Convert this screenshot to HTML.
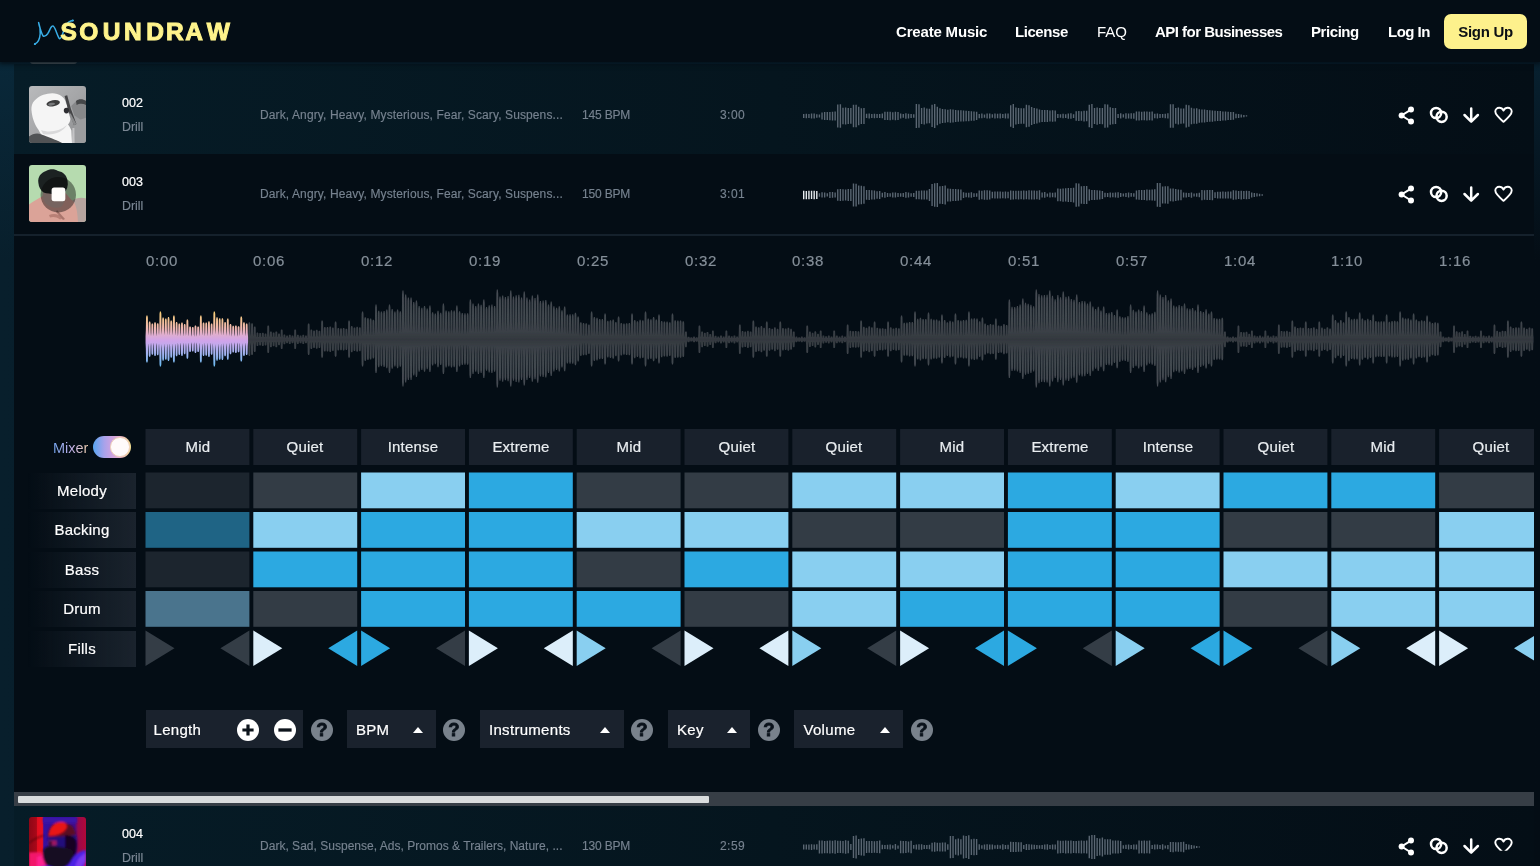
<!DOCTYPE html><html lang="en"><head><meta charset="utf-8"><title>SOUNDRAW</title><style>
*{margin:0;padding:0;box-sizing:border-box}
html,body{width:1540px;height:866px;overflow:hidden}
body{position:relative;font-family:"Liberation Sans",sans-serif;color:#fff;
 background:linear-gradient(180deg,rgba(10,46,66,.6) 60px,rgba(8,30,44,0) 260px),linear-gradient(90deg,#081f2c 0%,#071c28 20%,#06141d 60%,#040d15 100%);}
.abs{position:absolute}
.t{position:absolute;white-space:nowrap;line-height:1}
.t,.nav,#signup,.hcell,.lab,.ctl,.q,#hdr svg{will-change:transform}
#hdr{position:absolute;left:0;top:0;width:1540px;height:62px;background:#040d15;box-shadow:0 1px 5px 1px rgba(4,13,21,.9);z-index:5}
.nav{position:absolute;top:24px;font-size:15px;font-weight:700;color:#fff;white-space:nowrap;line-height:16px}
#signup{position:absolute;left:1444px;top:14px;width:83px;height:35px;border-radius:7px;background:#fdf18c;color:#0b0f14;font-weight:700;font-size:15px;line-height:35px;text-align:center;letter-spacing:-.29px}
#logo{position:absolute;left:62px;top:19px;font-size:24px;font-weight:700;letter-spacing:3.5px;color:#fff48c;line-height:24px}
.row{position:absolute;left:14px;width:1520px}
.thumb{position:absolute;left:29px;width:57px;height:57px;border-radius:3px;overflow:hidden}
.title{font-size:12.5px;color:#fff;left:122px;-webkit-text-stroke:.2px #fff}
.sub{font-size:12.4px;color:#7b8794;left:122px;-webkit-text-stroke:.15px #7b8794}
.meta{font-size:12px;color:#76828f;letter-spacing:.11px;-webkit-text-stroke:.15px #76828f}
#panel{position:absolute;left:14px;top:154px;width:1520px;height:638px;background:#040d15;overflow:hidden}
.tl{font-size:15px;color:#858f99;letter-spacing:.7px;-webkit-text-stroke:.2px #858f99}
.cell{position:absolute;width:104px;height:36px}
.hcell{position:absolute;z-index:2;-webkit-text-stroke:.2px #e9edf0;width:104px;height:36px;letter-spacing:.2px;color:#e9edf0;font-size:15px;text-align:center;line-height:36px}
.lab{position:absolute;left:28px;width:108px;height:35.6px;letter-spacing:.25px;-webkit-text-stroke:.2px #fff;background:linear-gradient(90deg,rgba(26,35,45,0) 0%,rgba(26,35,45,.5) 45%,#1a232d 100%);color:#fff;font-size:15px;text-align:center;line-height:36px}
.ctl{position:absolute;-webkit-text-stroke:.2px #fff;top:710px;height:38px;background:#1a222d;color:#fff;font-size:15px;line-height:39.4px;padding-left:7.5px;letter-spacing:.3px}
.q{position:absolute;top:718.5px;width:22px;height:22px;border-radius:50%;background:#79828c;color:#0a121b;font-weight:700;font-size:18.5px;line-height:22.5px;text-align:center;-webkit-text-stroke:.8px #0a121b}
.caret{position:absolute;top:16.5px;width:0;height:0;border-left:5.5px solid transparent;border-right:5.5px solid transparent;border-bottom:6px solid #fff}
</style></head><body>
<div class="abs" style="left:14px;top:64px;width:1520px;height:90px;background:linear-gradient(90deg,#061c27,#05151e 50%,#040e16)"></div><div class="thumb" style="top:86px"><svg width="57" height="57" viewBox="0 0 57 57"><defs><linearGradient id="g2" x1="0" y1="0" x2="1" y2="1"><stop offset="0" stop-color="#b9babc"/><stop offset=".55" stop-color="#a3a4a6"/><stop offset="1" stop-color="#88898b"/></linearGradient><filter id="b2"><feGaussianBlur stdDeviation=".55"/></filter></defs>
<rect width="57" height="57" fill="url(#g2)"/><g filter="url(#b2)">
<path d="M46 33 L57 31 L57 57 L43 57 Z" fill="#9c9d9f"/>
<path d="M42.2 20 L48.5 13.7 L57 14.5 L57 31.8 L51.6 33.6 L45.4 29.4 Z" fill="#87888a"/>
<path d="M47 15 C50 12.6 54 13 57 15 L57 19 C54 17.4 50 17.6 47.6 19 Z" fill="#454648"/>
<path d="M18.7 7.8 C24 6.6 29 7.6 32 9.8 C34.6 11.4 36.4 14 37 17 C38.2 19 38.6 21 37.6 23 C39 26 40.6 29 41.4 31.4 C41.6 34.6 40.4 37 39 38.4 C40.6 40.6 42 42.6 42.4 44.6 L43 57 L33 57 C28 54 22 53.4 17 52 C13 50 11 47 9.6 44 C6.4 40 3.6 33 2.8 27 C2 22.6 2.4 19.6 4 16.6 C7.6 11.6 13 8.6 18.7 7.8 Z" fill="#f5f5f5"/>
<path d="M12 44 C20 47 30 45.6 38 39 C34 46 24 50 14 48 Z" fill="#d9d9da"/>
<path d="M0 50.5 C3.6 47.6 8.4 46.6 12.4 48.4 C18 50.6 27 53.4 33 57 L0 57 Z" fill="#515254"/>
<ellipse cx="24.2" cy="17.3" rx="6.8" ry="3.1" fill="#3c3c3e" transform="rotate(-10 24.2 17.3)"/>
<ellipse cx="22.6" cy="18.2" rx="3.4" ry="1.4" fill="#77787a" transform="rotate(-10 22.6 18.2)"/>
<path d="M35.6 10 L38.2 9.2 L41.8 22.4 L47.4 38 L45 39.2 L39.2 24 Z" fill="#444547"/>
<path d="M41.4 27 L47.4 38 L45 39.2 L40.6 30 Z" fill="#8a8b8d"/>
<ellipse cx="37.4" cy="24.6" rx="2.6" ry="2.8" fill="#2e2e30"/>
<path d="M43.4 42 L45.4 42 L45.6 57 L43 57 Z" fill="#c4c4c6"/></g></svg></div><div class="t title" style="top:96.5px">002</div><div class="t sub" style="top:121px">Drill</div><div class="t meta" style="left:259.5px;top:109px;letter-spacing:0.11px">Dark, Angry, Heavy, Mysterious, Fear, Scary, Suspens...</div><div class="t meta" style="left:582px;top:109px;letter-spacing:-.18px">145 BPM</div><div class="t meta" style="left:720px;top:109px;letter-spacing:.45px">3:00</div><svg class="abs" style="left:802.3px;top:102.5px" width="448" height="26" viewBox="0 0 448 26"><path d="M1.00 11.1h1.4v3.8h-1.4zM3.62 10.7h1.4v4.6h-1.4zM6.24 10.9h1.4v4.2h-1.4zM8.86 10.6h1.4v4.8h-1.4zM11.48 10.6h1.4v4.8h-1.4zM14.10 11.3h1.4v3.4h-1.4zM16.72 11.4h1.4v3.2h-1.4zM19.34 9.6h1.4v6.8h-1.4zM21.96 9.1h1.4v7.8h-1.4zM24.58 9.0h1.4v8.1h-1.4zM27.20 8.9h1.4v8.3h-1.4zM29.82 8.7h1.4v8.7h-1.4zM32.44 8.5h1.4v8.9h-1.4zM35.06 1.4h1.4v23.2h-1.4zM37.68 1.3h1.4v23.5h-1.4zM40.30 4.8h1.4v16.4h-1.4zM42.92 4.5h1.4v17.0h-1.4zM45.54 4.9h1.4v16.2h-1.4zM48.16 5.1h1.4v15.7h-1.4zM50.78 1.8h1.4v22.5h-1.4zM53.40 1.7h1.4v22.6h-1.4zM56.02 3.8h1.4v18.4h-1.4zM58.64 5.2h1.4v15.7h-1.4zM61.26 5.0h1.4v16.1h-1.4zM63.88 10.8h1.4v4.3h-1.4zM66.50 10.6h1.4v4.8h-1.4zM69.12 11.0h1.4v4.0h-1.4zM71.74 10.7h1.4v4.5h-1.4zM74.36 10.9h1.4v4.2h-1.4zM76.98 10.9h1.4v4.1h-1.4zM79.60 10.6h1.4v4.7h-1.4zM82.22 8.8h1.4v8.3h-1.4zM84.84 8.8h1.4v8.3h-1.4zM87.46 8.8h1.4v8.4h-1.4zM90.08 9.2h1.4v7.6h-1.4zM92.70 8.8h1.4v8.4h-1.4zM95.32 9.0h1.4v8.0h-1.4zM97.94 10.5h1.4v5.1h-1.4zM100.56 11.1h1.4v3.7h-1.4zM103.18 10.3h1.4v5.4h-1.4zM105.80 10.7h1.4v4.7h-1.4zM108.42 11.0h1.4v3.9h-1.4zM111.04 11.3h1.4v3.4h-1.4zM113.66 0.9h1.4v24.1h-1.4zM116.28 1.2h1.4v23.6h-1.4zM118.90 5.0h1.4v16.0h-1.4zM121.52 4.6h1.4v16.8h-1.4zM124.14 5.6h1.4v14.9h-1.4zM126.76 5.8h1.4v14.4h-1.4zM129.38 1.8h1.4v22.3h-1.4zM132.00 1.0h1.4v24.1h-1.4zM134.62 3.8h1.4v18.4h-1.4zM137.24 5.3h1.4v15.4h-1.4zM139.86 5.9h1.4v14.1h-1.4zM142.48 6.3h1.4v13.4h-1.4zM145.10 6.7h1.4v12.6h-1.4zM147.72 6.3h1.4v13.4h-1.4zM150.34 6.5h1.4v13.1h-1.4zM152.96 7.1h1.4v11.8h-1.4zM155.58 7.2h1.4v11.6h-1.4zM158.20 7.3h1.4v11.3h-1.4zM160.82 7.5h1.4v11.0h-1.4zM163.44 7.8h1.4v10.4h-1.4zM166.06 7.9h1.4v10.3h-1.4zM168.68 8.3h1.4v9.4h-1.4zM171.30 8.4h1.4v9.3h-1.4zM173.92 8.8h1.4v8.3h-1.4zM176.54 10.9h1.4v4.3h-1.4zM179.16 10.6h1.4v4.7h-1.4zM181.78 11.4h1.4v3.3h-1.4zM184.40 10.6h1.4v4.8h-1.4zM187.02 10.6h1.4v4.8h-1.4zM189.64 11.3h1.4v3.4h-1.4zM192.26 10.6h1.4v4.8h-1.4zM194.88 10.8h1.4v4.4h-1.4zM197.50 10.5h1.4v5.0h-1.4zM200.12 10.9h1.4v4.1h-1.4zM202.74 10.5h1.4v5.0h-1.4zM205.36 10.4h1.4v5.1h-1.4zM207.98 2.2h1.4v21.6h-1.4zM210.60 1.0h1.4v24.0h-1.4zM213.22 4.6h1.4v16.8h-1.4zM215.84 5.0h1.4v16.0h-1.4zM218.46 5.2h1.4v15.5h-1.4zM221.08 5.2h1.4v15.5h-1.4zM223.70 1.8h1.4v22.4h-1.4zM226.32 2.3h1.4v21.5h-1.4zM228.94 3.9h1.4v18.2h-1.4zM231.56 5.0h1.4v16.0h-1.4zM234.18 5.6h1.4v14.9h-1.4zM236.80 6.6h1.4v12.8h-1.4zM239.42 7.0h1.4v12.0h-1.4zM242.04 7.0h1.4v12.0h-1.4zM244.66 7.1h1.4v11.9h-1.4zM247.28 7.4h1.4v11.2h-1.4zM249.90 7.3h1.4v11.5h-1.4zM252.52 7.6h1.4v10.9h-1.4zM255.14 11.1h1.4v3.8h-1.4zM257.76 11.2h1.4v3.5h-1.4zM260.38 10.7h1.4v4.6h-1.4zM263.00 11.2h1.4v3.7h-1.4zM265.62 10.4h1.4v5.3h-1.4zM268.24 10.3h1.4v5.4h-1.4zM270.86 11.2h1.4v3.7h-1.4zM273.48 8.3h1.4v9.4h-1.4zM276.10 8.1h1.4v9.8h-1.4zM278.72 8.3h1.4v9.5h-1.4zM281.34 7.7h1.4v10.7h-1.4zM283.96 7.7h1.4v10.5h-1.4zM286.58 1.7h1.4v22.5h-1.4zM289.20 1.0h1.4v23.9h-1.4zM291.82 5.0h1.4v16.0h-1.4zM294.44 4.4h1.4v17.3h-1.4zM297.06 5.1h1.4v15.9h-1.4zM299.68 4.9h1.4v16.3h-1.4zM302.30 1.3h1.4v23.4h-1.4zM304.92 1.4h1.4v23.2h-1.4zM307.54 4.2h1.4v17.6h-1.4zM310.16 4.9h1.4v16.3h-1.4zM312.78 5.1h1.4v15.8h-1.4zM315.40 11.0h1.4v3.9h-1.4zM318.02 10.3h1.4v5.3h-1.4zM320.64 11.3h1.4v3.3h-1.4zM323.26 10.2h1.4v5.5h-1.4zM325.88 10.5h1.4v5.0h-1.4zM328.50 10.2h1.4v5.6h-1.4zM331.12 10.2h1.4v5.5h-1.4zM333.74 8.6h1.4v8.8h-1.4zM336.36 8.5h1.4v9.0h-1.4zM338.98 8.7h1.4v8.5h-1.4zM341.60 8.6h1.4v8.7h-1.4zM344.22 8.4h1.4v9.2h-1.4zM346.84 8.7h1.4v8.5h-1.4zM349.46 8.5h1.4v9.1h-1.4zM352.08 10.8h1.4v4.4h-1.4zM354.70 10.4h1.4v5.2h-1.4zM357.32 10.9h1.4v4.1h-1.4zM359.94 11.1h1.4v3.7h-1.4zM362.56 10.7h1.4v4.6h-1.4zM365.18 10.3h1.4v5.3h-1.4zM367.80 1.2h1.4v23.6h-1.4zM370.42 1.2h1.4v23.6h-1.4zM373.04 5.1h1.4v15.7h-1.4zM375.66 4.5h1.4v16.9h-1.4zM378.28 5.4h1.4v15.3h-1.4zM380.90 5.4h1.4v15.2h-1.4zM383.52 1.7h1.4v22.7h-1.4zM386.14 2.3h1.4v21.4h-1.4zM388.76 4.7h1.4v16.5h-1.4zM391.38 5.4h1.4v15.3h-1.4zM394.00 5.2h1.4v15.6h-1.4zM396.62 6.2h1.4v13.5h-1.4zM399.24 6.6h1.4v12.8h-1.4zM401.86 6.6h1.4v12.8h-1.4zM404.48 7.0h1.4v11.9h-1.4zM407.10 7.3h1.4v11.4h-1.4zM409.72 7.4h1.4v11.3h-1.4zM412.34 7.7h1.4v10.6h-1.4zM414.96 8.1h1.4v9.9h-1.4zM417.58 8.0h1.4v10.0h-1.4zM420.20 8.4h1.4v9.2h-1.4zM422.82 8.5h1.4v9.0h-1.4zM425.44 8.8h1.4v8.3h-1.4zM428.06 8.9h1.4v8.2h-1.4zM430.68 9.1h1.4v7.7h-1.4zM433.30 10.8h1.4v4.4h-1.4zM435.92 11.1h1.4v3.8h-1.4zM438.54 11.4h1.4v3.2h-1.4zM441.16 11.9h1.4v2.3h-1.4zM443.78 12.3h1.4v1.3h-1.4z" fill="#5a6672"/></svg><svg class="abs" style="left:1390px;top:100px" width="130" height="30" viewBox="1390 100 130 30"><g fill="#fff" stroke="#fff"><circle cx="1401.6" cy="115.5" r="3" stroke="none"/><circle cx="1411" cy="109.6" r="3" stroke="none"/><circle cx="1411" cy="121.5" r="3" stroke="none"/><path d="M1411 109.6 L1401.6 115.5 L1411 121.5" fill="none" stroke-width="2"/></g><g fill="none" stroke="#fff" stroke-width="2.5"><circle cx="1436.1" cy="113" r="5.1"/><circle cx="1441.6" cy="116.8" r="5.1"/></g><path d="M1471.2 108.4 V121.4 M1464.5 115 L1471.2 121.7 L1477.9 115" fill="none" stroke="#fff" stroke-width="2.5" stroke-linecap="round" stroke-linejoin="round"/><g><path d="M1503.5 121.8 C1499 118 1495.3 115 1495.3 111.6 C1495.3 109.3 1497.1 107.8 1499.2 107.8 C1500.9 107.8 1502.6 108.8 1503.5 110.6 C1504.4 108.8 1506.1 107.8 1507.8 107.8 C1509.9 107.8 1511.7 109.3 1511.7 111.6 C1511.7 115 1508 118 1503.5 121.8 Z" fill="none" stroke="#fff" stroke-width="1.9" stroke-linejoin="round"/></g></svg>
<div class="abs" style="left:14px;top:806px;width:1520px;height:60px;background:linear-gradient(90deg,#061c27,#05151e 50%,#040e16)"></div><div class="thumb" style="top:817px"><svg width="57" height="57" viewBox="0 0 57 57"><defs><linearGradient id="g4" x1="0" y1="0" x2="1" y2="0"><stop offset="0" stop-color="#8e0616"/><stop offset=".13" stop-color="#a80818"/><stop offset=".15" stop-color="#e40e20"/><stop offset=".235" stop-color="#e81020"/><stop offset=".26" stop-color="#3610a0"/><stop offset=".55" stop-color="#2e0e9a"/><stop offset=".8" stop-color="#400c8c"/><stop offset=".86" stop-color="#98084c"/><stop offset="1" stop-color="#b00838"/></linearGradient><filter id="b4"><feGaussianBlur stdDeviation=".9"/></filter></defs>
<rect width="57" height="57" fill="url(#g4)"/><g filter="url(#b4)">
<rect x="14" y="0" width="34" height="6" fill="#3a14a8"/>
<path d="M0 26 C5 22 10 19.6 15 18.6" stroke="#3a0612" stroke-width="1" fill="none"/>
<path d="M19 20 C19 11 24 5 32 5 C40 5 46 10 47 18 L46 24 L20 24 Z" fill="#5a0a20"/>
<path d="M19.6 19 C20 10.6 25 5 32 5 C36 5 38 7 38 10 C36 16 28 19 19.6 19 Z" fill="#e81212"/>
<path d="M19 20 C26 20 40 19 47 18 C49 26 48 36 44 42 L22 42 C19 34 18.6 26 19 20Z" fill="#24107c"/>
<path d="M36 18 C42 18 47 20 47.6 26 C48 34 46 40 42 44 L36 44 Z" fill="#140622"/>
<rect x="19.6" y="23.4" width="8" height="5" fill="#a01860"/><rect x="20" y="24.4" width="3" height="4" fill="#30102a"/>
<path d="M14 36 C14 31 18 28.6 24 29 C32 30 40 30 44 34 C46 40 44 47 38 50 C30 52 20 51 16 46 C14 43 14 40 14 36 Z" fill="#160824"/>
<path d="M0 35.4 L13 35 C13.6 40 15 46 19 50 L20 57 L0 57 Z" fill="#f2146a"/>
<path d="M8 40 L13 38 L16 48 L12 57 L8 57Z" fill="#ff2090"/>
<path d="M57 33 C50 34 45 38 42 44 C40 48 36 51 30 52 L24 57 L57 57 Z" fill="#4c22e4"/>
<path d="M57 36 C52 38 48 42 46 50 L52 50 L57 44Z" fill="#7a3af0"/>
<path d="M57 44 L52 57 L57 57Z" fill="#d01030"/>
<path d="M12 50 C16 48 22 49 26 52 L26 57 L10 57Z" fill="#4a2ae0"/>
</g></svg></div><div class="t title" style="top:827.5px">004</div><div class="t sub" style="top:852px">Drill</div><div class="t meta" style="left:259.5px;top:840px;letter-spacing:0.02px">Dark, Sad, Suspense, Ads, Promos &amp; Trailers, Nature, ...</div><div class="t meta" style="left:582px;top:840px;letter-spacing:-.18px">130 BPM</div><div class="t meta" style="left:720px;top:840px;letter-spacing:.45px">2:59</div><svg class="abs" style="left:802.3px;top:833.5px" width="400" height="26" viewBox="0 0 400 26"><path d="M1.00 10.6h1.4v4.8h-1.4zM3.62 10.4h1.4v5.1h-1.4zM6.24 10.4h1.4v5.3h-1.4zM8.86 10.2h1.4v5.7h-1.4zM11.48 10.4h1.4v5.1h-1.4zM14.10 10.2h1.4v5.6h-1.4zM16.72 6.6h1.4v12.8h-1.4zM19.34 6.4h1.4v13.1h-1.4zM21.96 6.9h1.4v12.3h-1.4zM24.58 6.8h1.4v12.5h-1.4zM27.20 6.5h1.4v13.0h-1.4zM29.82 6.8h1.4v12.4h-1.4zM32.44 6.2h1.4v13.5h-1.4zM35.06 6.8h1.4v12.3h-1.4zM37.68 6.8h1.4v12.3h-1.4zM40.30 6.9h1.4v12.3h-1.4zM42.92 6.3h1.4v13.4h-1.4zM45.54 6.8h1.4v12.4h-1.4zM48.16 10.1h1.4v5.8h-1.4zM50.78 1.9h1.4v22.2h-1.4zM53.40 1.6h1.4v22.9h-1.4zM56.02 4.9h1.4v16.2h-1.4zM58.64 4.4h1.4v17.2h-1.4zM61.26 4.2h1.4v17.6h-1.4zM63.88 7.0h1.4v12.1h-1.4zM66.50 7.1h1.4v11.7h-1.4zM69.12 7.0h1.4v12.0h-1.4zM71.74 7.2h1.4v11.5h-1.4zM74.36 7.0h1.4v12.0h-1.4zM76.98 6.6h1.4v12.7h-1.4zM79.60 10.8h1.4v4.4h-1.4zM82.22 11.0h1.4v4.0h-1.4zM84.84 10.8h1.4v4.5h-1.4zM87.46 10.5h1.4v5.0h-1.4zM90.08 11.3h1.4v3.3h-1.4zM92.70 10.1h1.4v5.7h-1.4zM95.32 11.4h1.4v3.3h-1.4zM97.94 6.8h1.4v12.4h-1.4zM100.56 6.9h1.4v12.3h-1.4zM103.18 7.0h1.4v12.0h-1.4zM105.80 7.4h1.4v11.2h-1.4zM108.42 6.7h1.4v12.5h-1.4zM111.04 11.1h1.4v3.7h-1.4zM113.66 10.4h1.4v5.2h-1.4zM116.28 10.2h1.4v5.6h-1.4zM118.90 10.2h1.4v5.6h-1.4zM121.52 11.0h1.4v4.1h-1.4zM124.14 10.9h1.4v4.1h-1.4zM126.76 10.7h1.4v4.6h-1.4zM129.38 8.7h1.4v8.7h-1.4zM132.00 8.3h1.4v9.4h-1.4zM134.62 8.7h1.4v8.6h-1.4zM137.24 8.7h1.4v8.7h-1.4zM139.86 8.4h1.4v9.2h-1.4zM142.48 8.5h1.4v8.9h-1.4zM145.10 10.2h1.4v5.6h-1.4zM147.72 1.9h1.4v22.3h-1.4zM150.34 2.1h1.4v21.9h-1.4zM152.96 5.2h1.4v15.5h-1.4zM155.58 4.4h1.4v17.2h-1.4zM158.20 5.3h1.4v15.3h-1.4zM160.82 1.6h1.4v22.9h-1.4zM163.44 2.0h1.4v22.0h-1.4zM166.06 1.2h1.4v23.7h-1.4zM168.68 5.2h1.4v15.7h-1.4zM171.30 4.7h1.4v16.6h-1.4zM173.92 5.1h1.4v15.8h-1.4zM176.54 10.3h1.4v5.4h-1.4zM179.16 11.2h1.4v3.5h-1.4zM181.78 10.4h1.4v5.1h-1.4zM184.40 10.2h1.4v5.7h-1.4zM187.02 10.6h1.4v4.8h-1.4zM189.64 10.4h1.4v5.2h-1.4zM192.26 11.3h1.4v3.5h-1.4zM194.88 10.8h1.4v4.3h-1.4zM197.50 11.2h1.4v3.6h-1.4zM200.12 10.3h1.4v5.4h-1.4zM202.74 11.0h1.4v4.0h-1.4zM205.36 10.8h1.4v4.4h-1.4zM207.98 7.8h1.4v10.3h-1.4zM210.60 8.1h1.4v9.8h-1.4zM213.22 7.9h1.4v10.2h-1.4zM215.84 8.2h1.4v9.6h-1.4zM218.46 8.3h1.4v9.5h-1.4zM221.08 10.9h1.4v4.2h-1.4zM223.70 10.1h1.4v5.8h-1.4zM226.32 10.2h1.4v5.7h-1.4zM228.94 10.6h1.4v4.8h-1.4zM231.56 10.8h1.4v4.5h-1.4zM234.18 11.0h1.4v4.1h-1.4zM236.80 11.3h1.4v3.4h-1.4zM239.42 11.0h1.4v3.9h-1.4zM242.04 10.4h1.4v5.2h-1.4zM244.66 10.3h1.4v5.5h-1.4zM247.28 10.9h1.4v4.1h-1.4zM249.90 10.4h1.4v5.2h-1.4zM252.52 10.4h1.4v5.2h-1.4zM255.14 6.5h1.4v12.9h-1.4zM257.76 6.8h1.4v12.5h-1.4zM260.38 6.8h1.4v12.3h-1.4zM263.00 6.5h1.4v13.1h-1.4zM265.62 6.8h1.4v12.4h-1.4zM268.24 6.5h1.4v12.9h-1.4zM270.86 7.0h1.4v11.9h-1.4zM273.48 6.9h1.4v12.3h-1.4zM276.10 6.7h1.4v12.6h-1.4zM278.72 6.6h1.4v12.9h-1.4zM281.34 6.8h1.4v12.4h-1.4zM283.96 6.5h1.4v13.0h-1.4zM286.58 1.8h1.4v22.4h-1.4zM289.20 1.1h1.4v23.8h-1.4zM291.82 1.0h1.4v24.1h-1.4zM294.44 4.1h1.4v17.9h-1.4zM297.06 4.5h1.4v17.1h-1.4zM299.68 3.6h1.4v18.8h-1.4zM302.30 5.3h1.4v15.4h-1.4zM304.92 5.3h1.4v15.5h-1.4zM307.54 5.2h1.4v15.6h-1.4zM310.16 6.5h1.4v12.9h-1.4zM312.78 6.6h1.4v12.9h-1.4zM315.40 6.6h1.4v12.9h-1.4zM318.02 7.0h1.4v11.9h-1.4zM320.64 11.2h1.4v3.6h-1.4zM323.26 10.8h1.4v4.3h-1.4zM325.88 10.6h1.4v4.9h-1.4zM328.50 11.1h1.4v3.8h-1.4zM331.12 10.5h1.4v5.0h-1.4zM333.74 10.6h1.4v4.8h-1.4zM336.36 6.5h1.4v13.0h-1.4zM338.98 6.8h1.4v12.4h-1.4zM341.60 6.6h1.4v12.8h-1.4zM344.22 6.7h1.4v12.6h-1.4zM346.84 6.5h1.4v13.0h-1.4zM349.46 10.9h1.4v4.2h-1.4zM352.08 10.6h1.4v4.8h-1.4zM354.70 10.6h1.4v4.7h-1.4zM357.32 11.1h1.4v3.8h-1.4zM359.94 10.2h1.4v5.5h-1.4zM362.56 11.4h1.4v3.2h-1.4zM365.18 10.9h1.4v4.3h-1.4zM367.80 8.1h1.4v9.8h-1.4zM370.42 7.9h1.4v10.3h-1.4zM373.04 8.3h1.4v9.3h-1.4zM375.66 8.3h1.4v9.4h-1.4zM378.28 8.1h1.4v9.7h-1.4zM380.90 7.8h1.4v10.4h-1.4zM383.52 10.1h1.4v5.7h-1.4zM386.14 10.6h1.4v4.8h-1.4zM388.76 11.1h1.4v3.8h-1.4zM391.38 11.5h1.4v2.9h-1.4zM394.00 12.0h1.4v2.0h-1.4zM396.62 12.5h1.4v1.0h-1.4z" fill="#5a6672"/></svg><svg class="abs" style="left:1390px;top:831px" width="130" height="30" viewBox="1390 100 130 30"><g fill="#fff" stroke="#fff"><circle cx="1401.6" cy="115.5" r="3" stroke="none"/><circle cx="1411" cy="109.6" r="3" stroke="none"/><circle cx="1411" cy="121.5" r="3" stroke="none"/><path d="M1411 109.6 L1401.6 115.5 L1411 121.5" fill="none" stroke-width="2"/></g><g fill="none" stroke="#fff" stroke-width="2.5"><circle cx="1436.1" cy="113" r="5.1"/><circle cx="1441.6" cy="116.8" r="5.1"/></g><path d="M1471.2 108.4 V121.4 M1464.5 115 L1471.2 121.7 L1477.9 115" fill="none" stroke="#fff" stroke-width="2.5" stroke-linecap="round" stroke-linejoin="round"/><clipPath id="hc846"><rect x="1490" y="100" width="30" height="19.7"/></clipPath><g clip-path="url(#hc846)"><path d="M1503.5 121.8 C1499 118 1495.3 115 1495.3 111.6 C1495.3 109.3 1497.1 107.8 1499.2 107.8 C1500.9 107.8 1502.6 108.8 1503.5 110.6 C1504.4 108.8 1506.1 107.8 1507.8 107.8 C1509.9 107.8 1511.7 109.3 1511.7 111.6 C1511.7 115 1508 118 1503.5 121.8 Z" fill="none" stroke="#fff" stroke-width="1.9" stroke-linejoin="round"/></g></svg>
<div class="abs" style="left:30px;top:58px;width:47px;height:6.4px;background:#5a666c;border-radius:0 0 3px 3px"></div>
<div id="panel"></div>
<div class="abs" style="left:14px;top:154px;width:1520px;height:80px;background:transparent"></div><div class="thumb" style="top:165px"><svg width="57" height="57" viewBox="0 0 57 57"><defs><filter id="b3"><feGaussianBlur stdDeviation=".7"/></filter></defs><rect width="57" height="57" fill="#b6dbaf"/><g filter="url(#b3)">
<path d="M43 36 C47 32.6 53 32 57 33.6 L57 57 L43 57 Z" fill="#b7a49f"/>
<path d="M0 39.6 C4 36.4 9 34 13 31.6 C15 29.6 17 27.6 20 27 L36 27.6 C39 31 42 35 45 37 C47.6 42 48.6 48 49 57 L0 57 Z" fill="#dba398"/>
<path d="M20 50 C25 48 30 49 34 53 L31 54.4 C27 51.6 24 51.6 21 52.4 Z" fill="#b98076"/>
<path d="M28 45 L36 54 L34 55 L27 47 Z" fill="#a8756c"/>
<path d="M14 27 C20 29.4 30 29.6 36 27 C37 32 36 38 32 42 C27 44 20 42 16 38 C13.6 34 13.4 30 14 27Z" fill="#c8aaa2"/>
<path d="M9.4 18 C8.4 12 12 7.6 17 6 C21 3.6 26 4 29 6 C34 6.6 38 10.6 38.6 16 C39.4 21 38 25 35 28 C30 29.6 20 29.4 14.6 27.6 C11.6 25.4 9.8 22 9.4 18 Z" fill="#1c2124"/><ellipse cx="24" cy="17" rx="13.6" ry="11" fill="#1c2124"/>
</g><circle cx="29.3" cy="29.7" r="17.7" fill="#050505" fill-opacity=".42"/>
<rect x="22.6" y="22.6" width="13.7" height="13.7" rx="2.5" fill="#fffdfb"/></svg></div><div class="t title" style="top:175.5px">003</div><div class="t sub" style="top:200px">Drill</div><div class="t meta" style="left:259.5px;top:188px;letter-spacing:0.11px">Dark, Angry, Heavy, Mysterious, Fear, Scary, Suspens...</div><div class="t meta" style="left:582px;top:188px;letter-spacing:-.18px">150 BPM</div><div class="t meta" style="left:720px;top:188px;letter-spacing:.45px">3:01</div><svg class="abs" style="left:802.3px;top:182px" width="464" height="26" viewBox="0 0 464 26"><path d="M16.72 11.3h1.4v3.4h-1.4zM19.34 10.3h1.4v5.3h-1.4zM21.96 10.5h1.4v5.0h-1.4zM24.58 11.3h1.4v3.3h-1.4zM27.20 10.1h1.4v5.8h-1.4zM29.82 10.1h1.4v5.7h-1.4zM32.44 10.5h1.4v4.9h-1.4zM35.06 7.3h1.4v11.4h-1.4zM37.68 7.0h1.4v11.9h-1.4zM40.30 7.3h1.4v11.4h-1.4zM42.92 7.4h1.4v11.2h-1.4zM45.54 7.1h1.4v11.8h-1.4zM48.16 7.0h1.4v11.9h-1.4zM50.78 1.6h1.4v22.8h-1.4zM53.40 1.7h1.4v22.7h-1.4zM56.02 3.6h1.4v18.9h-1.4zM58.64 3.7h1.4v18.6h-1.4zM61.26 4.3h1.4v17.4h-1.4zM63.88 8.1h1.4v9.7h-1.4zM66.50 8.1h1.4v9.8h-1.4zM69.12 8.3h1.4v9.3h-1.4zM71.74 8.5h1.4v8.9h-1.4zM74.36 9.3h1.4v7.5h-1.4zM76.98 9.1h1.4v7.8h-1.4zM79.60 10.8h1.4v4.4h-1.4zM82.22 10.1h1.4v5.7h-1.4zM84.84 10.9h1.4v4.2h-1.4zM87.46 11.3h1.4v3.4h-1.4zM90.08 10.6h1.4v4.8h-1.4zM92.70 10.4h1.4v5.2h-1.4zM95.32 11.0h1.4v3.9h-1.4zM97.94 11.3h1.4v3.4h-1.4zM100.56 11.0h1.4v4.1h-1.4zM103.18 10.1h1.4v5.7h-1.4zM105.80 10.4h1.4v5.2h-1.4zM108.42 11.2h1.4v3.5h-1.4zM111.04 11.1h1.4v3.8h-1.4zM113.66 8.8h1.4v8.4h-1.4zM116.28 8.7h1.4v8.6h-1.4zM118.90 8.6h1.4v8.9h-1.4zM121.52 8.4h1.4v9.2h-1.4zM124.14 8.5h1.4v9.1h-1.4zM126.76 7.1h1.4v11.8h-1.4zM129.38 1.9h1.4v22.1h-1.4zM132.00 1.2h1.4v23.6h-1.4zM134.62 1.1h1.4v23.8h-1.4zM137.24 4.2h1.4v17.6h-1.4zM139.86 3.9h1.4v18.1h-1.4zM142.48 3.6h1.4v18.9h-1.4zM145.10 6.5h1.4v13.1h-1.4zM147.72 6.7h1.4v12.7h-1.4zM150.34 7.1h1.4v11.8h-1.4zM152.96 7.0h1.4v12.0h-1.4zM155.58 7.3h1.4v11.5h-1.4zM158.20 7.6h1.4v10.7h-1.4zM160.82 10.2h1.4v5.7h-1.4zM163.44 10.8h1.4v4.5h-1.4zM166.06 10.7h1.4v4.7h-1.4zM168.68 10.3h1.4v5.5h-1.4zM171.30 11.2h1.4v3.7h-1.4zM173.92 11.2h1.4v3.6h-1.4zM176.54 8.4h1.4v9.3h-1.4zM179.16 8.7h1.4v8.6h-1.4zM181.78 8.3h1.4v9.4h-1.4zM184.40 8.3h1.4v9.4h-1.4zM187.02 8.5h1.4v9.0h-1.4zM189.64 9.8h1.4v6.4h-1.4zM192.26 9.4h1.4v7.1h-1.4zM194.88 9.6h1.4v6.9h-1.4zM197.50 9.5h1.4v7.0h-1.4zM200.12 9.7h1.4v6.6h-1.4zM202.74 9.5h1.4v6.9h-1.4zM205.36 9.7h1.4v6.5h-1.4zM207.98 8.4h1.4v9.3h-1.4zM210.60 8.7h1.4v8.7h-1.4zM213.22 8.7h1.4v8.6h-1.4zM215.84 8.7h1.4v8.7h-1.4zM218.46 8.8h1.4v8.4h-1.4zM221.08 8.6h1.4v8.8h-1.4zM223.70 8.7h1.4v8.5h-1.4zM226.32 8.3h1.4v9.3h-1.4zM228.94 8.5h1.4v9.1h-1.4zM231.56 8.5h1.4v9.0h-1.4zM234.18 8.8h1.4v8.4h-1.4zM236.80 8.3h1.4v9.4h-1.4zM239.42 10.5h1.4v5.0h-1.4zM242.04 10.1h1.4v5.7h-1.4zM244.66 11.4h1.4v3.3h-1.4zM247.28 10.6h1.4v4.9h-1.4zM249.90 10.8h1.4v4.5h-1.4zM252.52 10.5h1.4v5.1h-1.4zM255.14 6.6h1.4v12.7h-1.4zM257.76 6.8h1.4v12.4h-1.4zM260.38 6.4h1.4v13.3h-1.4zM263.00 6.3h1.4v13.3h-1.4zM265.62 6.0h1.4v14.0h-1.4zM268.24 6.0h1.4v14.0h-1.4zM270.86 5.7h1.4v14.7h-1.4zM273.48 1.2h1.4v23.6h-1.4zM276.10 1.5h1.4v23.0h-1.4zM278.72 4.2h1.4v17.6h-1.4zM281.34 4.0h1.4v18.1h-1.4zM283.96 3.9h1.4v18.1h-1.4zM286.58 7.2h1.4v11.5h-1.4zM289.20 7.9h1.4v10.2h-1.4zM291.82 8.1h1.4v9.9h-1.4zM294.44 8.2h1.4v9.5h-1.4zM297.06 8.6h1.4v8.8h-1.4zM299.68 9.0h1.4v8.0h-1.4zM302.30 10.8h1.4v4.5h-1.4zM304.92 11.1h1.4v3.8h-1.4zM307.54 10.5h1.4v5.0h-1.4zM310.16 10.8h1.4v4.5h-1.4zM312.78 10.6h1.4v4.8h-1.4zM315.40 10.2h1.4v5.6h-1.4zM318.02 11.1h1.4v3.9h-1.4zM320.64 11.4h1.4v3.2h-1.4zM323.26 11.0h1.4v4.0h-1.4zM325.88 10.5h1.4v5.0h-1.4zM328.50 11.1h1.4v3.7h-1.4zM331.12 11.2h1.4v3.6h-1.4zM333.74 8.5h1.4v9.1h-1.4zM336.36 8.1h1.4v9.7h-1.4zM338.98 8.1h1.4v9.8h-1.4zM341.60 8.0h1.4v9.9h-1.4zM344.22 7.5h1.4v10.9h-1.4zM346.84 7.7h1.4v10.6h-1.4zM349.46 7.6h1.4v10.9h-1.4zM352.08 7.3h1.4v11.5h-1.4zM354.70 1.1h1.4v23.7h-1.4zM357.32 1.0h1.4v24.0h-1.4zM359.94 4.4h1.4v17.1h-1.4zM362.56 4.3h1.4v17.3h-1.4zM365.18 4.2h1.4v17.6h-1.4zM367.80 6.6h1.4v12.7h-1.4zM370.42 6.6h1.4v12.8h-1.4zM373.04 7.1h1.4v11.8h-1.4zM375.66 7.6h1.4v10.8h-1.4zM378.28 7.8h1.4v10.5h-1.4zM380.90 10.5h1.4v5.0h-1.4zM383.52 10.7h1.4v4.7h-1.4zM386.14 11.0h1.4v4.0h-1.4zM388.76 10.4h1.4v5.3h-1.4zM391.38 11.4h1.4v3.2h-1.4zM394.00 11.2h1.4v3.6h-1.4zM396.62 10.8h1.4v4.4h-1.4zM399.24 7.9h1.4v10.3h-1.4zM401.86 8.3h1.4v9.5h-1.4zM404.48 8.0h1.4v10.1h-1.4zM407.10 8.0h1.4v10.1h-1.4zM409.72 7.9h1.4v10.3h-1.4zM412.34 10.2h1.4v5.7h-1.4zM414.96 9.7h1.4v6.7h-1.4zM417.58 9.7h1.4v6.7h-1.4zM420.20 9.5h1.4v6.9h-1.4zM422.82 9.7h1.4v6.7h-1.4zM425.44 9.6h1.4v6.8h-1.4zM428.06 9.5h1.4v6.9h-1.4zM430.68 8.3h1.4v9.4h-1.4zM433.30 8.4h1.4v9.2h-1.4zM435.92 8.9h1.4v8.2h-1.4zM438.54 8.7h1.4v8.7h-1.4zM441.16 8.9h1.4v8.2h-1.4zM443.78 8.8h1.4v8.4h-1.4zM446.40 9.1h1.4v7.9h-1.4zM449.02 10.4h1.4v5.2h-1.4zM451.64 10.9h1.4v4.2h-1.4zM454.26 11.3h1.4v3.3h-1.4zM456.88 11.8h1.4v2.4h-1.4zM459.50 12.3h1.4v1.4h-1.4z" fill="#5a6672"/><path d="M1.00 8.8h1.4v8.4h-1.4zM3.62 8.9h1.4v8.3h-1.4zM6.24 8.8h1.4v8.4h-1.4zM8.86 8.8h1.4v8.3h-1.4zM11.48 8.7h1.4v8.6h-1.4zM14.10 8.9h1.4v8.1h-1.4z" fill="#e6eaee"/></svg><svg class="abs" style="left:1390px;top:179px" width="130" height="30" viewBox="1390 100 130 30"><g fill="#fff" stroke="#fff"><circle cx="1401.6" cy="115.5" r="3" stroke="none"/><circle cx="1411" cy="109.6" r="3" stroke="none"/><circle cx="1411" cy="121.5" r="3" stroke="none"/><path d="M1411 109.6 L1401.6 115.5 L1411 121.5" fill="none" stroke-width="2"/></g><g fill="none" stroke="#fff" stroke-width="2.5"><circle cx="1436.1" cy="113" r="5.1"/><circle cx="1441.6" cy="116.8" r="5.1"/></g><path d="M1471.2 108.4 V121.4 M1464.5 115 L1471.2 121.7 L1477.9 115" fill="none" stroke="#fff" stroke-width="2.5" stroke-linecap="round" stroke-linejoin="round"/><g><path d="M1503.5 121.8 C1499 118 1495.3 115 1495.3 111.6 C1495.3 109.3 1497.1 107.8 1499.2 107.8 C1500.9 107.8 1502.6 108.8 1503.5 110.6 C1504.4 108.8 1506.1 107.8 1507.8 107.8 C1509.9 107.8 1511.7 109.3 1511.7 111.6 C1511.7 115 1508 118 1503.5 121.8 Z" fill="none" stroke="#fff" stroke-width="1.9" stroke-linejoin="round"/></g></svg>
<div class="abs" style="left:14px;top:234px;width:1520px;height:1.5px;background:#15212c"></div>
<div class="abs" style="left:14px;top:236px;width:1520px;height:556px;overflow:hidden">
<div class="t tl" style="left:131.5px;top:16.599999999999994px">0:00</div>
<div class="t tl" style="left:239.3px;top:16.599999999999994px">0:06</div>
<div class="t tl" style="left:347.1px;top:16.599999999999994px">0:12</div>
<div class="t tl" style="left:454.9px;top:16.599999999999994px">0:19</div>
<div class="t tl" style="left:562.7px;top:16.599999999999994px">0:25</div>
<div class="t tl" style="left:670.5px;top:16.599999999999994px">0:32</div>
<div class="t tl" style="left:778.3px;top:16.599999999999994px">0:38</div>
<div class="t tl" style="left:886.1px;top:16.599999999999994px">0:44</div>
<div class="t tl" style="left:993.9px;top:16.599999999999994px">0:51</div>
<div class="t tl" style="left:1101.6999999999998px;top:16.599999999999994px">0:57</div>
<div class="t tl" style="left:1209.5px;top:16.599999999999994px">1:04</div>
<div class="t tl" style="left:1317.3px;top:16.599999999999994px">1:10</div>
<div class="t tl" style="left:1425.1px;top:16.599999999999994px">1:16</div>
<svg class="abs" style="left:0;top:0" width="1520" height="180" viewBox="0 0 1520 180"><defs><linearGradient id="wg" gradientUnits="userSpaceOnUse" x1="0" y1="74.5" x2="0" y2="132.5"><stop offset="0" stop-color="#f8d070"/><stop offset=".3" stop-color="#f0b8b0"/><stop offset=".52" stop-color="#d0a4ea"/><stop offset=".75" stop-color="#a0b4f0"/><stop offset="1" stop-color="#60bcf0"/></linearGradient><linearGradient id="gg" gradientUnits="userSpaceOnUse" x1="0" y1="53.5" x2="0" y2="153.5"><stop offset="0" stop-color="#464c53"/><stop offset=".3" stop-color="#41474e"/><stop offset=".42" stop-color="#3a4046"/><stop offset=".5" stop-color="#33383e"/><stop offset=".58" stop-color="#3a4046"/><stop offset=".7" stop-color="#41474e"/><stop offset="1" stop-color="#464c53"/></linearGradient><filter id="wb" x="0" y="0" width="100%" height="100%"><feGaussianBlur stdDeviation=".3 .2"/></filter></defs><g filter="url(#wb)"><path d="M235.86 86.3L236.28 87.7L236.48 96.6L236.76 100.9L236.76 106.0L236.48 110.1L236.28 118.7L235.86 120.0L234.86 120.0L234.44 118.7L234.24 110.1L233.96 106.0L233.96 100.9L234.24 96.6L234.44 87.7L234.86 86.3zM238.55 87.2L238.97 88.5L239.17 97.0L239.45 101.1L239.45 105.8L239.17 109.7L238.97 117.9L238.55 119.1L237.55 119.1L237.13 117.9L236.93 109.7L236.66 105.8L236.66 101.1L236.93 97.0L237.13 88.5L237.55 87.2zM241.25 90.5L241.67 91.5L241.87 98.3L242.15 101.3L242.15 105.7L241.87 108.5L241.67 115.0L241.25 116.0L240.25 116.0L239.83 115.0L239.63 108.5L239.35 105.7L239.35 101.3L239.63 98.3L239.83 91.5L240.25 90.5zM243.94 96.6L244.36 97.2L244.56 100.7L244.84 101.3L244.84 105.7L244.56 106.1L244.36 109.6L243.94 110.1L242.94 110.1L242.53 109.6L242.32 106.1L242.05 105.7L242.05 101.3L242.32 100.7L242.53 97.2L242.94 96.6zM246.64 97.1L247.06 97.6L247.26 100.9L247.54 101.3L247.54 105.7L247.26 106.0L247.06 109.1L246.64 109.6L245.64 109.6L245.22 109.1L245.02 106.0L244.74 105.7L244.74 101.3L245.02 100.9L245.22 97.6L245.64 97.1zM249.33 96.7L249.75 97.3L249.95 100.8L250.23 101.3L250.23 105.7L249.95 106.1L249.75 109.5L249.33 110.0L248.33 110.0L247.91 109.5L247.71 106.1L247.44 105.7L247.44 101.3L247.71 100.8L247.91 97.3L248.33 96.7zM252.03 97.4L252.45 97.9L252.65 101.1L252.93 101.3L252.93 105.7L252.65 105.8L252.45 108.9L252.03 109.4L251.03 109.4L250.61 108.9L250.41 105.8L250.13 105.7L250.13 101.3L250.41 101.1L250.61 97.9L251.03 97.4zM254.72 89.5L255.14 90.6L255.34 97.9L255.62 101.3L255.62 105.7L255.34 108.9L255.14 115.9L254.72 116.9L253.72 116.9L253.30 115.9L253.10 108.9L252.83 105.7L252.83 101.3L253.10 97.9L253.30 90.6L253.72 89.5zM257.42 95.4L257.84 96.0L258.04 100.3L258.32 101.3L258.32 105.7L258.04 106.6L257.84 110.7L257.42 111.3L256.42 111.3L256.00 110.7L255.80 106.6L255.52 105.7L255.52 101.3L255.80 100.3L256.00 96.0L256.42 95.4zM260.12 96.4L260.54 96.9L260.74 100.6L261.01 101.3L261.01 105.7L260.74 106.2L260.54 109.8L260.12 110.3L259.12 110.3L258.69 109.8L258.50 106.2L258.22 105.7L258.22 101.3L258.50 100.6L258.69 96.9L259.12 96.4zM262.81 95.4L263.23 96.0L263.43 100.2L263.71 101.3L263.71 105.7L263.43 106.6L263.23 110.7L262.81 111.3L261.81 111.3L261.39 110.7L261.19 106.6L260.91 105.7L260.91 101.3L261.19 100.2L261.39 96.0L261.81 95.4zM265.50 97.4L265.93 97.9L266.12 101.1L266.40 101.3L266.40 105.7L266.12 105.8L265.93 108.8L265.50 109.3L264.50 109.3L264.08 108.8L263.88 105.8L263.61 105.7L263.61 101.3L263.88 101.1L264.08 97.9L264.50 97.4zM268.20 93.5L268.62 94.3L268.82 99.5L269.10 101.3L269.10 105.7L268.82 107.3L268.62 112.3L268.20 113.1L267.20 113.1L266.78 112.3L266.58 107.3L266.30 105.7L266.30 101.3L266.58 99.5L266.78 94.3L267.20 93.5zM270.89 98.5L271.31 98.9L271.51 101.5L271.79 101.3L271.79 105.7L271.51 105.4L271.31 107.9L270.89 108.3L269.89 108.3L269.47 107.9L269.27 105.4L269.00 105.7L269.00 101.3L269.27 101.5L269.47 98.9L269.89 98.5zM273.59 99.6L274.01 99.9L274.21 102.0L274.49 101.3L274.49 105.7L274.21 105.0L274.01 106.9L273.59 107.2L272.59 107.2L272.17 106.9L271.97 105.0L271.69 105.7L271.69 101.3L271.97 102.0L272.17 99.9L272.59 99.6zM276.28 98.7L276.70 99.1L276.90 101.6L277.18 101.3L277.18 105.7L276.90 105.3L276.70 107.7L276.28 108.1L275.28 108.1L274.86 107.7L274.66 105.3L274.39 105.7L274.39 101.3L274.66 101.6L274.86 99.1L275.28 98.7zM278.98 99.5L279.40 99.8L279.60 101.9L279.88 101.3L279.88 105.7L279.60 105.0L279.40 107.0L278.98 107.3L277.98 107.3L277.56 107.0L277.36 105.0L277.08 105.7L277.08 101.3L277.36 101.9L277.56 99.8L277.98 99.5zM281.67 93.5L282.09 94.3L282.29 99.5L282.57 101.3L282.57 105.7L282.29 107.3L282.09 112.3L281.67 113.1L280.67 113.1L280.25 112.3L280.05 107.3L279.78 105.7L279.78 101.3L280.05 99.5L280.25 94.3L280.67 93.5zM284.37 98.8L284.79 99.2L284.99 101.6L285.27 101.3L285.27 105.7L284.99 105.3L284.79 107.6L284.37 108.0L283.37 108.0L282.95 107.6L282.75 105.3L282.47 105.7L282.47 101.3L282.75 101.6L282.95 99.2L283.37 98.8zM287.06 99.5L287.48 99.9L287.68 101.9L287.96 101.3L287.96 105.7L287.68 105.0L287.48 107.0L287.06 107.3L286.06 107.3L285.64 107.0L285.44 105.0L285.17 105.7L285.17 101.3L285.44 101.9L285.64 99.9L286.06 99.5zM289.76 98.8L290.18 99.2L290.38 101.6L290.66 101.3L290.66 105.7L290.38 105.3L290.18 107.7L289.76 108.0L288.76 108.0L288.34 107.7L288.14 105.3L287.86 105.7L287.86 101.3L288.14 101.6L288.34 99.2L288.76 98.8zM292.45 99.5L292.88 99.8L293.07 101.9L293.35 101.3L293.35 105.7L293.07 105.0L292.88 107.0L292.45 107.3L291.45 107.3L291.03 107.0L290.83 105.0L290.56 105.7L290.56 101.3L290.83 101.9L291.03 99.8L291.45 99.5zM295.15 87.5L295.57 88.8L295.77 97.1L296.05 101.1L296.05 105.8L295.77 109.6L295.57 117.6L295.15 118.9L294.15 118.9L293.73 117.6L293.53 109.6L293.25 105.8L293.25 101.1L293.53 97.1L293.73 88.8L294.15 87.5zM297.84 93.6L298.26 94.4L298.46 99.5L298.74 101.3L298.74 105.7L298.46 107.3L298.26 112.3L297.84 113.0L296.84 113.0L296.42 112.3L296.22 107.3L295.95 105.7L295.95 101.3L296.22 99.5L296.42 94.4L296.84 93.6zM300.54 94.6L300.96 95.3L301.16 100.0L301.44 101.3L301.44 105.7L301.16 106.9L300.96 111.3L300.54 112.0L299.54 112.0L299.12 111.3L298.92 106.9L298.64 105.7L298.64 101.3L298.92 100.0L299.12 95.3L299.54 94.6zM303.24 93.8L303.66 94.6L303.86 99.6L304.13 101.3L304.13 105.7L303.86 107.2L303.66 112.0L303.24 112.8L302.24 112.8L301.81 112.0L301.62 107.2L301.34 105.7L301.34 101.3L301.62 99.6L301.81 94.6L302.24 93.8zM305.93 94.8L306.35 95.5L306.55 100.0L306.83 101.3L306.83 105.7L306.55 106.8L306.35 111.2L305.93 111.9L304.93 111.9L304.51 111.2L304.31 106.8L304.03 105.7L304.03 101.3L304.31 100.0L304.51 95.5L304.93 94.8zM308.62 84.5L309.05 86.0L309.25 95.9L309.52 100.7L309.52 106.2L309.25 110.8L309.05 120.3L308.62 121.7L307.62 121.7L307.20 120.3L307.00 110.8L306.73 106.2L306.73 100.7L307.00 95.9L307.20 86.0L307.62 84.5zM311.32 91.1L311.74 92.1L311.94 98.5L312.22 101.3L312.22 105.7L311.94 108.3L311.74 114.5L311.32 115.4L310.32 115.4L309.90 114.5L309.70 108.3L309.42 105.7L309.42 101.3L309.70 98.5L309.90 92.1L310.32 91.1zM314.01 91.0L314.44 92.0L314.63 98.5L314.91 101.3L314.91 105.7L314.63 108.3L314.44 114.5L314.01 115.5L313.01 115.5L312.59 114.5L312.39 108.3L312.12 105.7L312.12 101.3L312.39 98.5L312.59 92.0L313.01 91.0zM316.71 90.6L317.13 91.6L317.33 98.3L317.61 101.3L317.61 105.7L317.33 108.5L317.13 114.9L316.71 115.9L315.71 115.9L315.29 114.9L315.09 108.5L314.81 105.7L314.81 101.3L315.09 98.3L315.29 91.6L315.71 90.6zM319.40 91.5L319.82 92.4L320.02 98.7L320.30 101.3L320.30 105.7L320.02 108.1L319.82 114.1L319.40 115.1L318.40 115.1L317.98 114.1L317.78 108.1L317.51 105.7L317.51 101.3L317.78 98.7L317.98 92.4L318.40 91.5zM322.10 85.5L322.52 86.9L322.72 96.3L323.00 100.8L323.00 106.1L322.72 110.4L322.52 119.4L322.10 120.8L321.10 120.8L320.68 119.4L320.48 110.4L320.20 106.1L320.20 100.8L320.48 96.3L320.68 86.9L321.10 85.5zM324.79 92.1L325.21 93.0L325.41 99.0L325.69 101.3L325.69 105.7L325.41 107.9L325.21 113.5L324.79 114.4L323.79 114.4L323.37 113.5L323.17 107.9L322.90 105.7L322.90 101.3L323.17 99.0L323.37 93.0L323.79 92.1zM327.49 92.3L327.91 93.2L328.11 99.0L328.39 101.3L328.39 105.7L328.11 107.8L327.91 113.4L327.49 114.3L326.49 114.3L326.07 113.4L325.87 107.8L325.59 105.7L325.59 101.3L325.87 99.0L326.07 93.2L326.49 92.3zM330.18 92.1L330.60 93.1L330.80 99.0L331.08 101.3L331.08 105.7L330.80 107.9L330.60 113.5L330.18 114.4L329.18 114.4L328.76 113.5L328.56 107.9L328.29 105.7L328.29 101.3L328.56 99.0L328.76 93.1L329.18 92.1zM332.88 92.7L333.30 93.5L333.50 99.2L333.78 101.3L333.78 105.7L333.50 107.7L333.30 113.1L332.88 113.9L331.88 113.9L331.46 113.1L331.26 107.7L330.98 105.7L330.98 101.3L331.26 99.2L331.46 93.5L331.88 92.7zM335.57 84.5L336.00 86.0L336.19 95.9L336.47 100.7L336.47 106.2L336.19 110.8L336.00 120.3L335.57 121.7L334.57 121.7L334.15 120.3L333.95 110.8L333.68 106.2L333.68 100.7L333.95 95.9L334.15 86.0L334.57 84.5zM338.27 90.1L338.69 91.2L338.89 98.1L339.17 101.3L339.17 105.7L338.89 108.6L338.69 115.3L338.27 116.3L337.27 116.3L336.85 115.3L336.65 108.6L336.37 105.7L336.37 101.3L336.65 98.1L336.85 91.2L337.27 90.1zM340.96 91.4L341.38 92.3L341.58 98.7L341.86 101.3L341.86 105.7L341.58 108.2L341.38 114.2L340.96 115.1L339.96 115.1L339.54 114.2L339.34 108.2L339.07 105.7L339.07 101.3L339.34 98.7L339.54 92.3L339.96 91.4zM343.66 90.7L344.08 91.7L344.28 98.4L344.56 101.3L344.56 105.7L344.28 108.4L344.08 114.8L343.66 115.8L342.66 115.8L342.24 114.8L342.04 108.4L341.76 105.7L341.76 101.3L342.04 98.4L342.24 91.7L342.66 90.7zM346.36 91.3L346.78 92.3L346.98 98.6L347.25 101.3L347.25 105.7L346.98 108.2L346.78 114.3L346.36 115.2L345.36 115.2L344.94 114.3L344.74 108.2L344.46 105.7L344.46 101.3L344.74 98.6L344.94 92.3L345.36 91.3zM349.05 75.5L349.47 77.7L349.67 92.3L349.95 99.3L349.95 107.5L349.67 114.3L349.47 128.2L349.05 130.4L348.05 130.4L347.63 128.2L347.43 114.3L347.15 107.5L347.15 99.3L347.43 92.3L347.63 77.7L348.05 75.5zM351.75 81.2L352.17 83.0L352.37 94.6L352.64 100.2L352.64 106.7L352.37 112.1L352.17 123.2L351.75 124.9L350.75 124.9L350.32 123.2L350.12 112.1L349.85 106.7L349.85 100.2L350.12 94.6L350.32 83.0L350.75 81.2zM354.44 82.1L354.86 83.8L355.06 95.0L355.34 100.3L355.34 106.6L355.06 111.7L354.86 122.4L354.44 124.0L353.44 124.0L353.02 122.4L352.82 111.7L352.54 106.6L352.54 100.3L352.82 95.0L353.02 83.8L353.44 82.1zM357.13 82.5L357.56 84.2L357.75 95.1L358.03 100.4L358.03 106.5L357.75 111.6L357.56 122.0L357.13 123.6L356.13 123.6L355.71 122.0L355.51 111.6L355.24 106.5L355.24 100.4L355.51 95.1L355.71 84.2L356.13 82.5zM359.83 83.8L360.25 85.3L360.45 95.6L360.73 100.5L360.73 106.3L360.45 111.1L360.25 120.9L359.83 122.4L358.83 122.4L358.41 120.9L358.21 111.1L357.93 106.3L357.93 100.5L358.21 95.6L358.41 85.3L358.83 83.8zM362.52 68.5L362.94 71.3L363.14 89.5L363.42 98.2L363.42 108.5L363.14 116.9L362.94 134.4L362.52 137.1L361.52 137.1L361.10 134.4L360.90 116.9L360.63 108.5L360.63 98.2L360.90 89.5L361.10 71.3L361.52 68.5zM365.22 74.7L365.64 77.0L365.84 92.0L366.12 99.2L366.12 107.7L365.84 114.6L365.64 129.0L365.22 131.2L364.22 131.2L363.80 129.0L363.60 114.6L363.32 107.7L363.32 99.2L363.60 92.0L363.80 77.0L364.22 74.7zM367.91 75.6L368.33 77.8L368.53 92.3L368.81 99.3L368.81 107.5L368.53 114.2L368.33 128.1L367.91 130.3L366.91 130.3L366.49 128.1L366.29 114.2L366.02 107.5L366.02 99.3L366.29 92.3L366.49 77.8L366.91 75.6zM370.61 75.0L371.03 77.2L371.23 92.1L371.51 99.2L371.51 107.6L371.23 114.5L371.03 128.7L370.61 130.9L369.61 130.9L369.19 128.7L368.99 114.5L368.71 107.6L368.71 99.2L368.99 92.1L369.19 77.2L369.61 75.0zM373.30 73.6L373.72 76.0L373.92 91.5L374.20 99.0L374.20 107.8L373.92 115.0L373.72 129.9L373.30 132.2L372.30 132.2L371.88 129.9L371.68 115.0L371.41 107.8L371.41 99.0L371.68 91.5L371.88 76.0L372.30 73.6zM376.00 68.5L376.42 71.3L376.62 89.5L376.90 98.2L376.90 108.5L376.62 116.9L376.42 134.4L376.00 137.1L375.00 137.1L374.58 134.4L374.38 116.9L374.10 108.5L374.10 98.2L374.38 89.5L374.58 71.3L375.00 68.5zM378.69 73.0L379.11 75.4L379.31 91.3L379.59 98.9L379.59 107.9L379.31 115.2L379.11 130.5L378.69 132.8L377.69 132.8L377.27 130.5L377.07 115.2L376.80 107.9L376.80 98.9L377.07 91.3L377.27 75.4L377.69 73.0zM381.39 75.5L381.81 77.7L382.01 92.3L382.29 99.3L382.29 107.5L382.01 114.3L381.81 128.3L381.39 130.4L380.39 130.4L379.97 128.3L379.77 114.3L379.49 107.5L379.49 99.3L379.77 92.3L379.97 77.7L380.39 75.5zM384.08 73.6L384.50 76.0L384.70 91.6L384.98 99.0L384.98 107.8L384.70 115.0L384.50 129.9L384.08 132.2L383.08 132.2L382.66 129.9L382.46 115.0L382.19 107.8L382.19 99.0L382.46 91.6L382.66 76.0L383.08 73.6zM386.78 75.2L387.20 77.5L387.40 92.2L387.68 99.3L387.68 107.6L387.40 114.4L387.20 128.5L386.78 130.7L385.78 130.7L385.36 128.5L385.16 114.4L384.88 107.6L384.88 99.3L385.16 92.2L385.36 77.5L385.78 75.2zM389.47 54.5L389.89 58.4L390.09 83.9L390.37 96.2L390.37 110.6L390.09 122.3L389.89 146.8L389.47 150.5L388.47 150.5L388.05 146.8L387.85 122.3L387.58 110.6L387.58 96.2L387.85 83.9L388.05 58.4L388.47 54.5zM392.17 58.6L392.59 62.2L392.79 85.5L393.07 96.8L393.07 110.0L392.79 120.8L392.59 143.2L392.17 146.6L391.17 146.6L390.75 143.2L390.55 120.8L390.27 110.0L390.27 96.8L390.55 85.5L390.75 62.2L391.17 58.6zM394.86 61.4L395.28 64.7L395.48 86.6L395.76 97.2L395.76 109.6L395.48 119.7L395.28 140.7L394.86 144.0L393.86 144.0L393.44 140.7L393.24 119.7L392.97 109.6L392.97 97.2L393.24 86.6L393.44 64.7L393.86 61.4zM397.56 61.4L397.98 64.8L398.18 86.7L398.46 97.2L398.46 109.6L398.18 119.7L397.98 140.7L397.56 143.9L396.56 143.9L396.14 140.7L395.94 119.7L395.66 109.6L395.66 97.2L395.94 86.7L396.14 64.8L396.56 61.4zM400.25 65.9L400.68 68.9L400.88 88.5L401.15 97.9L401.15 108.9L400.88 117.9L400.68 136.7L400.25 139.6L399.25 139.6L398.83 136.7L398.63 117.9L398.36 108.9L398.36 97.9L398.63 88.5L398.83 68.9L399.25 65.9zM402.95 64.5L403.37 67.6L403.57 87.9L403.85 97.7L403.85 109.1L403.57 118.5L403.37 137.9L402.95 140.9L401.95 140.9L401.53 137.9L401.33 118.5L401.05 109.1L401.05 97.7L401.33 87.9L401.53 67.6L401.95 64.5zM405.64 70.0L406.06 72.7L406.26 90.1L406.54 98.5L406.54 108.3L406.26 116.4L406.06 133.1L405.64 135.7L404.64 135.7L404.22 133.1L404.02 116.4L403.75 108.3L403.75 98.5L404.02 90.1L404.22 72.7L404.64 70.0zM408.34 71.8L408.76 74.3L408.96 90.8L409.24 98.7L409.24 108.1L408.96 115.7L408.76 131.5L408.34 133.9L407.34 133.9L406.92 131.5L406.72 115.7L406.44 108.1L406.44 98.7L406.72 90.8L406.92 74.3L407.34 71.8zM411.03 69.9L411.45 72.6L411.65 90.1L411.93 98.5L411.93 108.3L411.65 116.4L411.45 133.2L411.03 135.8L410.03 135.8L409.61 133.2L409.41 116.4L409.14 108.3L409.14 98.5L409.41 90.1L409.61 72.6L410.03 69.9zM413.73 72.6L414.15 75.0L414.35 91.1L414.63 98.9L414.63 108.0L414.35 115.4L414.15 130.8L413.73 133.2L412.73 133.2L412.31 130.8L412.11 115.4L411.83 108.0L411.83 98.9L412.11 91.1L412.31 75.0L412.73 72.6zM416.42 69.5L416.84 72.2L417.04 89.9L417.32 98.4L417.32 108.4L417.04 116.6L416.84 133.5L416.42 136.1L415.42 136.1L415.00 133.5L414.80 116.6L414.53 108.4L414.53 98.4L414.80 89.9L415.00 72.2L415.42 69.5zM419.12 76.3L419.54 78.5L419.74 92.6L420.02 99.4L420.02 107.4L419.74 113.9L419.54 127.5L419.12 129.6L418.12 129.6L417.70 127.5L417.50 113.9L417.22 107.4L417.22 99.4L417.50 92.6L417.70 78.5L418.12 76.3zM421.81 77.6L422.24 79.7L422.44 93.2L422.71 99.6L422.71 107.2L422.44 113.4L422.24 126.3L421.81 128.3L420.81 128.3L420.39 126.3L420.19 113.4L419.92 107.2L419.92 99.6L420.19 93.2L420.39 79.7L420.81 77.6zM424.51 74.7L424.93 77.0L425.13 92.0L425.41 99.2L425.41 107.7L425.13 114.6L424.93 129.0L424.51 131.2L423.51 131.2L423.09 129.0L422.89 114.6L422.61 107.7L422.61 99.2L422.89 92.0L423.09 77.0L423.51 74.7zM427.20 76.8L427.62 79.0L427.82 92.8L428.10 99.5L428.10 107.3L427.82 113.7L427.62 127.1L427.20 129.1L426.20 129.1L425.78 127.1L425.58 113.7L425.31 107.3L425.31 99.5L425.58 92.8L425.78 79.0L426.20 76.8zM429.90 67.5L430.32 70.4L430.52 89.1L430.80 98.1L430.80 108.7L430.52 117.3L430.32 135.3L429.90 138.1L428.90 138.1L428.48 135.3L428.28 117.3L428.00 108.7L428.00 98.1L428.28 89.1L428.48 70.4L428.90 67.5zM432.59 74.4L433.01 76.7L433.21 91.9L433.49 99.1L433.49 107.7L433.21 114.7L433.01 129.2L432.59 131.4L431.59 131.4L431.17 129.2L430.97 114.7L430.70 107.7L430.70 99.1L430.97 91.9L431.17 76.7L431.59 74.4zM435.29 75.3L435.71 77.6L435.91 92.2L436.19 99.3L436.19 107.6L435.91 114.3L435.71 128.4L435.29 130.5L434.29 130.5L433.87 128.4L433.67 114.3L433.39 107.6L433.39 99.3L433.67 92.2L433.87 77.6L434.29 75.3zM437.98 74.3L438.40 76.7L438.60 91.8L438.88 99.1L438.88 107.7L438.60 114.7L438.40 129.3L437.98 131.5L436.98 131.5L436.56 129.3L436.36 114.7L436.09 107.7L436.09 99.1L436.36 91.8L436.56 76.7L436.98 74.3zM440.68 74.5L441.10 76.8L441.30 91.9L441.58 99.2L441.58 107.7L441.30 114.6L441.10 129.1L440.68 131.3L439.68 131.3L439.26 129.1L439.06 114.6L438.78 107.7L438.78 99.2L439.06 91.9L439.26 76.8L439.68 74.5zM443.37 69.5L443.79 72.2L443.99 89.9L444.27 98.4L444.27 108.4L443.99 116.6L443.79 133.5L443.37 136.1L442.37 136.1L441.95 133.5L441.75 116.6L441.48 108.4L441.48 98.4L441.75 89.9L441.95 72.2L442.37 69.5zM446.07 75.2L446.49 77.5L446.69 92.2L446.97 99.3L446.97 107.6L446.69 114.4L446.49 128.5L446.07 130.6L445.07 130.6L444.65 128.5L444.45 114.4L444.17 107.6L444.17 99.3L444.45 92.2L444.65 77.5L445.07 75.2zM448.76 77.1L449.19 79.2L449.38 92.9L449.66 99.5L449.66 107.3L449.38 113.6L449.19 126.8L448.76 128.9L447.76 128.9L447.34 126.8L447.14 113.6L446.87 107.3L446.87 99.5L447.14 92.9L447.34 79.2L447.76 77.1zM451.46 77.3L451.88 79.4L452.08 93.0L452.36 99.6L452.36 107.3L452.08 113.6L451.88 126.7L451.46 128.7L450.46 128.7L450.04 126.7L449.84 113.6L449.56 107.3L449.56 99.6L449.84 93.0L450.04 79.4L450.46 77.3zM454.15 77.2L454.57 79.3L454.77 93.0L455.05 99.6L455.05 107.3L454.77 113.6L454.57 126.7L454.15 128.8L453.15 128.8L452.73 126.7L452.53 113.6L452.26 107.3L452.26 99.6L452.53 93.0L452.73 79.3L453.15 77.2zM456.85 63.5L457.27 66.7L457.47 87.5L457.75 97.5L457.75 109.3L457.47 118.9L457.27 138.8L456.85 141.9L455.85 141.9L455.43 138.8L455.23 118.9L454.95 109.3L454.95 97.5L455.23 87.5L455.43 66.7L455.85 63.5zM459.54 67.5L459.96 70.3L460.16 89.1L460.44 98.1L460.44 108.7L460.16 117.3L459.96 135.3L459.54 138.1L458.54 138.1L458.12 135.3L457.92 117.3L457.65 108.7L457.65 98.1L457.92 89.1L458.12 70.3L458.54 67.5zM462.24 69.9L462.66 72.6L462.86 90.1L463.14 98.5L463.14 108.3L462.86 116.4L462.66 133.2L462.24 135.8L461.24 135.8L460.82 133.2L460.62 116.4L460.34 108.3L460.34 98.5L460.62 90.1L460.82 72.6L461.24 69.9zM464.93 67.6L465.35 70.4L465.55 89.1L465.83 98.1L465.83 108.7L465.55 117.3L465.35 135.2L464.93 138.0L463.93 138.0L463.51 135.2L463.31 117.3L463.04 108.7L463.04 98.1L463.31 89.1L463.51 70.4L463.93 67.6zM467.63 68.7L468.05 71.5L468.25 89.6L468.53 98.3L468.53 108.5L468.25 116.8L468.05 134.2L467.63 136.9L466.63 136.9L466.21 134.2L466.01 116.8L465.73 108.5L465.73 98.3L466.01 89.6L466.21 71.5L466.63 68.7zM470.32 63.5L470.75 66.7L470.94 87.5L471.22 97.5L471.22 109.3L470.94 118.9L470.75 138.8L470.32 141.9L469.32 141.9L468.90 138.8L468.70 118.9L468.43 109.3L468.43 97.5L468.70 87.5L468.90 66.7L469.32 63.5zM473.02 70.9L473.44 73.5L473.64 90.5L473.92 98.6L473.92 108.2L473.64 116.0L473.44 132.3L473.02 134.8L472.02 134.8L471.60 132.3L471.40 116.0L471.12 108.2L471.12 98.6L471.40 90.5L471.60 73.5L472.02 70.9zM475.71 69.2L476.13 72.0L476.33 89.8L476.61 98.4L476.61 108.4L476.33 116.7L476.13 133.8L475.71 136.4L474.71 136.4L474.29 133.8L474.09 116.7L473.82 108.4L473.82 98.4L474.09 89.8L474.29 72.0L474.71 69.2zM478.41 68.6L478.83 71.4L479.03 89.5L479.31 98.3L479.31 108.5L479.03 116.9L478.83 134.4L478.41 137.0L477.41 137.0L476.99 134.4L476.79 116.9L476.51 108.5L476.51 98.3L476.79 89.5L476.99 71.4L477.41 68.6zM481.10 69.9L481.52 72.6L481.72 90.0L482.00 98.5L482.00 108.3L481.72 116.4L481.52 133.2L481.10 135.8L480.10 135.8L479.68 133.2L479.48 116.4L479.21 108.3L479.21 98.5L479.48 90.0L479.68 72.6L480.10 69.9zM483.80 53.5L484.22 57.5L484.42 83.5L484.70 96.0L484.70 110.7L484.42 122.7L484.22 147.7L483.80 151.5L482.80 151.5L482.38 147.7L482.18 122.7L481.90 110.7L481.90 96.0L482.18 83.5L482.38 57.5L482.80 53.5zM486.49 60.4L486.91 63.9L487.11 86.3L487.39 97.0L487.39 109.7L487.11 120.0L486.91 141.5L486.49 144.8L485.49 144.8L485.07 141.5L484.87 120.0L484.60 109.7L484.60 97.0L484.87 86.3L485.07 63.9L485.49 60.4zM489.19 59.6L489.61 63.1L489.81 85.9L490.09 96.9L490.09 109.8L489.81 120.4L489.61 142.3L489.19 145.7L488.19 145.7L487.77 142.3L487.57 120.4L487.29 109.8L487.29 96.9L487.57 85.9L487.77 63.1L488.19 59.6zM491.88 61.1L492.31 64.5L492.50 86.6L492.78 97.1L492.78 109.6L492.50 119.8L492.31 140.9L491.88 144.2L490.88 144.2L490.46 140.9L490.26 119.8L489.99 109.6L489.99 97.1L490.26 86.6L490.46 64.5L490.88 61.1zM494.58 60.0L495.00 63.5L495.20 86.1L495.48 97.0L495.48 109.8L495.20 120.2L495.00 141.9L494.58 145.3L493.58 145.3L493.16 141.9L492.96 120.2L492.68 109.8L492.68 97.0L492.96 86.1L493.16 63.5L493.58 60.0zM497.27 54.5L497.69 58.4L497.89 83.9L498.17 96.2L498.17 110.6L497.89 122.3L497.69 146.8L497.27 150.5L496.27 150.5L495.85 146.8L495.65 122.3L495.38 110.6L495.38 96.2L495.65 83.9L495.85 58.4L496.27 54.5zM499.97 60.6L500.39 64.0L500.59 86.3L500.87 97.1L500.87 109.7L500.59 120.0L500.39 141.4L499.97 144.7L498.97 144.7L498.55 141.4L498.35 120.0L498.07 109.7L498.07 97.1L498.35 86.3L498.55 64.0L498.97 60.6zM502.66 59.2L503.08 62.7L503.28 85.8L503.56 96.9L503.56 109.9L503.28 120.5L503.08 142.6L502.66 146.0L501.66 146.0L501.24 142.6L501.04 120.5L500.77 109.9L500.77 96.9L501.04 85.8L501.24 62.7L501.66 59.2zM505.36 58.7L505.78 62.3L505.98 85.6L506.26 96.8L506.26 109.9L505.98 120.7L505.78 143.0L505.36 146.5L504.36 146.5L503.94 143.0L503.74 120.7L503.46 109.9L503.46 96.8L503.74 85.6L503.94 62.3L504.36 58.7zM508.05 61.4L508.47 64.7L508.67 86.6L508.95 97.2L508.95 109.6L508.67 119.7L508.47 140.7L508.05 144.0L507.05 144.0L506.63 140.7L506.43 119.7L506.16 109.6L506.16 97.2L506.43 86.6L506.63 64.7L507.05 61.4zM510.75 55.5L511.17 59.3L511.37 84.3L511.65 96.3L511.65 110.4L511.37 121.9L511.17 145.9L510.75 149.6L509.75 149.6L509.33 145.9L509.13 121.9L508.85 110.4L508.85 96.3L509.13 84.3L509.33 59.3L509.75 55.5zM513.44 61.4L513.86 64.7L514.06 86.6L514.34 97.2L514.34 109.6L514.06 119.7L513.86 140.7L513.44 144.0L512.44 144.0L512.02 140.7L511.82 119.7L511.55 109.6L511.55 97.2L511.82 86.6L512.02 64.7L512.44 61.4zM516.14 63.5L516.56 66.7L516.76 87.5L517.04 97.5L517.04 109.3L516.76 118.8L516.56 138.8L516.14 141.9L515.14 141.9L514.72 138.8L514.52 118.8L514.24 109.3L514.24 97.5L514.52 87.5L514.72 66.7L515.14 63.5zM518.84 59.6L519.25 63.1L519.46 85.9L519.73 96.9L519.73 109.8L519.46 120.4L519.25 142.3L518.84 145.7L517.84 145.7L517.42 142.3L517.22 120.4L516.94 109.8L516.94 96.9L517.22 85.9L517.42 63.1L517.84 59.6zM521.53 62.0L521.95 65.4L522.15 86.9L522.43 97.3L522.43 109.5L522.15 119.4L521.95 140.1L521.53 143.3L520.53 143.3L520.11 140.1L519.91 119.4L519.63 109.5L519.63 97.3L519.91 86.9L520.11 65.4L520.53 62.0zM524.22 58.5L524.64 62.1L524.84 85.5L525.12 96.8L525.12 110.0L524.84 120.8L524.64 143.2L524.22 146.7L523.22 146.7L522.80 143.2L522.60 120.8L522.33 110.0L522.33 96.8L522.60 85.5L522.80 62.1L523.22 58.5zM526.92 65.1L527.34 68.2L527.54 88.1L527.82 97.7L527.82 109.0L527.54 118.2L527.34 137.4L526.92 140.4L525.92 140.4L525.50 137.4L525.30 118.2L525.02 109.0L525.02 97.7L525.30 88.1L525.50 68.2L525.92 65.1zM529.62 64.5L530.03 67.7L530.24 87.9L530.51 97.7L530.51 109.1L530.24 118.5L530.03 137.9L529.62 140.9L528.62 140.9L528.20 137.9L528.00 118.5L527.72 109.1L527.72 97.7L528.00 87.9L528.20 67.7L528.62 64.5zM532.31 63.9L532.73 67.0L532.93 87.6L533.21 97.6L533.21 109.2L532.93 118.7L532.73 138.5L532.31 141.6L531.31 141.6L530.89 138.5L530.69 118.7L530.41 109.2L530.41 97.6L530.69 87.6L530.89 67.0L531.31 63.9zM535.00 68.5L535.42 71.3L535.62 89.5L535.90 98.2L535.90 108.5L535.62 116.9L535.42 134.4L535.00 137.1L534.00 137.1L533.58 134.4L533.38 116.9L533.11 108.5L533.11 98.2L533.38 89.5L533.58 71.3L534.00 68.5zM537.70 65.5L538.12 68.5L538.32 88.3L538.60 97.8L538.60 109.0L538.32 118.1L538.12 137.1L537.70 140.0L536.70 140.0L536.28 137.1L536.08 118.1L535.80 109.0L535.80 97.8L536.08 88.3L536.28 68.5L536.70 65.5zM540.39 70.3L540.81 73.0L541.01 90.2L541.29 98.5L541.29 108.3L541.01 116.3L540.81 132.8L540.39 135.4L539.39 135.4L538.98 132.8L538.77 116.3L538.50 108.3L538.50 98.5L538.77 90.2L538.98 73.0L539.39 70.3zM543.09 71.8L543.51 74.4L543.71 90.8L543.99 98.7L543.99 108.1L543.71 115.7L543.51 131.5L543.09 133.9L542.09 133.9L541.67 131.5L541.47 115.7L541.19 108.1L541.19 98.7L541.47 90.8L541.67 74.4L542.09 71.8zM545.78 70.2L546.20 72.9L546.40 90.2L546.68 98.5L546.68 108.3L546.40 116.3L546.20 132.9L545.78 135.4L544.78 135.4L544.37 132.9L544.16 116.3L543.89 108.3L543.89 98.5L544.16 90.2L544.37 72.9L544.78 70.2zM548.48 74.2L548.90 76.5L549.10 91.8L549.38 99.1L549.38 107.7L549.10 114.8L548.90 129.4L548.48 131.6L547.48 131.6L547.06 129.4L546.86 114.8L546.58 107.7L546.58 99.1L546.86 91.8L547.06 76.5L547.48 74.2zM551.17 70.5L551.59 73.1L551.79 90.3L552.07 98.5L552.07 108.3L551.79 116.2L551.59 132.6L551.17 135.2L550.17 135.2L549.75 132.6L549.55 116.2L549.28 108.3L549.28 98.5L549.55 90.3L549.75 73.1L550.17 70.5zM553.87 78.4L554.29 80.4L554.49 93.5L554.77 99.7L554.77 107.1L554.49 113.1L554.29 125.7L553.87 127.6L552.87 127.6L552.45 125.7L552.25 113.1L551.97 107.1L551.97 99.7L552.25 93.5L552.45 80.4L552.87 78.4zM556.56 78.3L556.98 80.3L557.18 93.4L557.46 99.7L557.46 107.1L557.18 113.2L556.98 125.7L556.56 127.7L555.56 127.7L555.14 125.7L554.94 113.2L554.67 107.1L554.67 99.7L554.94 93.4L555.14 80.3L555.56 78.3zM559.26 78.3L559.68 80.4L559.88 93.4L560.16 99.7L560.16 107.1L559.88 113.2L559.68 125.7L559.26 127.7L558.26 127.7L557.84 125.7L557.64 113.2L557.36 107.1L557.36 99.7L557.64 93.4L557.84 80.4L558.26 78.3zM561.95 76.7L562.37 78.8L562.57 92.8L562.85 99.5L562.85 107.4L562.57 113.8L562.37 127.2L561.95 129.2L560.95 129.2L560.53 127.2L560.33 113.8L560.06 107.4L560.06 99.5L560.33 92.8L560.53 78.8L560.95 76.7zM564.65 80.5L565.07 82.3L565.27 94.3L565.55 100.0L565.55 106.8L565.27 112.3L565.07 123.8L564.65 125.6L563.65 125.6L563.23 123.8L563.03 112.3L562.75 106.8L562.75 100.0L563.03 94.3L563.23 82.3L563.65 80.5zM567.35 86.2L567.76 87.6L567.97 96.6L568.24 100.9L568.24 106.0L567.97 110.1L567.76 118.8L567.35 120.1L566.35 120.1L565.93 118.8L565.73 110.1L565.45 106.0L565.45 100.9L565.73 96.6L565.93 87.6L566.35 86.2zM570.04 87.1L570.46 88.4L570.66 96.9L570.94 101.0L570.94 105.9L570.66 109.8L570.46 118.0L570.04 119.3L569.04 119.3L568.62 118.0L568.42 109.8L568.14 105.9L568.14 101.0L568.42 96.9L568.62 88.4L569.04 87.1zM572.73 87.2L573.15 88.5L573.35 97.0L573.63 101.1L573.63 105.9L573.35 109.8L573.15 117.9L572.73 119.2L571.73 119.2L571.31 117.9L571.11 109.8L570.84 105.9L570.84 101.1L571.11 97.0L571.31 88.5L571.73 87.2zM575.43 88.4L575.85 89.6L576.05 97.5L576.33 101.2L576.33 105.7L576.05 109.3L575.85 116.8L575.43 118.0L574.43 118.0L574.01 116.8L573.81 109.3L573.53 105.7L573.53 101.2L573.81 97.5L574.01 89.6L574.43 88.4zM578.12 75.5L578.54 77.7L578.75 92.3L579.02 99.3L579.02 107.5L578.75 114.3L578.54 128.2L578.12 130.4L577.12 130.4L576.71 128.2L576.50 114.3L576.23 107.5L576.23 99.3L576.50 92.3L576.71 77.7L577.12 75.5zM580.82 81.1L581.24 82.9L581.44 94.5L581.72 100.1L581.72 106.7L581.44 112.1L581.24 123.3L580.82 125.0L579.82 125.0L579.40 123.3L579.20 112.1L578.92 106.7L578.92 100.1L579.20 94.5L579.40 82.9L579.82 81.1zM583.51 81.8L583.93 83.5L584.13 94.8L584.41 100.2L584.41 106.6L584.13 111.8L583.93 122.7L583.51 124.4L582.51 124.4L582.10 122.7L581.89 111.8L581.62 106.6L581.62 100.2L581.89 94.8L582.10 83.5L582.51 81.8zM586.21 82.9L586.63 84.5L586.83 95.2L587.11 100.4L587.11 106.5L586.83 111.4L586.63 121.7L586.21 123.3L585.21 123.3L584.79 121.7L584.59 111.4L584.31 106.5L584.31 100.4L584.59 95.2L584.79 84.5L585.21 82.9zM588.90 83.1L589.32 84.8L589.52 95.4L589.80 100.4L589.80 106.4L589.52 111.3L589.32 121.5L588.90 123.1L587.90 123.1L587.49 121.5L587.28 111.3L587.01 106.4L587.01 100.4L587.28 95.4L587.49 84.8L587.90 83.1zM591.60 77.5L592.02 79.6L592.22 93.1L592.50 99.6L592.50 107.2L592.22 113.5L592.02 126.5L591.60 128.5L590.60 128.5L590.18 126.5L589.98 113.5L589.70 107.2L589.70 99.6L589.98 93.1L590.18 79.6L590.60 77.5zM594.29 84.8L594.71 86.3L594.91 96.0L595.19 100.7L595.19 106.2L594.91 110.7L594.71 120.0L594.29 121.5L593.29 121.5L592.88 120.0L592.67 110.7L592.40 106.2L592.40 100.7L592.67 96.0L592.88 86.3L593.29 84.8zM596.99 84.2L597.41 85.7L597.61 95.8L597.89 100.6L597.89 106.3L597.61 110.9L597.41 120.6L596.99 122.0L595.99 122.0L595.57 120.6L595.37 110.9L595.09 106.3L595.09 100.6L595.37 95.8L595.57 85.7L595.99 84.2zM599.68 83.4L600.10 85.0L600.30 95.4L600.58 100.5L600.58 106.4L600.30 111.2L600.10 121.3L599.68 122.8L598.68 122.8L598.26 121.3L598.06 111.2L597.79 106.4L597.79 100.5L598.06 95.4L598.26 85.0L598.68 83.4zM602.38 86.0L602.80 87.4L603.00 96.5L603.28 100.9L603.28 106.0L603.00 110.2L602.80 119.0L602.38 120.3L601.38 120.3L600.96 119.0L600.76 110.2L600.48 106.0L600.48 100.9L600.76 96.5L600.96 87.4L601.38 86.0zM605.08 80.5L605.50 82.3L605.70 94.3L605.97 100.0L605.97 106.8L605.70 112.3L605.50 123.8L605.08 125.6L604.08 125.6L603.66 123.8L603.46 112.3L603.18 106.8L603.18 100.0L603.46 94.3L603.66 82.3L604.08 80.5zM607.77 86.9L608.19 88.2L608.39 96.9L608.67 101.0L608.67 105.9L608.39 109.9L608.19 118.2L607.77 119.5L606.77 119.5L606.35 118.2L606.15 109.9L605.87 105.9L605.87 101.0L606.15 96.9L606.35 88.2L606.77 86.9zM610.46 87.6L610.88 88.8L611.08 97.1L611.36 101.1L611.36 105.8L611.08 109.6L610.88 117.6L610.46 118.8L609.46 118.8L609.04 117.6L608.84 109.6L608.57 105.8L608.57 101.1L608.84 97.1L609.04 88.8L609.46 87.6zM613.16 87.2L613.58 88.5L613.78 97.0L614.06 101.1L614.06 105.8L613.78 109.7L613.58 117.9L613.16 119.1L612.16 119.1L611.74 117.9L611.54 109.7L611.26 105.8L611.26 101.1L611.54 97.0L611.74 88.5L612.16 87.2zM615.86 87.0L616.27 88.3L616.48 96.9L616.75 101.0L616.75 105.9L616.48 109.8L616.27 118.1L615.86 119.3L614.86 119.3L614.44 118.1L614.24 109.8L613.96 105.9L613.96 101.0L614.24 96.9L614.44 88.3L614.86 87.0zM618.55 77.5L618.97 79.6L619.17 93.1L619.45 99.6L619.45 107.2L619.17 113.5L618.97 126.5L618.55 128.5L617.55 128.5L617.13 126.5L616.93 113.5L616.65 107.2L616.65 99.6L616.93 93.1L617.13 79.6L617.55 77.5zM621.24 84.1L621.66 85.6L621.86 95.7L622.14 100.6L622.14 106.3L621.86 111.0L621.66 120.7L621.24 122.2L620.24 122.2L619.82 120.7L619.62 111.0L619.35 106.3L619.35 100.6L619.62 95.7L619.82 85.6L620.24 84.1zM623.94 85.3L624.36 86.7L624.56 96.2L624.84 100.8L624.84 106.1L624.56 110.5L624.36 119.6L623.94 121.0L622.94 121.0L622.52 119.6L622.32 110.5L622.04 106.1L622.04 100.8L622.32 96.2L622.52 86.7L622.94 85.3zM626.63 83.8L627.05 85.4L627.25 95.6L627.53 100.5L627.53 106.3L627.25 111.1L627.05 120.9L626.63 122.4L625.63 122.4L625.22 120.9L625.01 111.1L624.74 106.3L624.74 100.5L625.01 95.6L625.22 85.4L625.63 83.8zM629.33 84.2L629.75 85.8L629.95 95.8L630.23 100.6L630.23 106.3L629.95 110.9L629.75 120.5L629.33 122.0L628.33 122.0L627.91 120.5L627.71 110.9L627.43 106.3L627.43 100.6L627.71 95.8L627.91 85.8L628.33 84.2zM632.02 75.5L632.44 77.7L632.64 92.3L632.92 99.3L632.92 107.5L632.64 114.3L632.44 128.2L632.02 130.4L631.02 130.4L630.61 128.2L630.40 114.3L630.13 107.5L630.13 99.3L630.40 92.3L630.61 77.7L631.02 75.5zM634.72 82.6L635.14 84.3L635.34 95.1L635.62 100.4L635.62 106.5L635.34 111.5L635.14 122.0L634.72 123.6L633.72 123.6L633.30 122.0L633.10 111.5L632.82 106.5L632.82 100.4L633.10 95.1L633.30 84.3L633.72 82.6zM637.41 83.2L637.83 84.8L638.03 95.4L638.31 100.4L638.31 106.4L638.03 111.3L637.83 121.5L637.41 123.0L636.41 123.0L636.00 121.5L635.79 111.3L635.52 106.4L635.52 100.4L635.79 95.4L636.00 84.8L636.41 83.2zM640.11 80.9L640.53 82.7L640.73 94.4L641.01 100.1L641.01 106.8L640.73 112.2L640.53 123.5L640.11 125.2L639.11 125.2L638.69 123.5L638.49 112.2L638.21 106.8L638.21 100.1L638.49 94.4L638.69 82.7L639.11 80.9zM642.80 83.5L643.22 85.1L643.42 95.5L643.70 100.5L643.70 106.4L643.42 111.2L643.22 121.2L642.80 122.7L641.80 122.7L641.38 121.2L641.18 111.2L640.91 106.4L640.91 100.5L641.18 95.5L641.38 85.1L641.80 83.5zM645.50 78.5L645.92 80.5L646.12 93.5L646.40 99.8L646.40 107.1L646.12 113.1L645.92 125.6L645.50 127.5L644.50 127.5L644.08 125.6L643.88 113.1L643.60 107.1L643.60 99.8L643.88 93.5L644.08 80.5L644.50 78.5zM648.19 85.0L648.61 86.5L648.81 96.1L649.09 100.7L649.09 106.2L648.81 110.6L648.61 119.8L648.19 121.3L647.19 121.3L646.77 119.8L646.57 110.6L646.30 106.2L646.30 100.7L646.57 96.1L646.77 86.5L647.19 85.0zM650.89 85.6L651.31 87.1L651.51 96.4L651.79 100.8L651.79 106.1L651.51 110.4L651.31 119.3L650.89 120.6L649.89 120.6L649.47 119.3L649.27 110.4L648.99 106.1L648.99 100.8L649.27 96.4L649.47 87.1L649.89 85.6zM653.59 85.6L654.00 87.0L654.21 96.3L654.48 100.8L654.48 106.1L654.21 110.4L654.00 119.3L653.59 120.7L652.59 120.7L652.17 119.3L651.97 110.4L651.69 106.1L651.69 100.8L651.97 96.3L652.17 87.0L652.59 85.6zM656.28 86.2L656.70 87.6L656.90 96.6L657.18 100.9L657.18 106.0L656.90 110.1L656.70 118.8L656.28 120.1L655.28 120.1L654.86 118.8L654.66 110.1L654.38 106.0L654.38 100.9L654.66 96.6L654.86 87.6L655.28 86.2zM658.97 77.5L659.39 79.6L659.59 93.1L659.87 99.6L659.87 107.2L659.59 113.5L659.39 126.5L658.97 128.5L657.97 128.5L657.55 126.5L657.35 113.5L657.08 107.2L657.08 99.6L657.35 93.1L657.55 79.6L657.97 77.5zM661.67 84.2L662.09 85.8L662.29 95.8L662.57 100.6L662.57 106.3L662.29 110.9L662.09 120.5L661.67 122.0L660.67 122.0L660.25 120.5L660.05 110.9L659.77 106.3L659.77 100.6L660.05 95.8L660.25 85.8L660.67 84.2zM664.37 84.5L664.78 86.0L664.99 95.9L665.26 100.7L665.26 106.2L664.99 110.8L664.78 120.3L664.37 121.7L663.37 121.7L662.95 120.3L662.75 110.8L662.47 106.2L662.47 100.7L662.75 95.9L662.95 86.0L663.37 84.5zM667.06 84.4L667.48 86.0L667.68 95.9L667.96 100.6L667.96 106.2L667.68 110.8L667.48 120.3L667.06 121.8L666.06 121.8L665.64 120.3L665.44 110.8L665.16 106.2L665.16 100.6L665.44 95.9L665.64 86.0L666.06 84.4zM669.75 85.3L670.17 86.7L670.37 96.2L670.65 100.8L670.65 106.1L670.37 110.5L670.17 119.6L669.75 121.0L668.75 121.0L668.33 119.6L668.13 110.5L667.86 106.1L667.86 100.8L668.13 96.2L668.33 86.7L668.75 85.3zM672.45 95.5L672.87 96.1L673.07 100.3L673.35 101.3L673.35 105.7L673.07 106.6L672.87 110.6L672.45 111.2L671.45 111.2L671.03 110.6L670.83 106.6L670.55 105.7L670.55 101.3L670.83 100.3L671.03 96.1L671.45 95.5zM675.14 100.7L675.56 100.9L675.76 102.4L676.04 101.3L676.04 105.7L675.76 104.6L675.56 106.0L675.14 106.2L674.14 106.2L673.73 106.0L673.52 104.6L673.25 105.7L673.25 101.3L673.52 102.4L673.73 100.9L674.14 100.7zM677.84 101.3L678.26 101.5L678.46 102.6L678.74 101.3L678.74 105.7L678.46 104.3L678.26 105.4L677.84 105.6L676.84 105.6L676.42 105.4L676.22 104.3L675.94 105.7L675.94 101.3L676.22 102.6L676.42 101.5L676.84 101.3zM680.53 100.6L680.95 100.9L681.15 102.4L681.43 101.3L681.43 105.7L681.15 104.6L680.95 106.0L680.53 106.2L679.53 106.2L679.11 106.0L678.91 104.6L678.64 105.7L678.64 101.3L678.91 102.4L679.11 100.9L679.53 100.6zM683.23 101.2L683.65 101.4L683.85 102.6L684.13 101.3L684.13 105.7L683.85 104.4L683.65 105.5L683.23 105.7L682.23 105.7L681.81 105.5L681.61 104.4L681.33 105.7L681.33 101.3L681.61 102.6L681.81 101.4L682.23 101.2zM685.92 89.5L686.34 90.6L686.54 97.9L686.82 101.3L686.82 105.7L686.54 108.9L686.34 115.9L685.92 116.9L684.92 116.9L684.50 115.9L684.30 108.9L684.03 105.7L684.03 101.3L684.30 97.9L684.50 90.6L684.92 89.5zM688.62 95.4L689.04 96.0L689.24 100.2L689.52 101.3L689.52 105.7L689.24 106.6L689.04 110.7L688.62 111.3L687.62 111.3L687.20 110.7L687.00 106.6L686.72 105.7L686.72 101.3L687.00 100.2L687.20 96.0L687.62 95.4zM691.32 96.8L691.74 97.3L691.94 100.8L692.21 101.3L692.21 105.7L691.94 106.1L691.74 109.4L691.32 109.9L690.32 109.9L689.90 109.4L689.70 106.1L689.42 105.7L689.42 101.3L689.70 100.8L689.90 97.3L690.32 96.8zM694.01 95.9L694.43 96.5L694.63 100.4L694.91 101.3L694.91 105.7L694.63 106.4L694.43 110.2L694.01 110.8L693.01 110.8L692.59 110.2L692.39 106.4L692.11 105.7L692.11 101.3L692.39 100.4L692.59 96.5L693.01 95.9zM696.70 97.9L697.12 98.4L697.32 101.3L697.60 101.3L697.60 105.7L697.32 105.6L697.12 108.4L696.70 108.9L695.70 108.9L695.28 108.4L695.08 105.6L694.81 105.7L694.81 101.3L695.08 101.3L695.28 98.4L695.70 97.9zM699.40 94.5L699.82 95.2L700.02 99.9L700.30 101.3L700.30 105.7L700.02 107.0L699.82 111.4L699.40 112.1L698.40 112.1L697.98 111.4L697.78 107.0L697.50 105.7L697.50 101.3L697.78 99.9L697.98 95.2L698.40 94.5zM702.10 99.7L702.51 100.0L702.72 102.0L702.99 101.3L702.99 105.7L702.72 105.0L702.51 106.9L702.10 107.2L701.10 107.2L700.68 106.9L700.48 105.0L700.20 105.7L700.20 101.3L700.48 102.0L700.68 100.0L701.10 99.7zM704.79 100.5L705.21 100.8L705.41 102.3L705.69 101.3L705.69 105.7L705.41 104.6L705.21 106.1L704.79 106.4L703.79 106.4L703.37 106.1L703.17 104.6L702.89 105.7L702.89 101.3L703.17 102.3L703.37 100.8L703.79 100.5zM707.48 99.4L707.90 99.7L708.10 101.9L708.38 101.3L708.38 105.7L708.10 105.1L707.90 107.1L707.48 107.4L706.48 107.4L706.06 107.1L705.86 105.1L705.59 105.7L705.59 101.3L705.86 101.9L706.06 99.7L706.48 99.4zM710.18 100.4L710.60 100.6L710.80 102.2L711.08 101.3L711.08 105.7L710.80 104.7L710.60 106.3L710.18 106.5L709.18 106.5L708.76 106.3L708.56 104.7L708.28 105.7L708.28 101.3L708.56 102.2L708.76 100.6L709.18 100.4zM712.88 94.5L713.29 95.2L713.50 99.9L713.77 101.3L713.77 105.7L713.50 107.0L713.29 111.4L712.88 112.1L711.88 112.1L711.46 111.4L711.25 107.0L710.98 105.7L710.98 101.3L711.25 99.9L711.46 95.2L711.88 94.5zM715.57 99.6L715.99 99.9L716.19 101.9L716.47 101.3L716.47 105.7L716.19 105.0L715.99 107.0L715.57 107.3L714.57 107.3L714.15 107.0L713.95 105.0L713.67 105.7L713.67 101.3L713.95 101.9L714.15 99.9L714.57 99.6zM718.26 100.3L718.68 100.5L718.88 102.2L719.16 101.3L719.16 105.7L718.88 104.7L718.68 106.4L718.26 106.6L717.26 106.6L716.84 106.4L716.64 104.7L716.37 105.7L716.37 101.3L716.64 102.2L716.84 100.5L717.26 100.3zM720.96 99.5L721.38 99.8L721.58 101.9L721.86 101.3L721.86 105.7L721.58 105.1L721.38 107.1L720.96 107.4L719.96 107.4L719.54 107.1L719.34 105.1L719.06 105.7L719.06 101.3L719.34 101.9L719.54 99.8L719.96 99.5zM723.65 100.5L724.07 100.7L724.27 102.3L724.55 101.3L724.55 105.7L724.27 104.7L724.07 106.1L723.65 106.4L722.65 106.4L722.24 106.1L722.03 104.7L721.76 105.7L721.76 101.3L722.03 102.3L722.24 100.7L722.65 100.5zM726.35 88.5L726.77 89.7L726.97 97.5L727.25 101.2L727.25 105.7L726.97 109.3L726.77 116.7L726.35 117.9L725.35 117.9L724.93 116.7L724.73 109.3L724.45 105.7L724.45 101.2L724.73 97.5L724.93 89.7L725.35 88.5zM729.04 95.0L729.46 95.7L729.66 100.1L729.94 101.3L729.94 105.7L729.66 106.7L729.46 111.0L729.04 111.6L728.04 111.6L727.62 111.0L727.42 106.7L727.15 105.7L727.15 101.3L727.42 100.1L727.62 95.7L728.04 95.0zM731.74 95.5L732.16 96.2L732.36 100.3L732.64 101.3L732.64 105.7L732.36 106.6L732.16 110.5L731.74 111.1L730.74 111.1L730.32 110.5L730.12 106.6L729.84 105.7L729.84 101.3L730.12 100.3L730.32 96.2L730.74 95.5zM734.43 94.7L734.85 95.4L735.05 100.0L735.33 101.3L735.33 105.7L735.05 106.9L734.85 111.2L734.43 111.9L733.43 111.9L733.01 111.2L732.81 106.9L732.54 105.7L732.54 101.3L732.81 100.0L733.01 95.4L733.43 94.7zM737.13 95.5L737.55 96.1L737.75 100.3L738.03 101.3L738.03 105.7L737.75 106.6L737.55 110.6L737.13 111.2L736.13 111.2L735.71 110.6L735.51 106.6L735.23 105.7L735.23 101.3L735.51 100.3L735.71 96.1L736.13 95.5zM739.83 84.5L740.25 86.0L740.45 95.9L740.72 100.7L740.72 106.2L740.45 110.8L740.25 120.3L739.83 121.7L738.83 121.7L738.41 120.3L738.21 110.8L737.93 106.2L737.93 100.7L738.21 95.9L738.41 86.0L738.83 84.5zM742.52 90.5L742.94 91.5L743.14 98.3L743.42 101.3L743.42 105.7L743.14 108.5L742.94 115.0L742.52 116.0L741.52 116.0L741.10 115.0L740.90 108.5L740.62 105.7L740.62 101.3L740.90 98.3L741.10 91.5L741.52 90.5zM745.21 91.3L745.63 92.3L745.83 98.6L746.11 101.3L746.11 105.7L745.83 108.2L745.63 114.2L745.21 115.2L744.21 115.2L743.79 114.2L743.59 108.2L743.32 105.7L743.32 101.3L743.59 98.6L743.79 92.3L744.21 91.3zM747.91 90.1L748.33 91.2L748.53 98.2L748.81 101.3L748.81 105.7L748.53 108.6L748.33 115.3L747.91 116.3L746.91 116.3L746.49 115.3L746.29 108.6L746.01 105.7L746.01 101.3L746.29 98.2L746.49 91.2L746.91 90.1zM750.61 91.8L751.02 92.7L751.23 98.8L751.50 101.3L751.50 105.7L751.23 108.0L751.02 113.8L750.61 114.7L749.61 114.7L749.19 113.8L748.99 108.0L748.71 105.7L748.71 101.3L748.99 98.8L749.19 92.7L749.61 91.8zM753.30 85.5L753.72 86.9L753.92 96.3L754.20 100.8L754.20 106.1L753.92 110.4L753.72 119.4L753.30 120.8L752.30 120.8L751.88 119.4L751.68 110.4L751.40 106.1L751.40 100.8L751.68 96.3L751.88 86.9L752.30 85.5zM755.99 91.9L756.41 92.8L756.61 98.8L756.89 101.3L756.89 105.7L756.61 108.0L756.41 113.8L755.99 114.7L754.99 114.7L754.57 113.8L754.37 108.0L754.10 105.7L754.10 101.3L754.37 98.8L754.57 92.8L754.99 91.9zM758.69 92.7L759.11 93.6L759.31 99.2L759.59 101.3L759.59 105.7L759.31 107.6L759.11 113.0L758.69 113.8L757.69 113.8L757.27 113.0L757.07 107.6L756.79 105.7L756.79 101.3L757.07 99.2L757.27 93.6L757.69 92.7zM761.38 91.3L761.80 92.3L762.00 98.6L762.28 101.3L762.28 105.7L762.00 108.2L761.80 114.3L761.38 115.2L760.38 115.2L759.97 114.3L759.76 108.2L759.49 105.7L759.49 101.3L759.76 98.6L759.97 92.3L760.38 91.3zM764.08 92.8L764.50 93.7L764.70 99.2L764.98 101.3L764.98 105.7L764.70 107.6L764.50 112.9L764.08 113.7L763.08 113.7L762.66 112.9L762.46 107.6L762.18 105.7L762.18 101.3L762.46 99.2L762.66 93.7L763.08 92.8zM766.77 85.5L767.19 86.9L767.39 96.3L767.67 100.8L767.67 106.1L767.39 110.4L767.19 119.4L766.77 120.8L765.77 120.8L765.35 119.4L765.15 110.4L764.88 106.1L764.88 100.8L765.15 96.3L765.35 86.9L765.77 85.5zM769.47 92.1L769.89 93.0L770.09 98.9L770.37 101.3L770.37 105.7L770.09 107.9L769.89 113.6L769.47 114.4L768.47 114.4L768.05 113.6L767.85 107.9L767.57 105.7L767.57 101.3L767.85 98.9L768.05 93.0L768.47 92.1zM772.16 92.6L772.58 93.5L772.78 99.1L773.06 101.3L773.06 105.7L772.78 107.7L772.58 113.1L772.16 114.0L771.16 114.0L770.75 113.1L770.54 107.7L770.27 105.7L770.27 101.3L770.54 99.1L770.75 93.5L771.16 92.6zM774.86 91.8L775.28 92.8L775.48 98.8L775.76 101.3L775.76 105.7L775.48 108.0L775.28 113.8L774.86 114.7L773.86 114.7L773.44 113.8L773.24 108.0L772.96 105.7L772.96 101.3L773.24 98.8L773.44 92.8L773.86 91.8zM777.56 92.8L777.98 93.7L778.18 99.2L778.45 101.3L778.45 105.7L778.18 107.6L777.98 112.9L777.56 113.8L776.56 113.8L776.14 112.9L775.94 107.6L775.66 105.7L775.66 101.3L775.94 99.2L776.14 93.7L776.56 92.8zM780.25 95.5L780.67 96.1L780.87 100.3L781.15 101.3L781.15 105.7L780.87 106.6L780.67 110.6L780.25 111.2L779.25 111.2L778.83 110.6L778.63 106.6L778.35 105.7L778.35 101.3L778.63 100.3L778.83 96.1L779.25 95.5zM782.94 100.6L783.36 100.9L783.56 102.4L783.84 101.3L783.84 105.7L783.56 104.6L783.36 106.0L782.94 106.3L781.94 106.3L781.52 106.0L781.32 104.6L781.05 105.7L781.05 101.3L781.32 102.4L781.52 100.9L781.94 100.6zM785.64 101.2L786.06 101.4L786.26 102.6L786.54 101.3L786.54 105.7L786.26 104.4L786.06 105.5L785.64 105.7L784.64 105.7L784.22 105.5L784.02 104.4L783.74 105.7L783.74 101.3L784.02 102.6L784.22 101.4L784.64 101.2zM788.34 100.6L788.75 100.8L788.96 102.3L789.23 101.3L789.23 105.7L788.96 104.6L788.75 106.1L788.34 106.3L787.34 106.3L786.92 106.1L786.72 104.6L786.44 105.7L786.44 101.3L786.72 102.3L786.92 100.8L787.34 100.6zM791.03 101.3L791.45 101.4L791.65 102.6L791.93 101.3L791.93 105.7L791.65 104.4L791.45 105.5L791.03 105.7L790.03 105.7L789.61 105.5L789.41 104.4L789.13 105.7L789.13 101.3L789.41 102.6L789.61 101.4L790.03 101.3zM793.72 89.5L794.14 90.6L794.34 97.9L794.62 101.3L794.62 105.7L794.34 108.9L794.14 115.9L793.72 116.9L792.72 116.9L792.30 115.9L792.10 108.9L791.83 105.7L791.83 101.3L792.10 97.9L792.30 90.6L792.72 89.5zM796.42 95.6L796.84 96.3L797.04 100.3L797.32 101.3L797.32 105.7L797.04 106.5L796.84 110.5L796.42 111.1L795.42 111.1L795.00 110.5L794.80 106.5L794.52 105.7L794.52 101.3L794.80 100.3L795.00 96.3L795.42 95.6zM799.12 96.8L799.53 97.4L799.74 100.8L800.01 101.3L800.01 105.7L799.74 106.1L799.53 109.4L799.12 109.9L798.12 109.9L797.70 109.4L797.50 106.1L797.22 105.7L797.22 101.3L797.50 100.8L797.70 97.4L798.12 96.8zM801.81 95.3L802.23 95.9L802.43 100.2L802.71 101.3L802.71 105.7L802.43 106.7L802.23 110.8L801.81 111.4L800.81 111.4L800.39 110.8L800.19 106.7L799.91 105.7L799.91 101.3L800.19 100.2L800.39 95.9L800.81 95.3zM804.50 97.8L804.92 98.3L805.12 101.2L805.40 101.3L805.40 105.7L805.12 105.7L804.92 108.5L804.50 108.9L803.50 108.9L803.08 108.5L802.88 105.7L802.61 105.7L802.61 101.3L802.88 101.2L803.08 98.3L803.50 97.8zM807.20 94.5L807.62 95.2L807.82 99.9L808.10 101.3L808.10 105.7L807.82 107.0L807.62 111.4L807.20 112.1L806.20 112.1L805.78 111.4L805.58 107.0L805.30 105.7L805.30 101.3L805.58 99.9L805.78 95.2L806.20 94.5zM809.89 99.4L810.31 99.7L810.51 101.9L810.79 101.3L810.79 105.7L810.51 105.1L810.31 107.1L809.89 107.4L808.89 107.4L808.48 107.1L808.27 105.1L808.00 105.7L808.00 101.3L808.27 101.9L808.48 99.7L808.89 99.4zM812.59 100.2L813.01 100.5L813.21 102.2L813.49 101.3L813.49 105.7L813.21 104.8L813.01 106.4L812.59 106.7L811.59 106.7L811.17 106.4L810.97 104.8L810.69 105.7L810.69 101.3L810.97 102.2L811.17 100.5L811.59 100.2zM815.28 99.4L815.70 99.8L815.90 101.9L816.18 101.3L816.18 105.7L815.90 105.1L815.70 107.1L815.28 107.4L814.28 107.4L813.86 107.1L813.66 105.1L813.39 105.7L813.39 101.3L813.66 101.9L813.86 99.8L814.28 99.4zM817.98 100.5L818.40 100.8L818.60 102.3L818.88 101.3L818.88 105.7L818.60 104.6L818.40 106.1L817.98 106.4L816.98 106.4L816.56 106.1L816.36 104.6L816.08 105.7L816.08 101.3L816.36 102.3L816.56 100.8L816.98 100.5zM820.67 94.5L821.09 95.2L821.29 99.9L821.57 101.3L821.57 105.7L821.29 107.0L821.09 111.4L820.67 112.1L819.67 112.1L819.25 111.4L819.05 107.0L818.78 105.7L818.78 101.3L819.05 99.9L819.25 95.2L819.67 94.5zM823.37 99.6L823.79 99.9L823.99 101.9L824.27 101.3L824.27 105.7L823.99 105.0L823.79 107.0L823.37 107.3L822.37 107.3L821.95 107.0L821.75 105.0L821.47 105.7L821.47 101.3L821.75 101.9L821.95 99.9L822.37 99.6zM826.07 100.5L826.49 100.7L826.69 102.3L826.96 101.3L826.96 105.7L826.69 104.7L826.49 106.2L826.07 106.4L825.07 106.4L824.65 106.2L824.45 104.7L824.17 105.7L824.17 101.3L824.45 102.3L824.65 100.7L825.07 100.5zM828.76 99.6L829.18 99.9L829.38 101.9L829.66 101.3L829.66 105.7L829.38 105.0L829.18 106.9L828.76 107.2L827.76 107.2L827.34 106.9L827.14 105.0L826.86 105.7L826.86 101.3L827.14 101.9L827.34 99.9L827.76 99.6zM831.45 100.6L831.87 100.8L832.07 102.3L832.35 101.3L832.35 105.7L832.07 104.6L831.87 106.1L831.45 106.3L830.45 106.3L830.03 106.1L829.83 104.6L829.56 105.7L829.56 101.3L829.83 102.3L830.03 100.8L830.45 100.6zM834.15 88.5L834.57 89.7L834.77 97.5L835.05 101.2L835.05 105.7L834.77 109.3L834.57 116.7L834.15 117.9L833.15 117.9L832.73 116.7L832.53 109.3L832.25 105.7L832.25 101.2L832.53 97.5L832.73 89.7L833.15 88.5zM836.85 94.8L837.26 95.5L837.47 100.0L837.74 101.3L837.74 105.7L837.47 106.8L837.26 111.2L836.85 111.9L835.85 111.9L835.43 111.2L835.23 106.8L834.95 105.7L834.95 101.3L835.23 100.0L835.43 95.5L835.85 94.8zM839.54 95.0L839.96 95.7L840.16 100.1L840.44 101.3L840.44 105.7L840.16 106.7L839.96 111.0L839.54 111.6L838.54 111.6L838.12 111.0L837.92 106.7L837.64 105.7L837.64 101.3L837.92 100.1L838.12 95.7L838.54 95.0zM842.23 94.9L842.65 95.6L842.85 100.1L843.13 101.3L843.13 105.7L842.85 106.8L842.65 111.1L842.23 111.8L841.23 111.8L840.81 111.1L840.61 106.8L840.34 105.7L840.34 101.3L840.61 100.1L840.81 95.6L841.23 94.9zM844.93 95.2L845.35 95.9L845.55 100.2L845.83 101.3L845.83 105.7L845.55 106.7L845.35 110.8L844.93 111.4L843.93 111.4L843.51 110.8L843.31 106.7L843.03 105.7L843.03 101.3L843.31 100.2L843.51 95.9L843.93 95.2zM847.62 84.5L848.04 86.0L848.25 95.9L848.52 100.7L848.52 106.2L848.25 110.8L848.04 120.3L847.62 121.7L846.62 121.7L846.21 120.3L846.00 110.8L845.73 106.2L845.73 100.7L846.00 95.9L846.21 86.0L846.62 84.5zM850.32 90.8L850.74 91.8L850.94 98.4L851.22 101.3L851.22 105.7L850.94 108.4L850.74 114.7L850.32 115.7L849.32 115.7L848.90 114.7L848.70 108.4L848.42 105.7L848.42 101.3L848.70 98.4L848.90 91.8L849.32 90.8zM853.01 91.7L853.43 92.6L853.63 98.8L853.91 101.3L853.91 105.7L853.63 108.0L853.43 114.0L853.01 114.9L852.01 114.9L851.59 114.0L851.39 108.0L851.12 105.7L851.12 101.3L851.39 98.8L851.59 92.6L852.01 91.7zM855.71 90.2L856.13 91.2L856.33 98.2L856.61 101.3L856.61 105.7L856.33 108.6L856.13 115.3L855.71 116.3L854.71 116.3L854.29 115.3L854.09 108.6L853.81 105.7L853.81 101.3L854.09 98.2L854.29 91.2L854.71 90.2zM858.40 91.2L858.82 92.2L859.02 98.6L859.30 101.3L859.30 105.7L859.02 108.2L858.82 114.4L858.40 115.3L857.40 115.3L856.99 114.4L856.78 108.2L856.51 105.7L856.51 101.3L856.78 98.6L856.99 92.2L857.40 91.2zM861.10 85.5L861.52 86.9L861.72 96.3L862.00 100.8L862.00 106.1L861.72 110.4L861.52 119.4L861.10 120.8L860.10 120.8L859.68 119.4L859.48 110.4L859.20 106.1L859.20 100.8L859.48 96.3L859.68 86.9L860.10 85.5zM863.79 91.7L864.21 92.6L864.41 98.8L864.69 101.3L864.69 105.7L864.41 108.0L864.21 113.9L863.79 114.9L862.79 114.9L862.37 113.9L862.17 108.0L861.90 105.7L861.90 101.3L862.17 98.8L862.37 92.6L862.79 91.7zM866.49 92.3L866.91 93.2L867.11 99.0L867.39 101.3L867.39 105.7L867.11 107.8L866.91 113.4L866.49 114.3L865.49 114.3L865.07 113.4L864.87 107.8L864.59 105.7L864.59 101.3L864.87 99.0L865.07 93.2L865.49 92.3zM869.18 92.2L869.60 93.1L869.80 99.0L870.08 101.3L870.08 105.7L869.80 107.9L869.60 113.5L869.18 114.4L868.18 114.4L867.76 113.5L867.56 107.9L867.29 105.7L867.29 101.3L867.56 99.0L867.76 93.1L868.18 92.2zM871.88 92.8L872.30 93.6L872.50 99.2L872.78 101.3L872.78 105.7L872.50 107.6L872.30 113.0L871.88 113.8L870.88 113.8L870.46 113.0L870.26 107.6L869.98 105.7L869.98 101.3L870.26 99.2L870.46 93.6L870.88 92.8zM874.58 85.5L875.00 86.9L875.20 96.3L875.47 100.8L875.47 106.1L875.20 110.4L875.00 119.4L874.58 120.8L873.58 120.8L873.16 119.4L872.96 110.4L872.68 106.1L872.68 100.8L872.96 96.3L873.16 86.9L873.58 85.5zM877.27 91.2L877.69 92.2L877.89 98.6L878.17 101.3L878.17 105.7L877.89 108.2L877.69 114.4L877.27 115.3L876.27 115.3L875.85 114.4L875.65 108.2L875.37 105.7L875.37 101.3L875.65 98.6L875.85 92.2L876.27 91.2zM879.96 92.4L880.38 93.3L880.58 99.1L880.86 101.3L880.86 105.7L880.58 107.7L880.38 113.3L879.96 114.1L878.96 114.1L878.54 113.3L878.34 107.7L878.07 105.7L878.07 101.3L878.34 99.1L878.54 93.3L878.96 92.4zM882.66 91.7L883.08 92.6L883.28 98.8L883.56 101.3L883.56 105.7L883.28 108.0L883.08 113.9L882.66 114.8L881.66 114.8L881.24 113.9L881.04 108.0L880.76 105.7L880.76 101.3L881.04 98.8L881.24 92.6L881.66 91.7zM885.36 92.2L885.77 93.1L885.98 99.0L886.25 101.3L886.25 105.7L885.98 107.8L885.77 113.4L885.36 114.3L884.36 114.3L883.94 113.4L883.74 107.8L883.46 105.7L883.46 101.3L883.74 99.0L883.94 93.1L884.36 92.2zM888.05 79.5L888.47 81.4L888.67 93.9L888.95 99.9L888.95 107.0L888.67 112.7L888.47 124.7L888.05 126.5L887.05 126.5L886.63 124.7L886.43 112.7L886.15 107.0L886.15 99.9L886.43 93.9L886.63 81.4L887.05 79.5zM890.74 86.7L891.16 88.0L891.36 96.8L891.64 101.0L891.64 105.9L891.36 110.0L891.16 118.4L890.74 119.7L889.74 119.7L889.32 118.4L889.12 110.0L888.85 105.9L888.85 101.0L889.12 96.8L889.32 88.0L889.74 86.7zM893.44 86.5L893.86 87.9L894.06 96.7L894.34 101.0L894.34 105.9L894.06 110.0L893.86 118.5L893.44 119.8L892.44 119.8L892.02 118.5L891.82 110.0L891.54 105.9L891.54 101.0L891.82 96.7L892.02 87.9L892.44 86.5zM896.13 85.9L896.55 87.3L896.75 96.4L897.03 100.9L897.03 106.0L896.75 110.3L896.55 119.1L896.13 120.4L895.13 120.4L894.72 119.1L894.51 110.3L894.24 106.0L894.24 100.9L894.51 96.4L894.72 87.3L895.13 85.9zM898.83 86.0L899.25 87.4L899.45 96.5L899.73 100.9L899.73 106.0L899.45 110.2L899.25 118.9L898.83 120.3L897.83 120.3L897.41 118.9L897.21 110.2L896.93 106.0L896.93 100.9L897.21 96.5L897.41 87.4L897.83 86.0zM901.52 75.5L901.94 77.7L902.14 92.3L902.42 99.3L902.42 107.5L902.14 114.3L901.94 128.2L901.52 130.4L900.52 130.4L900.10 128.2L899.90 114.3L899.63 107.5L899.63 99.3L899.90 92.3L900.10 77.7L900.52 75.5zM904.22 82.7L904.64 84.4L904.84 95.2L905.12 100.4L905.12 106.5L904.84 111.5L904.64 121.9L904.22 123.5L903.22 123.5L902.80 121.9L902.60 111.5L902.32 106.5L902.32 100.4L902.60 95.2L902.80 84.4L903.22 82.7zM906.91 81.7L907.33 83.5L907.53 94.8L907.81 100.2L907.81 106.6L907.53 111.9L907.33 122.7L906.91 124.4L905.91 124.4L905.50 122.7L905.29 111.9L905.02 106.6L905.02 100.2L905.29 94.8L905.50 83.5L905.91 81.7zM909.61 82.9L910.03 84.5L910.23 95.2L910.51 100.4L910.51 106.5L910.23 111.4L910.03 121.7L909.61 123.3L908.61 123.3L908.19 121.7L907.99 111.4L907.71 106.5L907.71 100.4L907.99 95.2L908.19 84.5L908.61 82.9zM912.30 83.0L912.72 84.6L912.92 95.3L913.20 100.4L913.20 106.5L912.92 111.4L912.72 121.6L912.30 123.2L911.30 123.2L910.88 121.6L910.68 111.4L910.41 106.5L910.41 100.4L910.68 95.3L910.88 84.6L911.30 83.0zM915.00 76.5L915.42 78.7L915.62 92.7L915.90 99.5L915.90 107.4L915.62 113.9L915.42 127.3L915.00 129.4L914.00 129.4L913.58 127.3L913.38 113.9L913.10 107.4L913.10 99.5L913.38 92.7L913.58 78.7L914.00 76.5zM917.69 82.7L918.11 84.4L918.31 95.2L918.59 100.4L918.59 106.5L918.31 111.5L918.11 121.9L917.69 123.4L916.69 123.4L916.27 121.9L916.07 111.5L915.80 106.5L915.80 100.4L916.07 95.2L916.27 84.4L916.69 82.7zM920.39 83.4L920.81 85.0L921.01 95.4L921.29 100.5L921.29 106.4L921.01 111.2L920.81 121.3L920.39 122.8L919.39 122.8L918.97 121.3L918.77 111.2L918.49 106.4L918.49 100.5L918.77 95.4L918.97 85.0L919.39 83.4zM923.09 83.5L923.50 85.1L923.71 95.5L923.98 100.5L923.98 106.4L923.71 111.2L923.50 121.2L923.09 122.7L922.09 122.7L921.67 121.2L921.47 111.2L921.19 106.4L921.19 100.5L921.47 95.5L921.67 85.1L922.09 83.5zM925.78 84.5L926.20 86.0L926.40 95.9L926.68 100.7L926.68 106.2L926.40 110.8L926.20 120.3L925.78 121.7L924.78 121.7L924.36 120.3L924.16 110.8L923.88 106.2L923.88 100.7L924.16 95.9L924.36 86.0L924.78 84.5zM928.47 78.5L928.89 80.5L929.09 93.5L929.37 99.8L929.37 107.1L929.09 113.1L928.89 125.6L928.47 127.5L927.47 127.5L927.05 125.6L926.85 113.1L926.58 107.1L926.58 99.8L926.85 93.5L927.05 80.5L927.47 78.5zM931.17 84.1L931.59 85.7L931.79 95.8L932.07 100.6L932.07 106.3L931.79 110.9L931.59 120.6L931.17 122.1L930.17 122.1L929.75 120.6L929.55 110.9L929.27 106.3L929.27 100.6L929.55 95.8L929.75 85.7L930.17 84.1zM933.87 86.2L934.28 87.5L934.49 96.6L934.76 100.9L934.76 106.0L934.49 110.2L934.28 118.8L933.87 120.1L932.87 120.1L932.45 118.8L932.25 110.2L931.97 106.0L931.97 100.9L932.25 96.6L932.45 87.5L932.87 86.2zM936.56 84.7L936.98 86.2L937.18 96.0L937.46 100.7L937.46 106.2L937.18 110.7L936.98 120.1L936.56 121.5L935.56 121.5L935.14 120.1L934.94 110.7L934.66 106.2L934.66 100.7L934.94 96.0L935.14 86.2L935.56 84.7zM939.25 85.5L939.67 86.9L939.87 96.3L940.15 100.8L940.15 106.1L939.87 110.4L939.67 119.4L939.25 120.8L938.25 120.8L937.83 119.4L937.63 110.4L937.36 106.1L937.36 100.8L937.63 96.3L937.83 86.9L938.25 85.5zM941.95 77.5L942.37 79.6L942.57 93.1L942.85 99.6L942.85 107.2L942.57 113.5L942.37 126.5L941.95 128.5L940.95 128.5L940.53 126.5L940.33 113.5L940.05 107.2L940.05 99.6L940.33 93.1L940.53 79.6L940.95 77.5zM944.64 84.1L945.06 85.6L945.26 95.7L945.54 100.6L945.54 106.3L945.26 111.0L945.06 120.7L944.64 122.2L943.64 122.2L943.23 120.7L943.02 111.0L942.75 106.3L942.75 100.6L943.02 95.7L943.23 85.6L943.64 84.1zM947.34 84.5L947.76 86.1L947.96 95.9L948.24 100.7L948.24 106.2L947.96 110.8L947.76 120.3L947.34 121.7L946.34 121.7L945.92 120.3L945.72 110.8L945.44 106.2L945.44 100.7L945.72 95.9L945.92 86.1L946.34 84.5zM950.03 83.9L950.45 85.4L950.65 95.6L950.93 100.6L950.93 106.3L950.65 111.0L950.45 120.9L950.03 122.4L949.03 122.4L948.61 120.9L948.41 111.0L948.14 106.3L948.14 100.6L948.41 95.6L948.61 85.4L949.03 83.9zM952.73 83.8L953.15 85.4L953.35 95.6L953.63 100.5L953.63 106.3L953.35 111.1L953.15 120.9L952.73 122.4L951.73 122.4L951.31 120.9L951.11 111.1L950.83 106.3L950.83 100.5L951.11 95.6L951.31 85.4L951.73 83.8zM955.42 75.5L955.84 77.7L956.04 92.3L956.32 99.3L956.32 107.5L956.04 114.3L955.84 128.2L955.42 130.4L954.42 130.4L954.00 128.2L953.80 114.3L953.53 107.5L953.53 99.3L953.80 92.3L954.00 77.7L954.42 75.5zM958.12 82.6L958.54 84.3L958.74 95.1L959.02 100.4L959.02 106.5L958.74 111.5L958.54 122.0L958.12 123.6L957.12 123.6L956.70 122.0L956.50 111.5L956.22 106.5L956.22 100.4L956.50 95.1L956.70 84.3L957.12 82.6zM960.81 82.3L961.23 84.0L961.43 95.0L961.71 100.3L961.71 106.6L961.43 111.7L961.23 122.3L960.81 123.9L959.81 123.9L959.39 122.3L959.19 111.7L958.92 106.6L958.92 100.3L959.19 95.0L959.39 84.0L959.81 82.3zM963.51 82.5L963.93 84.2L964.13 95.1L964.41 100.4L964.41 106.5L964.13 111.6L963.93 122.0L963.51 123.6L962.51 123.6L962.09 122.0L961.89 111.6L961.61 106.5L961.61 100.4L961.89 95.1L962.09 84.2L962.51 82.5zM966.20 85.2L966.62 86.7L966.82 96.2L967.10 100.8L967.10 106.1L966.82 110.5L966.62 119.6L966.20 121.0L965.20 121.0L964.78 119.6L964.58 110.5L964.31 106.1L964.31 100.8L964.58 96.2L964.78 86.7L965.20 85.2zM968.90 81.5L969.32 83.3L969.52 94.7L969.80 100.2L969.80 106.7L969.52 111.9L969.32 122.9L968.90 124.6L967.90 124.6L967.48 122.9L967.28 111.9L967.00 106.7L967.00 100.2L967.28 94.7L967.48 83.3L967.90 81.5zM971.60 87.5L972.01 88.8L972.22 97.1L972.49 101.1L972.49 105.8L972.22 109.6L972.01 117.6L971.60 118.8L970.60 118.8L970.18 117.6L969.98 109.6L969.70 105.8L969.70 101.1L969.98 97.1L970.18 88.8L970.60 87.5zM974.29 88.9L974.71 90.1L974.91 97.7L975.19 101.3L975.19 105.7L974.91 109.1L974.71 116.4L974.29 117.5L973.29 117.5L972.87 116.4L972.67 109.1L972.39 105.7L972.39 101.3L972.67 97.7L972.87 90.1L973.29 88.9zM976.98 88.1L977.40 89.3L977.60 97.3L977.88 101.2L977.88 105.7L977.60 109.4L977.40 117.1L976.98 118.3L975.98 118.3L975.56 117.1L975.36 109.4L975.09 105.7L975.09 101.2L975.36 97.3L975.56 89.3L975.98 88.1zM979.68 88.4L980.10 89.6L980.30 97.4L980.58 101.2L980.58 105.7L980.30 109.3L980.10 116.9L979.68 118.0L978.68 118.0L978.26 116.9L978.06 109.3L977.78 105.7L977.78 101.2L978.06 97.4L978.26 89.6L978.68 88.4zM982.38 82.5L982.79 84.2L983.00 95.1L983.27 100.3L983.27 106.5L983.00 111.6L982.79 122.0L982.38 123.7L981.38 123.7L980.96 122.0L980.75 111.6L980.48 106.5L980.48 100.3L980.75 95.1L980.96 84.2L981.38 82.5zM985.07 89.4L985.49 90.6L985.69 97.9L985.97 101.3L985.97 105.7L985.69 108.9L985.49 115.9L985.07 117.0L984.07 117.0L983.65 115.9L983.45 108.9L983.17 105.7L983.17 101.3L983.45 97.9L983.65 90.6L984.07 89.4zM987.76 89.7L988.18 90.8L988.38 98.0L988.66 101.3L988.66 105.7L988.38 108.8L988.18 115.7L987.76 116.8L986.76 116.8L986.34 115.7L986.14 108.8L985.87 105.7L985.87 101.3L986.14 98.0L986.34 90.8L986.76 89.7zM990.46 88.1L990.88 89.3L991.08 97.3L991.36 101.2L991.36 105.7L991.08 109.4L990.88 117.1L990.46 118.3L989.46 118.3L989.04 117.1L988.84 109.4L988.56 105.7L988.56 101.2L988.84 97.3L989.04 89.3L989.46 88.1zM993.15 88.9L993.57 90.0L993.77 97.6L994.05 101.3L994.05 105.7L993.77 109.1L993.57 116.4L993.15 117.6L992.15 117.6L991.74 116.4L991.53 109.1L991.26 105.7L991.26 101.3L991.53 97.6L991.74 90.0L992.15 88.9zM995.85 63.5L996.27 66.7L996.47 87.5L996.75 97.5L996.75 109.3L996.47 118.9L996.27 138.8L995.85 141.9L994.85 141.9L994.43 138.8L994.23 118.9L993.95 109.3L993.95 97.5L994.23 87.5L994.43 66.7L994.85 63.5zM998.54 70.7L998.96 73.3L999.16 90.4L999.44 98.6L999.44 108.2L999.16 116.1L998.96 132.5L998.54 135.0L997.54 135.0L997.12 132.5L996.92 116.1L996.65 108.2L996.65 98.6L996.92 90.4L997.12 73.3L997.54 70.7zM1001.24 71.0L1001.66 73.6L1001.86 90.5L1002.14 98.6L1002.14 108.2L1001.86 116.0L1001.66 132.2L1001.24 134.7L1000.24 134.7L999.82 132.2L999.62 116.0L999.34 108.2L999.34 98.6L999.62 90.5L999.82 73.6L1000.24 71.0zM1003.93 70.0L1004.35 72.7L1004.55 90.1L1004.83 98.5L1004.83 108.3L1004.55 116.4L1004.35 133.1L1003.93 135.6L1002.93 135.6L1002.51 133.1L1002.31 116.4L1002.04 108.3L1002.04 98.5L1002.31 90.1L1002.51 72.7L1002.93 70.0zM1006.63 68.5L1007.05 71.3L1007.25 89.5L1007.53 98.2L1007.53 108.5L1007.25 116.9L1007.05 134.4L1006.63 137.1L1005.63 137.1L1005.21 134.4L1005.01 116.9L1004.73 108.5L1004.73 98.2L1005.01 89.5L1005.21 71.3L1005.63 68.5zM1009.33 62.5L1009.75 65.8L1009.95 87.1L1010.22 97.3L1010.22 109.4L1009.95 119.2L1009.75 139.7L1009.33 142.9L1008.33 142.9L1007.91 139.7L1007.71 119.2L1007.43 109.4L1007.43 97.3L1007.71 87.1L1007.91 65.8L1008.33 62.5zM1012.02 66.8L1012.44 69.8L1012.64 88.8L1012.92 98.0L1012.92 108.8L1012.64 117.6L1012.44 135.9L1012.02 138.7L1011.02 138.7L1010.60 135.9L1010.40 117.6L1010.12 108.8L1010.12 98.0L1010.40 88.8L1010.60 69.8L1011.02 66.8zM1014.71 67.7L1015.13 70.5L1015.33 89.2L1015.61 98.1L1015.61 108.7L1015.33 117.3L1015.13 135.2L1014.71 137.9L1013.71 137.9L1013.29 135.2L1013.09 117.3L1012.82 108.7L1012.82 98.1L1013.09 89.2L1013.29 70.5L1013.71 67.7zM1017.41 68.7L1017.83 71.5L1018.03 89.6L1018.31 98.3L1018.31 108.5L1018.03 116.9L1017.83 134.2L1017.41 136.9L1016.41 136.9L1015.99 134.2L1015.79 116.9L1015.51 108.5L1015.51 98.3L1015.79 89.6L1015.99 71.5L1016.41 68.7zM1020.11 70.3L1020.52 72.9L1020.73 90.2L1021.00 98.5L1021.00 108.3L1020.73 116.3L1020.52 132.9L1020.11 135.4L1019.11 135.4L1018.69 132.9L1018.49 116.3L1018.21 108.3L1018.21 98.5L1018.49 90.2L1018.69 72.9L1019.11 70.3zM1022.80 53.5L1023.22 57.5L1023.42 83.5L1023.70 96.0L1023.70 110.7L1023.42 122.7L1023.22 147.7L1022.80 151.5L1021.80 151.5L1021.38 147.7L1021.18 122.7L1020.90 110.7L1020.90 96.0L1021.18 83.5L1021.38 57.5L1021.80 53.5zM1025.49 57.9L1025.91 61.5L1026.11 85.3L1026.39 96.7L1026.39 110.1L1026.11 121.0L1025.91 143.8L1025.49 147.3L1024.49 147.3L1024.07 143.8L1023.87 121.0L1023.60 110.1L1023.60 96.7L1023.87 85.3L1024.07 61.5L1024.49 57.9zM1028.19 59.3L1028.61 62.8L1028.81 85.8L1029.09 96.9L1029.09 109.9L1028.81 120.5L1028.61 142.6L1028.19 145.9L1027.19 145.9L1026.77 142.6L1026.57 120.5L1026.29 109.9L1026.29 96.9L1026.57 85.8L1026.77 62.8L1027.19 59.3zM1030.88 58.9L1031.31 62.5L1031.50 85.7L1031.78 96.8L1031.78 109.9L1031.50 120.6L1031.31 142.9L1030.88 146.3L1029.88 146.3L1029.46 142.9L1029.27 120.6L1028.99 109.9L1028.99 96.8L1029.27 85.7L1029.46 62.5L1029.88 58.9zM1033.58 58.8L1034.00 62.3L1034.20 85.6L1034.48 96.8L1034.48 109.9L1034.20 120.7L1034.00 143.0L1033.58 146.5L1032.58 146.5L1032.16 143.0L1031.96 120.7L1031.68 109.9L1031.68 96.8L1031.96 85.6L1032.16 62.3L1032.58 58.8zM1036.27 54.5L1036.69 58.4L1036.89 83.9L1037.17 96.2L1037.17 110.6L1036.89 122.3L1036.69 146.8L1036.27 150.5L1035.27 150.5L1034.85 146.8L1034.65 122.3L1034.38 110.6L1034.38 96.2L1034.65 83.9L1034.85 58.4L1035.27 54.5zM1038.97 59.7L1039.39 63.2L1039.59 86.0L1039.87 96.9L1039.87 109.8L1039.59 120.3L1039.39 142.2L1038.97 145.5L1037.97 145.5L1037.55 142.2L1037.35 120.3L1037.07 109.8L1037.07 96.9L1037.35 86.0L1037.55 63.2L1037.97 59.7zM1041.66 63.3L1042.09 66.6L1042.28 87.4L1042.56 97.5L1042.56 109.3L1042.28 118.9L1042.09 139.0L1041.66 142.0L1040.66 142.0L1040.24 139.0L1040.05 118.9L1039.77 109.3L1039.77 97.5L1040.05 87.4L1040.24 66.6L1040.66 63.3zM1044.36 59.0L1044.78 62.5L1044.98 85.7L1045.26 96.8L1045.26 109.9L1044.98 120.6L1044.78 142.8L1044.36 146.2L1043.36 146.2L1042.94 142.8L1042.74 120.6L1042.46 109.9L1042.46 96.8L1042.74 85.7L1042.94 62.5L1043.36 59.0zM1047.05 61.3L1047.47 64.7L1047.67 86.6L1047.95 97.2L1047.95 109.6L1047.67 119.7L1047.47 140.8L1047.05 144.0L1046.05 144.0L1045.63 140.8L1045.43 119.7L1045.16 109.6L1045.16 97.2L1045.43 86.6L1045.63 64.7L1046.05 61.3zM1049.75 55.5L1050.17 59.3L1050.37 84.3L1050.65 96.3L1050.65 110.4L1050.37 121.9L1050.17 145.9L1049.75 149.6L1048.75 149.6L1048.33 145.9L1048.13 121.9L1047.85 110.4L1047.85 96.3L1048.13 84.3L1048.33 59.3L1048.75 55.5zM1052.44 60.7L1052.87 64.1L1053.06 86.4L1053.34 97.1L1053.34 109.7L1053.06 120.0L1052.87 141.3L1052.44 144.6L1051.44 144.6L1051.02 141.3L1050.83 120.0L1050.55 109.7L1050.55 97.1L1050.83 86.4L1051.02 64.1L1051.44 60.7zM1055.14 60.3L1055.56 63.7L1055.76 86.2L1056.04 97.0L1056.04 109.7L1055.76 120.1L1055.56 141.7L1055.14 145.0L1054.14 145.0L1053.72 141.7L1053.52 120.1L1053.24 109.7L1053.24 97.0L1053.52 86.2L1053.72 63.7L1054.14 60.3zM1057.84 62.9L1058.26 66.2L1058.45 87.3L1058.73 97.4L1058.73 109.3L1058.45 119.1L1058.26 139.3L1057.84 142.4L1056.84 142.4L1056.41 139.3L1056.22 119.1L1055.94 109.3L1055.94 97.4L1056.22 87.3L1056.41 66.2L1056.84 62.9zM1060.53 63.7L1060.95 66.8L1061.15 87.6L1061.43 97.5L1061.43 109.2L1061.15 118.8L1060.95 138.7L1060.53 141.7L1059.53 141.7L1059.11 138.7L1058.91 118.8L1058.63 109.2L1058.63 97.5L1058.91 87.6L1059.11 66.8L1059.53 63.7zM1063.22 58.5L1063.64 62.1L1063.84 85.5L1064.12 96.8L1064.12 110.0L1063.84 120.8L1063.64 143.2L1063.22 146.7L1062.22 146.7L1061.80 143.2L1061.61 120.8L1061.33 110.0L1061.33 96.8L1061.61 85.5L1061.80 62.1L1062.22 58.5zM1065.92 65.9L1066.34 68.9L1066.54 88.4L1066.82 97.9L1066.82 108.9L1066.54 117.9L1066.34 136.7L1065.92 139.6L1064.92 139.6L1064.50 136.7L1064.30 117.9L1064.02 108.9L1064.02 97.9L1064.30 88.4L1064.50 68.9L1064.92 65.9zM1068.62 64.9L1069.04 68.0L1069.23 88.1L1069.51 97.7L1069.51 109.1L1069.23 118.3L1069.04 137.6L1068.62 140.6L1067.62 140.6L1067.19 137.6L1067.00 118.3L1066.72 109.1L1066.72 97.7L1067.00 88.1L1067.19 68.0L1067.62 64.9zM1071.31 65.2L1071.73 68.3L1071.93 88.2L1072.21 97.8L1072.21 109.0L1071.93 118.2L1071.73 137.3L1071.31 140.3L1070.31 140.3L1069.89 137.3L1069.69 118.2L1069.41 109.0L1069.41 97.8L1069.69 88.2L1069.89 68.3L1070.31 65.2zM1074.00 67.6L1074.42 70.5L1074.62 89.1L1074.90 98.1L1074.90 108.7L1074.62 117.3L1074.42 135.2L1074.00 138.0L1073.00 138.0L1072.58 135.2L1072.38 117.3L1072.11 108.7L1072.11 98.1L1072.38 89.1L1072.58 70.5L1073.00 67.6zM1076.70 65.5L1077.12 68.5L1077.32 88.3L1077.60 97.8L1077.60 109.0L1077.32 118.1L1077.12 137.1L1076.70 140.0L1075.70 140.0L1075.28 137.1L1075.08 118.1L1074.80 109.0L1074.80 97.8L1075.08 88.3L1075.28 68.5L1075.70 65.5zM1079.39 70.4L1079.82 73.1L1080.01 90.3L1080.29 98.5L1080.29 108.3L1080.01 116.2L1079.82 132.7L1079.39 135.2L1078.39 135.2L1077.97 132.7L1077.78 116.2L1077.50 108.3L1077.50 98.5L1077.78 90.3L1077.97 73.1L1078.39 70.4zM1082.09 72.9L1082.51 75.4L1082.71 91.3L1082.99 98.9L1082.99 107.9L1082.71 115.2L1082.51 130.5L1082.09 132.8L1081.09 132.8L1080.67 130.5L1080.47 115.2L1080.19 107.9L1080.19 98.9L1080.47 91.3L1080.67 75.4L1081.09 72.9zM1084.78 70.7L1085.20 73.3L1085.40 90.4L1085.68 98.6L1085.68 108.2L1085.40 116.1L1085.20 132.5L1084.78 135.0L1083.78 135.0L1083.36 132.5L1083.16 116.1L1082.89 108.2L1082.89 98.6L1083.16 90.4L1083.36 73.3L1083.78 70.7zM1087.48 74.6L1087.90 76.9L1088.10 91.9L1088.38 99.2L1088.38 107.7L1088.10 114.6L1087.90 129.0L1087.48 131.2L1086.48 131.2L1086.06 129.0L1085.86 114.6L1085.58 107.7L1085.58 99.2L1085.86 91.9L1086.06 76.9L1086.48 74.6zM1090.17 70.5L1090.60 73.1L1090.79 90.3L1091.07 98.5L1091.07 108.3L1090.79 116.2L1090.60 132.6L1090.17 135.2L1089.17 135.2L1088.75 132.6L1088.56 116.2L1088.28 108.3L1088.28 98.5L1088.56 90.3L1088.75 73.1L1089.17 70.5zM1092.87 77.1L1093.29 79.2L1093.49 92.9L1093.77 99.5L1093.77 107.3L1093.49 113.6L1093.29 126.8L1092.87 128.9L1091.87 128.9L1091.45 126.8L1091.25 113.6L1090.97 107.3L1090.97 99.5L1091.25 92.9L1091.45 79.2L1091.87 77.1zM1095.56 76.7L1095.98 78.9L1096.18 92.8L1096.46 99.5L1096.46 107.4L1096.18 113.8L1095.98 127.1L1095.56 129.2L1094.56 129.2L1094.14 127.1L1093.94 113.8L1093.67 107.4L1093.67 99.5L1093.94 92.8L1094.14 78.9L1094.56 76.7zM1098.26 76.1L1098.68 78.3L1098.88 92.5L1099.16 99.4L1099.16 107.4L1098.88 114.0L1098.68 127.7L1098.26 129.8L1097.26 129.8L1096.84 127.7L1096.64 114.0L1096.36 107.4L1096.36 99.4L1096.64 92.5L1096.84 78.3L1097.26 76.1zM1100.95 78.9L1101.38 80.9L1101.57 93.7L1101.85 99.8L1101.85 107.0L1101.57 112.9L1101.38 125.2L1100.95 127.1L1099.95 127.1L1099.53 125.2L1099.34 112.9L1099.06 107.0L1099.06 99.8L1099.34 93.7L1099.53 80.9L1099.95 78.9zM1103.65 73.5L1104.07 75.9L1104.27 91.5L1104.55 99.0L1104.55 107.8L1104.27 115.0L1104.07 130.0L1103.65 132.3L1102.65 132.3L1102.23 130.0L1102.03 115.0L1101.75 107.8L1101.75 99.0L1102.03 91.5L1102.23 75.9L1102.65 73.5zM1106.35 80.2L1106.77 82.0L1106.96 94.2L1107.24 100.0L1107.24 106.9L1106.96 112.5L1106.77 124.1L1106.35 125.9L1105.35 125.9L1104.92 124.1L1104.73 112.5L1104.45 106.9L1104.45 100.0L1104.73 94.2L1104.92 82.0L1105.35 80.2zM1109.04 81.3L1109.46 83.1L1109.66 94.6L1109.94 100.2L1109.94 106.7L1109.66 112.0L1109.46 123.1L1109.04 124.8L1108.04 124.8L1107.62 123.1L1107.42 112.0L1107.14 106.7L1107.14 100.2L1107.42 94.6L1107.62 83.1L1108.04 81.3zM1111.73 81.2L1112.15 83.0L1112.35 94.6L1112.63 100.2L1112.63 106.7L1112.35 112.1L1112.15 123.2L1111.73 124.9L1110.73 124.9L1110.31 123.2L1110.12 112.1L1109.84 106.7L1109.84 100.2L1110.12 94.6L1110.31 83.0L1110.73 81.2zM1114.43 80.1L1114.85 82.0L1115.05 94.2L1115.33 100.0L1115.33 106.9L1115.05 112.5L1114.85 124.1L1114.43 125.9L1113.43 125.9L1113.01 124.1L1112.81 112.5L1112.53 106.9L1112.53 100.0L1112.81 94.2L1113.01 82.0L1113.43 80.1zM1117.12 68.5L1117.55 71.3L1117.74 89.5L1118.02 98.2L1118.02 108.5L1117.74 116.9L1117.55 134.4L1117.12 137.1L1116.12 137.1L1115.70 134.4L1115.51 116.9L1115.23 108.5L1115.23 98.2L1115.51 89.5L1115.70 71.3L1116.12 68.5zM1119.82 73.7L1120.24 76.1L1120.44 91.6L1120.72 99.0L1120.72 107.8L1120.44 114.9L1120.24 129.8L1119.82 132.1L1118.82 132.1L1118.40 129.8L1118.20 114.9L1117.92 107.8L1117.92 99.0L1118.20 91.6L1118.40 76.1L1118.82 73.7zM1122.51 75.6L1122.93 77.8L1123.13 92.3L1123.41 99.3L1123.41 107.5L1123.13 114.2L1122.93 128.1L1122.51 130.3L1121.51 130.3L1121.09 128.1L1120.89 114.2L1120.62 107.5L1120.62 99.3L1120.89 92.3L1121.09 77.8L1121.51 75.6zM1125.21 73.4L1125.63 75.8L1125.83 91.5L1126.11 99.0L1126.11 107.8L1125.83 115.1L1125.63 130.1L1125.21 132.4L1124.21 132.4L1123.79 130.1L1123.59 115.1L1123.31 107.8L1123.31 99.0L1123.59 91.5L1123.79 75.8L1124.21 73.4zM1127.90 75.1L1128.33 77.4L1128.52 92.1L1128.80 99.2L1128.80 107.6L1128.52 114.4L1128.33 128.6L1127.90 130.7L1126.90 130.7L1126.48 128.6L1126.29 114.4L1126.01 107.6L1126.01 99.2L1126.29 92.1L1126.48 77.4L1126.90 75.1zM1130.60 69.5L1131.02 72.2L1131.22 89.9L1131.50 98.4L1131.50 108.4L1131.22 116.6L1131.02 133.5L1130.60 136.1L1129.60 136.1L1129.18 133.5L1128.98 116.6L1128.70 108.4L1128.70 98.4L1128.98 89.9L1129.18 72.2L1129.60 69.5zM1133.29 76.3L1133.71 78.4L1133.91 92.6L1134.19 99.4L1134.19 107.4L1133.91 114.0L1133.71 127.6L1133.29 129.6L1132.29 129.6L1131.87 127.6L1131.67 114.0L1131.40 107.4L1131.40 99.4L1131.67 92.6L1131.87 78.4L1132.29 76.3zM1135.99 78.2L1136.41 80.3L1136.61 93.4L1136.89 99.7L1136.89 107.1L1136.61 113.2L1136.41 125.8L1135.99 127.8L1134.99 127.8L1134.57 125.8L1134.37 113.2L1134.09 107.1L1134.09 99.7L1134.37 93.4L1134.57 80.3L1134.99 78.2zM1138.68 77.2L1139.11 79.3L1139.30 93.0L1139.58 99.6L1139.58 107.3L1139.30 113.6L1139.11 126.7L1138.68 128.7L1137.68 128.7L1137.26 126.7L1137.07 113.6L1136.79 107.3L1136.79 99.6L1137.07 93.0L1137.26 79.3L1137.68 77.2zM1141.38 75.8L1141.80 78.0L1142.00 92.4L1142.28 99.3L1142.28 107.5L1142.00 114.1L1141.80 128.0L1141.38 130.1L1140.38 130.1L1139.96 128.0L1139.76 114.1L1139.48 107.5L1139.48 99.3L1139.76 92.4L1139.96 78.0L1140.38 75.8zM1144.07 54.5L1144.49 58.4L1144.69 83.9L1144.97 96.2L1144.97 110.6L1144.69 122.3L1144.49 146.8L1144.07 150.5L1143.07 150.5L1142.65 146.8L1142.45 122.3L1142.18 110.6L1142.18 96.2L1142.45 83.9L1142.65 58.4L1143.07 54.5zM1146.77 58.6L1147.19 62.2L1147.39 85.5L1147.67 96.8L1147.67 110.0L1147.39 120.7L1147.19 143.2L1146.77 146.6L1145.77 146.6L1145.35 143.2L1145.15 120.7L1144.87 110.0L1144.87 96.8L1145.15 85.5L1145.35 62.2L1145.77 58.6zM1149.46 61.0L1149.88 64.4L1150.08 86.5L1150.36 97.1L1150.36 109.6L1150.08 119.8L1149.88 141.1L1149.46 144.3L1148.46 144.3L1148.04 141.1L1147.85 119.8L1147.57 109.6L1147.57 97.1L1147.85 86.5L1148.04 64.4L1148.46 61.0zM1152.16 58.9L1152.58 62.5L1152.78 85.7L1153.06 96.8L1153.06 109.9L1152.78 120.6L1152.58 142.9L1152.16 146.3L1151.16 146.3L1150.74 142.9L1150.54 120.6L1150.26 109.9L1150.26 96.8L1150.54 85.7L1150.74 62.5L1151.16 58.9zM1154.86 64.2L1155.28 67.3L1155.47 87.8L1155.75 97.6L1155.75 109.2L1155.47 118.6L1155.28 138.2L1154.86 141.3L1153.86 141.3L1153.43 138.2L1153.24 118.6L1152.96 109.2L1152.96 97.6L1153.24 87.8L1153.43 67.3L1153.86 64.2zM1157.55 62.5L1157.97 65.8L1158.17 87.1L1158.45 97.3L1158.45 109.4L1158.17 119.2L1157.97 139.7L1157.55 142.9L1156.55 142.9L1156.13 139.7L1155.93 119.2L1155.65 109.4L1155.65 97.3L1155.93 87.1L1156.13 65.8L1156.55 62.5zM1160.24 69.5L1160.66 72.2L1160.86 89.9L1161.14 98.4L1161.14 108.4L1160.86 116.6L1160.66 133.5L1160.24 136.2L1159.24 136.2L1158.82 133.5L1158.62 116.6L1158.35 108.4L1158.35 98.4L1158.62 89.9L1158.82 72.2L1159.24 69.5zM1162.94 70.4L1163.36 73.0L1163.56 90.2L1163.84 98.5L1163.84 108.3L1163.56 116.2L1163.36 132.8L1162.94 135.3L1161.94 135.3L1161.52 132.8L1161.32 116.2L1161.04 108.3L1161.04 98.5L1161.32 90.2L1161.52 73.0L1161.94 70.4zM1165.63 68.9L1166.06 71.7L1166.25 89.7L1166.53 98.3L1166.53 108.5L1166.25 116.8L1166.06 134.0L1165.63 136.7L1164.63 136.7L1164.21 134.0L1164.02 116.8L1163.74 108.5L1163.74 98.3L1164.02 89.7L1164.21 71.7L1164.63 68.9zM1168.33 70.0L1168.75 72.7L1168.95 90.1L1169.23 98.5L1169.23 108.3L1168.95 116.3L1168.75 133.1L1168.33 135.6L1167.33 135.6L1166.91 133.1L1166.71 116.3L1166.43 108.3L1166.43 98.5L1166.71 90.1L1166.91 72.7L1167.33 70.0zM1171.03 67.5L1171.45 70.4L1171.64 89.1L1171.92 98.1L1171.92 108.7L1171.64 117.3L1171.45 135.3L1171.03 138.1L1170.03 138.1L1169.61 135.3L1169.41 117.3L1169.13 108.7L1169.13 98.1L1169.41 89.1L1169.61 70.4L1170.03 67.5zM1173.72 72.2L1174.14 74.7L1174.34 91.0L1174.62 98.8L1174.62 108.0L1174.34 115.5L1174.14 131.1L1173.72 133.5L1172.72 133.5L1172.30 131.1L1172.10 115.5L1171.82 108.0L1171.82 98.8L1172.10 91.0L1172.30 74.7L1172.72 72.2zM1176.41 72.8L1176.84 75.3L1177.03 91.2L1177.31 98.9L1177.31 107.9L1177.03 115.3L1176.84 130.6L1176.41 133.0L1175.41 133.0L1174.99 130.6L1174.80 115.3L1174.52 107.9L1174.52 98.9L1174.80 91.2L1174.99 75.3L1175.41 72.8zM1179.11 71.9L1179.53 74.4L1179.73 90.9L1180.01 98.8L1180.01 108.1L1179.73 115.6L1179.53 131.4L1179.11 133.9L1178.11 133.9L1177.69 131.4L1177.49 115.6L1177.21 108.1L1177.21 98.8L1177.49 90.9L1177.69 74.4L1178.11 71.9zM1181.81 74.2L1182.23 76.5L1182.42 91.8L1182.70 99.1L1182.70 107.7L1182.42 114.8L1182.23 129.4L1181.81 131.7L1180.81 131.7L1180.38 129.4L1180.19 114.8L1179.91 107.7L1179.91 99.1L1180.19 91.8L1180.38 76.5L1180.81 74.2zM1184.50 68.5L1184.92 71.3L1185.12 89.5L1185.40 98.2L1185.40 108.5L1185.12 116.9L1184.92 134.4L1184.50 137.1L1183.50 137.1L1183.08 134.4L1182.88 116.9L1182.60 108.5L1182.60 98.2L1182.88 89.5L1183.08 71.3L1183.50 68.5zM1187.19 74.9L1187.62 77.1L1187.81 92.0L1188.09 99.2L1188.09 107.6L1187.81 114.5L1187.62 128.8L1187.19 131.0L1186.19 131.0L1185.77 128.8L1185.58 114.5L1185.30 107.6L1185.30 99.2L1185.58 92.0L1185.77 77.1L1186.19 74.9zM1189.89 76.1L1190.31 78.3L1190.51 92.5L1190.79 99.4L1190.79 107.4L1190.51 114.0L1190.31 127.7L1189.89 129.8L1188.89 129.8L1188.47 127.7L1188.27 114.0L1187.99 107.4L1187.99 99.4L1188.27 92.5L1188.47 78.3L1188.89 76.1zM1192.59 73.3L1193.01 75.7L1193.20 91.4L1193.48 99.0L1193.48 107.9L1193.20 115.1L1193.01 130.2L1192.59 132.5L1191.59 132.5L1191.16 130.2L1190.97 115.1L1190.69 107.9L1190.69 99.0L1190.97 91.4L1191.16 75.7L1191.59 73.3zM1195.28 77.6L1195.70 79.7L1195.90 93.1L1196.18 99.6L1196.18 107.2L1195.90 113.4L1195.70 126.4L1195.28 128.3L1194.28 128.3L1193.86 126.4L1193.66 113.4L1193.38 107.2L1193.38 99.6L1193.66 93.1L1193.86 79.7L1194.28 77.6zM1197.97 75.5L1198.39 77.7L1198.59 92.3L1198.87 99.3L1198.87 107.5L1198.59 114.3L1198.39 128.2L1197.97 130.4L1196.97 130.4L1196.55 128.2L1196.36 114.3L1196.08 107.5L1196.08 99.3L1196.36 92.3L1196.55 77.7L1196.97 75.5zM1200.67 82.1L1201.09 83.9L1201.29 95.0L1201.57 100.3L1201.57 106.6L1201.29 111.7L1201.09 122.4L1200.67 124.0L1199.67 124.0L1199.25 122.4L1199.05 111.7L1198.77 106.6L1198.77 100.3L1199.05 95.0L1199.25 83.9L1199.67 82.1zM1203.37 82.5L1203.79 84.2L1203.98 95.1L1204.26 100.3L1204.26 106.5L1203.98 111.6L1203.79 122.1L1203.37 123.7L1202.37 123.7L1201.94 122.1L1201.75 111.6L1201.47 106.5L1201.47 100.3L1201.75 95.1L1201.94 84.2L1202.37 82.5zM1206.06 82.7L1206.48 84.4L1206.68 95.2L1206.96 100.4L1206.96 106.5L1206.68 111.5L1206.48 121.9L1206.06 123.5L1205.06 123.5L1204.64 121.9L1204.44 111.5L1204.16 106.5L1204.16 100.4L1204.44 95.2L1204.64 84.4L1205.06 82.7zM1208.75 81.8L1209.17 83.5L1209.37 94.8L1209.65 100.2L1209.65 106.6L1209.37 111.8L1209.17 122.7L1208.75 124.3L1207.75 124.3L1207.33 122.7L1207.13 111.8L1206.86 106.6L1206.86 100.2L1207.13 94.8L1207.33 83.5L1207.75 81.8zM1211.45 95.5L1211.87 96.1L1212.07 100.3L1212.35 101.3L1212.35 105.7L1212.07 106.6L1211.87 110.6L1211.45 111.2L1210.45 111.2L1210.03 110.6L1209.83 106.6L1209.55 105.7L1209.55 101.3L1209.83 100.3L1210.03 96.1L1210.45 95.5zM1214.14 100.5L1214.57 100.7L1214.76 102.3L1215.04 101.3L1215.04 105.7L1214.76 104.7L1214.57 106.2L1214.14 106.4L1213.14 106.4L1212.72 106.2L1212.53 104.7L1212.25 105.7L1212.25 101.3L1212.53 102.3L1212.72 100.7L1213.14 100.5zM1216.84 101.2L1217.26 101.4L1217.46 102.6L1217.74 101.3L1217.74 105.7L1217.46 104.4L1217.26 105.5L1216.84 105.7L1215.84 105.7L1215.42 105.5L1215.22 104.4L1214.94 105.7L1214.94 101.3L1215.22 102.6L1215.42 101.4L1215.84 101.2zM1219.54 100.5L1219.96 100.7L1220.15 102.3L1220.43 101.3L1220.43 105.7L1220.15 104.7L1219.96 106.2L1219.54 106.4L1218.54 106.4L1218.12 106.2L1217.92 104.7L1217.64 105.7L1217.64 101.3L1217.92 102.3L1218.12 100.7L1218.54 100.5zM1222.23 101.2L1222.65 101.4L1222.85 102.6L1223.13 101.3L1223.13 105.7L1222.85 104.4L1222.65 105.5L1222.23 105.7L1221.23 105.7L1220.81 105.5L1220.61 104.4L1220.33 105.7L1220.33 101.3L1220.61 102.6L1220.81 101.4L1221.23 101.2zM1224.92 89.5L1225.35 90.6L1225.54 97.9L1225.82 101.3L1225.82 105.7L1225.54 108.9L1225.35 115.9L1224.92 116.9L1223.92 116.9L1223.50 115.9L1223.31 108.9L1223.03 105.7L1223.03 101.3L1223.31 97.9L1223.50 90.6L1223.92 89.5zM1227.62 96.0L1228.04 96.6L1228.24 100.5L1228.52 101.3L1228.52 105.7L1228.24 106.4L1228.04 110.1L1227.62 110.7L1226.62 110.7L1226.20 110.1L1226.00 106.4L1225.72 105.7L1225.72 101.3L1226.00 100.5L1226.20 96.6L1226.62 96.0zM1230.32 96.3L1230.74 96.8L1230.93 100.6L1231.21 101.3L1231.21 105.7L1230.93 106.3L1230.74 109.9L1230.32 110.4L1229.32 110.4L1228.89 109.9L1228.70 106.3L1228.42 105.7L1228.42 101.3L1228.70 100.6L1228.89 96.8L1229.32 96.3zM1233.01 95.8L1233.43 96.4L1233.63 100.4L1233.91 101.3L1233.91 105.7L1233.63 106.5L1233.43 110.3L1233.01 110.9L1232.01 110.9L1231.59 110.3L1231.39 106.5L1231.11 105.7L1231.11 101.3L1231.39 100.4L1231.59 96.4L1232.01 95.8zM1235.70 97.8L1236.12 98.3L1236.32 101.2L1236.60 101.3L1236.60 105.7L1236.32 105.7L1236.12 108.5L1235.70 109.0L1234.70 109.0L1234.28 108.5L1234.09 105.7L1233.81 105.7L1233.81 101.3L1234.09 101.2L1234.28 98.3L1234.70 97.8zM1238.40 94.5L1238.82 95.2L1239.02 99.9L1239.30 101.3L1239.30 105.7L1239.02 107.0L1238.82 111.4L1238.40 112.1L1237.40 112.1L1236.98 111.4L1236.78 107.0L1236.50 105.7L1236.50 101.3L1236.78 99.9L1236.98 95.2L1237.40 94.5zM1241.10 99.5L1241.52 99.8L1241.71 101.9L1241.99 101.3L1241.99 105.7L1241.71 105.1L1241.52 107.1L1241.10 107.4L1240.10 107.4L1239.67 107.1L1239.48 105.1L1239.20 105.7L1239.20 101.3L1239.48 101.9L1239.67 99.8L1240.10 99.5zM1243.79 100.2L1244.21 100.5L1244.41 102.2L1244.69 101.3L1244.69 105.7L1244.41 104.8L1244.21 106.4L1243.79 106.6L1242.79 106.6L1242.37 106.4L1242.17 104.8L1241.89 105.7L1241.89 101.3L1242.17 102.2L1242.37 100.5L1242.79 100.2zM1246.48 99.5L1246.90 99.8L1247.10 101.9L1247.38 101.3L1247.38 105.7L1247.10 105.1L1246.90 107.1L1246.48 107.4L1245.48 107.4L1245.06 107.1L1244.87 105.1L1244.59 105.7L1244.59 101.3L1244.87 101.9L1245.06 99.8L1245.48 99.5zM1249.18 100.5L1249.60 100.7L1249.80 102.3L1250.08 101.3L1250.08 105.7L1249.80 104.7L1249.60 106.2L1249.18 106.4L1248.18 106.4L1247.76 106.2L1247.56 104.7L1247.28 105.7L1247.28 101.3L1247.56 102.3L1247.76 100.7L1248.18 100.5zM1251.88 94.5L1252.30 95.2L1252.49 99.9L1252.77 101.3L1252.77 105.7L1252.49 107.0L1252.30 111.4L1251.88 112.1L1250.88 112.1L1250.45 111.4L1250.26 107.0L1249.98 105.7L1249.98 101.3L1250.26 99.9L1250.45 95.2L1250.88 94.5zM1254.57 99.5L1254.99 99.8L1255.19 101.9L1255.47 101.3L1255.47 105.7L1255.19 105.0L1254.99 107.1L1254.57 107.4L1253.57 107.4L1253.15 107.1L1252.95 105.0L1252.67 105.7L1252.67 101.3L1252.95 101.9L1253.15 99.8L1253.57 99.5zM1257.26 100.5L1257.68 100.8L1257.88 102.3L1258.16 101.3L1258.16 105.7L1257.88 104.6L1257.68 106.1L1257.26 106.3L1256.26 106.3L1255.84 106.1L1255.64 104.6L1255.37 105.7L1255.37 101.3L1255.64 102.3L1255.84 100.8L1256.26 100.5zM1259.96 99.4L1260.38 99.8L1260.58 101.9L1260.86 101.3L1260.86 105.7L1260.58 105.1L1260.38 107.1L1259.96 107.4L1258.96 107.4L1258.54 107.1L1258.34 105.1L1258.06 105.7L1258.06 101.3L1258.34 101.9L1258.54 99.8L1258.96 99.4zM1262.65 100.2L1263.08 100.5L1263.27 102.2L1263.55 101.3L1263.55 105.7L1263.27 104.8L1263.08 106.4L1262.65 106.6L1261.65 106.6L1261.23 106.4L1261.04 104.8L1260.76 105.7L1260.76 101.3L1261.04 102.2L1261.23 100.5L1261.65 100.2zM1265.35 88.5L1265.77 89.7L1265.97 97.5L1266.25 101.2L1266.25 105.7L1265.97 109.3L1265.77 116.7L1265.35 117.9L1264.35 117.9L1263.93 116.7L1263.73 109.3L1263.45 105.7L1263.45 101.2L1263.73 97.5L1263.93 89.7L1264.35 88.5zM1268.05 94.9L1268.47 95.6L1268.66 100.1L1268.94 101.3L1268.94 105.7L1268.66 106.8L1268.47 111.1L1268.05 111.7L1267.05 111.7L1266.62 111.1L1266.43 106.8L1266.15 105.7L1266.15 101.3L1266.43 100.1L1266.62 95.6L1267.05 94.9zM1270.74 95.2L1271.16 95.9L1271.36 100.2L1271.64 101.3L1271.64 105.7L1271.36 106.7L1271.16 110.8L1270.74 111.5L1269.74 111.5L1269.32 110.8L1269.12 106.7L1268.84 105.7L1268.84 101.3L1269.12 100.2L1269.32 95.9L1269.74 95.2zM1273.43 94.7L1273.86 95.4L1274.05 100.0L1274.33 101.3L1274.33 105.7L1274.05 106.9L1273.86 111.3L1273.43 111.9L1272.43 111.9L1272.01 111.3L1271.82 106.9L1271.54 105.7L1271.54 101.3L1271.82 100.0L1272.01 95.4L1272.43 94.7zM1276.13 95.7L1276.55 96.3L1276.75 100.4L1277.03 101.3L1277.03 105.7L1276.75 106.5L1276.55 110.4L1276.13 111.0L1275.13 111.0L1274.71 110.4L1274.51 106.5L1274.23 105.7L1274.23 101.3L1274.51 100.4L1274.71 96.3L1275.13 95.7zM1278.83 84.5L1279.25 86.0L1279.44 95.9L1279.72 100.7L1279.72 106.2L1279.44 110.8L1279.25 120.3L1278.83 121.7L1277.83 121.7L1277.40 120.3L1277.21 110.8L1276.93 106.2L1276.93 100.7L1277.21 95.9L1277.40 86.0L1277.83 84.5zM1281.52 90.4L1281.94 91.4L1282.14 98.3L1282.42 101.3L1282.42 105.7L1282.14 108.5L1281.94 115.1L1281.52 116.1L1280.52 116.1L1280.10 115.1L1279.90 108.5L1279.62 105.7L1279.62 101.3L1279.90 98.3L1280.10 91.4L1280.52 90.4zM1284.21 91.9L1284.63 92.8L1284.83 98.9L1285.11 101.3L1285.11 105.7L1284.83 107.9L1284.63 113.7L1284.21 114.6L1283.21 114.6L1282.79 113.7L1282.60 107.9L1282.32 105.7L1282.32 101.3L1282.60 98.9L1282.79 92.8L1283.21 91.9zM1286.91 91.4L1287.33 92.3L1287.53 98.7L1287.81 101.3L1287.81 105.7L1287.53 108.2L1287.33 114.2L1286.91 115.1L1285.91 115.1L1285.49 114.2L1285.29 108.2L1285.01 105.7L1285.01 101.3L1285.29 98.7L1285.49 92.3L1285.91 91.4zM1289.61 91.7L1290.03 92.7L1290.22 98.8L1290.50 101.3L1290.50 105.7L1290.22 108.0L1290.03 113.9L1289.61 114.8L1288.61 114.8L1288.18 113.9L1287.99 108.0L1287.71 105.7L1287.71 101.3L1287.99 98.8L1288.18 92.7L1288.61 91.7zM1292.30 85.5L1292.72 86.9L1292.92 96.3L1293.20 100.8L1293.20 106.1L1292.92 110.4L1292.72 119.4L1292.30 120.8L1291.30 120.8L1290.88 119.4L1290.68 110.4L1290.40 106.1L1290.40 100.8L1290.68 96.3L1290.88 86.9L1291.30 85.5zM1294.99 91.9L1295.41 92.9L1295.61 98.9L1295.89 101.3L1295.89 105.7L1295.61 107.9L1295.41 113.7L1294.99 114.6L1293.99 114.6L1293.57 113.7L1293.38 107.9L1293.10 105.7L1293.10 101.3L1293.38 98.9L1293.57 92.9L1293.99 91.9zM1297.69 92.1L1298.11 93.0L1298.31 98.9L1298.59 101.3L1298.59 105.7L1298.31 107.9L1298.11 113.6L1297.69 114.4L1296.69 114.4L1296.27 113.6L1296.07 107.9L1295.79 105.7L1295.79 101.3L1296.07 98.9L1296.27 93.0L1296.69 92.1zM1300.38 91.2L1300.81 92.2L1301.00 98.6L1301.28 101.3L1301.28 105.7L1301.00 108.2L1300.81 114.4L1300.38 115.3L1299.38 115.3L1298.96 114.4L1298.77 108.2L1298.49 105.7L1298.49 101.3L1298.77 98.6L1298.96 92.2L1299.38 91.2zM1303.08 92.8L1303.50 93.7L1303.70 99.2L1303.98 101.3L1303.98 105.7L1303.70 107.6L1303.50 112.9L1303.08 113.8L1302.08 113.8L1301.66 112.9L1301.46 107.6L1301.18 105.7L1301.18 101.3L1301.46 99.2L1301.66 93.7L1302.08 92.8zM1305.77 85.5L1306.19 86.9L1306.39 96.3L1306.67 100.8L1306.67 106.1L1306.39 110.4L1306.19 119.4L1305.77 120.8L1304.77 120.8L1304.35 119.4L1304.15 110.4L1303.88 106.1L1303.88 100.8L1304.15 96.3L1304.35 86.9L1304.77 85.5zM1308.47 91.6L1308.89 92.5L1309.09 98.7L1309.37 101.3L1309.37 105.7L1309.09 108.1L1308.89 114.0L1308.47 115.0L1307.47 115.0L1307.05 114.0L1306.85 108.1L1306.57 105.7L1306.57 101.3L1306.85 98.7L1307.05 92.5L1307.47 91.6zM1311.16 92.7L1311.59 93.5L1311.78 99.2L1312.06 101.3L1312.06 105.7L1311.78 107.7L1311.59 113.1L1311.16 113.9L1310.16 113.9L1309.74 113.1L1309.55 107.7L1309.27 105.7L1309.27 101.3L1309.55 99.2L1309.74 93.5L1310.16 92.7zM1313.86 91.2L1314.28 92.1L1314.48 98.6L1314.76 101.3L1314.76 105.7L1314.48 108.2L1314.28 114.4L1313.86 115.3L1312.86 115.3L1312.44 114.4L1312.24 108.2L1311.96 105.7L1311.96 101.3L1312.24 98.6L1312.44 92.1L1312.86 91.2zM1316.56 92.5L1316.98 93.4L1317.17 99.1L1317.45 101.3L1317.45 105.7L1317.17 107.7L1316.98 113.2L1316.56 114.1L1315.56 114.1L1315.13 113.2L1314.94 107.7L1314.66 105.7L1314.66 101.3L1314.94 99.1L1315.13 93.4L1315.56 92.5zM1319.25 78.5L1319.67 80.5L1319.87 93.5L1320.15 99.8L1320.15 107.1L1319.87 113.1L1319.67 125.6L1319.25 127.5L1318.25 127.5L1317.83 125.6L1317.63 113.1L1317.35 107.1L1317.35 99.8L1317.63 93.5L1317.83 80.5L1318.25 78.5zM1321.94 84.0L1322.37 85.6L1322.56 95.7L1322.84 100.6L1322.84 106.3L1322.56 111.0L1322.37 120.7L1321.94 122.2L1320.94 122.2L1320.52 120.7L1320.33 111.0L1320.05 106.3L1320.05 100.6L1320.33 95.7L1320.52 85.6L1320.94 84.0zM1324.64 86.4L1325.06 87.8L1325.26 96.7L1325.54 100.9L1325.54 106.0L1325.26 110.1L1325.06 118.6L1324.64 119.9L1323.64 119.9L1323.22 118.6L1323.02 110.1L1322.74 106.0L1322.74 100.9L1323.02 96.7L1323.22 87.8L1323.64 86.4zM1327.34 84.0L1327.76 85.5L1327.95 95.7L1328.23 100.6L1328.23 106.3L1327.95 111.0L1327.76 120.7L1327.34 122.2L1326.34 122.2L1325.91 120.7L1325.72 111.0L1325.44 106.3L1325.44 100.6L1325.72 95.7L1325.91 85.5L1326.34 84.0zM1330.03 86.3L1330.45 87.7L1330.65 96.6L1330.93 100.9L1330.93 106.0L1330.65 110.1L1330.45 118.7L1330.03 120.0L1329.03 120.0L1328.61 118.7L1328.41 110.1L1328.13 106.0L1328.13 100.9L1328.41 96.6L1328.61 87.7L1329.03 86.3zM1332.72 75.5L1333.14 77.7L1333.34 92.3L1333.62 99.3L1333.62 107.5L1333.34 114.3L1333.14 128.2L1332.72 130.4L1331.72 130.4L1331.30 128.2L1331.11 114.3L1330.83 107.5L1330.83 99.3L1331.11 92.3L1331.30 77.7L1331.72 75.5zM1335.42 80.9L1335.84 82.7L1336.04 94.5L1336.32 100.1L1336.32 106.8L1336.04 112.2L1335.84 123.4L1335.42 125.2L1334.42 125.2L1334.00 123.4L1333.80 112.2L1333.52 106.8L1333.52 100.1L1333.80 94.5L1334.00 82.7L1334.42 80.9zM1338.12 83.3L1338.54 84.9L1338.73 95.4L1339.01 100.5L1339.01 106.4L1338.73 111.3L1338.54 121.4L1338.12 122.9L1337.12 122.9L1336.69 121.4L1336.50 111.3L1336.22 106.4L1336.22 100.5L1336.50 95.4L1336.69 84.9L1337.12 83.3zM1340.81 82.8L1341.23 84.5L1341.43 95.2L1341.71 100.4L1341.71 106.5L1341.43 111.4L1341.23 121.8L1340.81 123.4L1339.81 123.4L1339.39 121.8L1339.19 111.4L1338.91 106.5L1338.91 100.4L1339.19 95.2L1339.39 84.5L1339.81 82.8zM1343.50 82.7L1343.92 84.4L1344.12 95.2L1344.40 100.4L1344.40 106.5L1344.12 111.5L1343.92 121.9L1343.50 123.5L1342.50 123.5L1342.08 121.9L1341.88 111.5L1341.61 106.5L1341.61 100.4L1341.88 95.2L1342.08 84.4L1342.50 82.7zM1346.20 76.5L1346.62 78.7L1346.82 92.7L1347.10 99.5L1347.10 107.4L1346.82 113.9L1346.62 127.3L1346.20 129.4L1345.20 129.4L1344.78 127.3L1344.58 113.9L1344.30 107.4L1344.30 99.5L1344.58 92.7L1344.78 78.7L1345.20 76.5zM1348.89 82.4L1349.32 84.1L1349.51 95.1L1349.79 100.3L1349.79 106.5L1349.51 111.6L1349.32 122.1L1348.89 123.7L1347.89 123.7L1347.47 122.1L1347.28 111.6L1347.00 106.5L1347.00 100.3L1347.28 95.1L1347.47 84.1L1347.89 82.4zM1351.59 84.1L1352.01 85.7L1352.21 95.7L1352.49 100.6L1352.49 106.3L1352.21 110.9L1352.01 120.6L1351.59 122.1L1350.59 122.1L1350.17 120.6L1349.97 110.9L1349.69 106.3L1349.69 100.6L1349.97 95.7L1350.17 85.7L1350.59 84.1zM1354.29 82.7L1354.71 84.4L1354.90 95.2L1355.18 100.4L1355.18 106.5L1354.90 111.5L1354.71 121.9L1354.29 123.5L1353.29 123.5L1352.87 121.9L1352.67 111.5L1352.39 106.5L1352.39 100.4L1352.67 95.2L1352.87 84.4L1353.29 82.7zM1356.98 84.1L1357.40 85.7L1357.60 95.7L1357.88 100.6L1357.88 106.3L1357.60 111.0L1357.40 120.6L1356.98 122.1L1355.98 122.1L1355.56 120.6L1355.36 111.0L1355.08 106.3L1355.08 100.6L1355.36 95.7L1355.56 85.7L1355.98 84.1zM1359.67 78.5L1360.10 80.5L1360.29 93.5L1360.57 99.8L1360.57 107.1L1360.29 113.1L1360.10 125.6L1359.67 127.5L1358.67 127.5L1358.25 125.6L1358.06 113.1L1357.78 107.1L1357.78 99.8L1358.06 93.5L1358.25 80.5L1358.67 78.5zM1362.37 85.1L1362.79 86.6L1362.99 96.1L1363.27 100.7L1363.27 106.1L1362.99 110.6L1362.79 119.8L1362.37 121.2L1361.37 121.2L1360.95 119.8L1360.75 110.6L1360.47 106.1L1360.47 100.7L1360.75 96.1L1360.95 86.6L1361.37 85.1zM1365.07 85.5L1365.49 87.0L1365.68 96.3L1365.96 100.8L1365.96 106.1L1365.68 110.4L1365.49 119.4L1365.07 120.7L1364.07 120.7L1363.64 119.4L1363.45 110.4L1363.17 106.1L1363.17 100.8L1363.45 96.3L1363.64 87.0L1364.07 85.5zM1367.76 85.3L1368.18 86.8L1368.38 96.2L1368.66 100.8L1368.66 106.1L1368.38 110.5L1368.18 119.5L1367.76 120.9L1366.76 120.9L1366.34 119.5L1366.14 110.5L1365.86 106.1L1365.86 100.8L1366.14 96.2L1366.34 86.8L1366.76 85.3zM1370.45 85.3L1370.88 86.7L1371.07 96.2L1371.35 100.8L1371.35 106.1L1371.07 110.5L1370.88 119.6L1370.45 121.0L1369.45 121.0L1369.03 119.6L1368.84 110.5L1368.56 106.1L1368.56 100.8L1368.84 96.2L1369.03 86.7L1369.45 85.3zM1373.15 78.5L1373.57 80.5L1373.77 93.5L1374.05 99.8L1374.05 107.1L1373.77 113.1L1373.57 125.6L1373.15 127.5L1372.15 127.5L1371.73 125.6L1371.53 113.1L1371.25 107.1L1371.25 99.8L1371.53 93.5L1371.73 80.5L1372.15 78.5zM1375.85 85.8L1376.27 87.2L1376.46 96.4L1376.74 100.8L1376.74 106.0L1376.46 110.3L1376.27 119.1L1375.85 120.5L1374.85 120.5L1374.42 119.1L1374.23 110.3L1373.95 106.0L1373.95 100.8L1374.23 96.4L1374.42 87.2L1374.85 85.8zM1378.54 84.9L1378.96 86.4L1379.16 96.0L1379.44 100.7L1379.44 106.2L1379.16 110.7L1378.96 120.0L1378.54 121.4L1377.54 121.4L1377.12 120.0L1376.92 110.7L1376.64 106.2L1376.64 100.7L1376.92 96.0L1377.12 86.4L1377.54 84.9zM1381.23 84.8L1381.65 86.3L1381.85 96.0L1382.13 100.7L1382.13 106.2L1381.85 110.7L1381.65 120.0L1381.23 121.4L1380.23 121.4L1379.81 120.0L1379.62 110.7L1379.34 106.2L1379.34 100.7L1379.62 96.0L1379.81 86.3L1380.23 84.8zM1383.93 85.3L1384.35 86.7L1384.55 96.2L1384.83 100.8L1384.83 106.1L1384.55 110.5L1384.35 119.6L1383.93 121.0L1382.93 121.0L1382.51 119.6L1382.31 110.5L1382.03 106.1L1382.03 100.8L1382.31 96.2L1382.51 86.7L1382.93 85.3zM1386.62 75.5L1387.05 77.7L1387.24 92.3L1387.52 99.3L1387.52 107.5L1387.24 114.3L1387.05 128.2L1386.62 130.4L1385.62 130.4L1385.20 128.2L1385.01 114.3L1384.73 107.5L1384.73 99.3L1385.01 92.3L1385.20 77.7L1385.62 75.5zM1389.32 81.4L1389.74 83.2L1389.94 94.7L1390.22 100.2L1390.22 106.7L1389.94 112.0L1389.74 123.0L1389.32 124.7L1388.32 124.7L1387.90 123.0L1387.70 112.0L1387.42 106.7L1387.42 100.2L1387.70 94.7L1387.90 83.2L1388.32 81.4zM1392.01 82.4L1392.43 84.1L1392.63 95.0L1392.91 100.3L1392.91 106.5L1392.63 111.6L1392.43 122.2L1392.01 123.8L1391.01 123.8L1390.59 122.2L1390.39 111.6L1390.12 106.5L1390.12 100.3L1390.39 95.0L1390.59 84.1L1391.01 82.4zM1394.71 82.2L1395.13 83.9L1395.33 95.0L1395.61 100.3L1395.61 106.6L1395.33 111.7L1395.13 122.3L1394.71 123.9L1393.71 123.9L1393.29 122.3L1393.09 111.7L1392.81 106.6L1392.81 100.3L1393.09 95.0L1393.29 83.9L1393.71 82.2zM1397.40 83.6L1397.83 85.2L1398.02 95.5L1398.30 100.5L1398.30 106.4L1398.02 111.1L1397.83 121.1L1397.40 122.6L1396.40 122.6L1395.98 121.1L1395.79 111.1L1395.51 106.4L1395.51 100.5L1395.79 95.5L1395.98 85.2L1396.40 83.6zM1400.10 77.5L1400.52 79.6L1400.72 93.1L1401.00 99.6L1401.00 107.2L1400.72 113.5L1400.52 126.5L1400.10 128.5L1399.10 128.5L1398.68 126.5L1398.48 113.5L1398.20 107.2L1398.20 99.6L1398.48 93.1L1398.68 79.6L1399.10 77.5zM1402.80 83.6L1403.22 85.2L1403.41 95.5L1403.69 100.5L1403.69 106.4L1403.41 111.2L1403.22 121.1L1402.80 122.6L1401.80 122.6L1401.38 121.1L1401.18 111.2L1400.90 106.4L1400.90 100.5L1401.18 95.5L1401.38 85.2L1401.80 83.6zM1405.49 85.0L1405.91 86.5L1406.11 96.1L1406.39 100.7L1406.39 106.2L1406.11 110.6L1405.91 119.8L1405.49 121.2L1404.49 121.2L1404.07 119.8L1403.87 110.6L1403.59 106.2L1403.59 100.7L1403.87 96.1L1404.07 86.5L1404.49 85.0zM1408.18 84.3L1408.61 85.8L1408.80 95.8L1409.08 100.6L1409.08 106.3L1408.80 110.9L1408.61 120.5L1408.18 122.0L1407.18 122.0L1406.76 120.5L1406.57 110.9L1406.29 106.3L1406.29 100.6L1406.57 95.8L1406.76 85.8L1407.18 84.3zM1410.88 84.8L1411.30 86.3L1411.50 96.0L1411.78 100.7L1411.78 106.2L1411.50 110.7L1411.30 120.1L1410.88 121.5L1409.88 121.5L1409.46 120.1L1409.26 110.7L1408.98 106.2L1408.98 100.7L1409.26 96.0L1409.46 86.3L1409.88 84.8zM1413.58 79.5L1414.00 81.4L1414.19 93.9L1414.47 99.9L1414.47 107.0L1414.19 112.7L1414.00 124.7L1413.58 126.5L1412.58 126.5L1412.15 124.7L1411.96 112.7L1411.68 107.0L1411.68 99.9L1411.96 93.9L1412.15 81.4L1412.58 79.5zM1416.27 85.5L1416.69 86.9L1416.89 96.3L1417.17 100.8L1417.17 106.1L1416.89 110.4L1416.69 119.4L1416.27 120.8L1415.27 120.8L1414.85 119.4L1414.65 110.4L1414.37 106.1L1414.37 100.8L1414.65 96.3L1414.85 86.9L1415.27 85.5zM1418.96 87.0L1419.38 88.3L1419.58 96.9L1419.86 101.0L1419.86 105.9L1419.58 109.8L1419.38 118.1L1418.96 119.3L1417.96 119.3L1417.54 118.1L1417.35 109.8L1417.07 105.9L1417.07 101.0L1417.35 96.9L1417.54 88.3L1417.96 87.0zM1421.66 86.2L1422.08 87.6L1422.28 96.6L1422.56 100.9L1422.56 106.0L1422.28 110.1L1422.08 118.8L1421.66 120.1L1420.66 120.1L1420.24 118.8L1420.04 110.1L1419.76 106.0L1419.76 100.9L1420.04 96.6L1420.24 87.6L1420.66 86.2zM1424.36 86.8L1424.78 88.2L1424.97 96.8L1425.25 101.0L1425.25 105.9L1424.97 109.9L1424.78 118.2L1424.36 119.5L1423.36 119.5L1422.93 118.2L1422.74 109.9L1422.46 105.9L1422.46 101.0L1422.74 96.8L1422.93 88.2L1423.36 86.8zM1427.05 95.5L1427.47 96.1L1427.67 100.3L1427.95 101.3L1427.95 105.7L1427.67 106.6L1427.47 110.6L1427.05 111.2L1426.05 111.2L1425.63 110.6L1425.43 106.6L1425.15 105.7L1425.15 101.3L1425.43 100.3L1425.63 96.1L1426.05 95.5zM1429.74 100.6L1430.16 100.8L1430.36 102.3L1430.64 101.3L1430.64 105.7L1430.36 104.6L1430.16 106.1L1429.74 106.3L1428.74 106.3L1428.32 106.1L1428.12 104.6L1427.85 105.7L1427.85 101.3L1428.12 102.3L1428.32 100.8L1428.74 100.6zM1432.44 101.4L1432.86 101.6L1433.06 102.7L1433.34 101.3L1433.34 105.7L1433.06 104.3L1432.86 105.3L1432.44 105.5L1431.44 105.5L1431.02 105.3L1430.82 104.3L1430.54 105.7L1430.54 101.3L1430.82 102.7L1431.02 101.6L1431.44 101.4zM1435.13 100.7L1435.56 100.9L1435.75 102.4L1436.03 101.3L1436.03 105.7L1435.75 104.6L1435.56 106.0L1435.13 106.2L1434.13 106.2L1433.71 106.0L1433.52 104.6L1433.24 105.7L1433.24 101.3L1433.52 102.4L1433.71 100.9L1434.13 100.7zM1437.83 101.4L1438.25 101.6L1438.45 102.7L1438.73 101.3L1438.73 105.7L1438.45 104.3L1438.25 105.4L1437.83 105.5L1436.83 105.5L1436.41 105.4L1436.21 104.3L1435.93 105.7L1435.93 101.3L1436.21 102.7L1436.41 101.6L1436.83 101.4zM1440.52 89.5L1440.94 90.6L1441.14 97.9L1441.42 101.3L1441.42 105.7L1441.14 108.9L1440.94 115.9L1440.52 116.9L1439.52 116.9L1439.10 115.9L1438.90 108.9L1438.63 105.7L1438.63 101.3L1438.90 97.9L1439.10 90.6L1439.52 89.5zM1443.22 95.3L1443.64 96.0L1443.84 100.2L1444.12 101.3L1444.12 105.7L1443.84 106.6L1443.64 110.7L1443.22 111.4L1442.22 111.4L1441.80 110.7L1441.60 106.6L1441.32 105.7L1441.32 101.3L1441.60 100.2L1441.80 96.0L1442.22 95.3zM1445.91 96.3L1446.34 96.9L1446.53 100.6L1446.81 101.3L1446.81 105.7L1446.53 106.3L1446.34 109.8L1445.91 110.4L1444.91 110.4L1444.49 109.8L1444.30 106.3L1444.02 105.7L1444.02 101.3L1444.30 100.6L1444.49 96.9L1444.91 96.3zM1448.61 95.3L1449.03 96.0L1449.23 100.2L1449.51 101.3L1449.51 105.7L1449.23 106.6L1449.03 110.7L1448.61 111.3L1447.61 111.3L1447.19 110.7L1446.99 106.6L1446.71 105.7L1446.71 101.3L1446.99 100.2L1447.19 96.0L1447.61 95.3zM1451.31 97.9L1451.73 98.4L1451.92 101.3L1452.20 101.3L1452.20 105.7L1451.92 105.6L1451.73 108.4L1451.31 108.8L1450.31 108.8L1449.88 108.4L1449.69 105.6L1449.41 105.7L1449.41 101.3L1449.69 101.3L1449.88 98.4L1450.31 97.9zM1454.00 94.5L1454.42 95.2L1454.62 99.9L1454.90 101.3L1454.90 105.7L1454.62 107.0L1454.42 111.4L1454.00 112.1L1453.00 112.1L1452.58 111.4L1452.38 107.0L1452.10 105.7L1452.10 101.3L1452.38 99.9L1452.58 95.2L1453.00 94.5zM1456.69 99.7L1457.12 100.0L1457.31 102.0L1457.59 101.3L1457.59 105.7L1457.31 105.0L1457.12 106.9L1456.69 107.2L1455.69 107.2L1455.27 106.9L1455.08 105.0L1454.80 105.7L1454.80 101.3L1455.08 102.0L1455.27 100.0L1455.69 99.7zM1459.39 100.4L1459.81 100.6L1460.01 102.2L1460.29 101.3L1460.29 105.7L1460.01 104.7L1459.81 106.3L1459.39 106.5L1458.39 106.5L1457.97 106.3L1457.77 104.7L1457.49 105.7L1457.49 101.3L1457.77 102.2L1457.97 100.6L1458.39 100.4zM1462.09 99.8L1462.51 100.1L1462.70 102.0L1462.98 101.3L1462.98 105.7L1462.70 104.9L1462.51 106.8L1462.09 107.1L1461.09 107.1L1460.66 106.8L1460.47 104.9L1460.19 105.7L1460.19 101.3L1460.47 102.0L1460.66 100.1L1461.09 99.8zM1464.78 100.5L1465.20 100.7L1465.40 102.3L1465.68 101.3L1465.68 105.7L1465.40 104.7L1465.20 106.2L1464.78 106.4L1463.78 106.4L1463.36 106.2L1463.16 104.7L1462.88 105.7L1462.88 101.3L1463.16 102.3L1463.36 100.7L1463.78 100.5zM1467.47 94.5L1467.89 95.2L1468.09 99.9L1468.37 101.3L1468.37 105.7L1468.09 107.0L1467.89 111.4L1467.47 112.1L1466.47 112.1L1466.05 111.4L1465.86 107.0L1465.58 105.7L1465.58 101.3L1465.86 99.9L1466.05 95.2L1466.47 94.5zM1470.17 99.6L1470.59 99.9L1470.79 101.9L1471.07 101.3L1471.07 105.7L1470.79 105.0L1470.59 106.9L1470.17 107.2L1469.17 107.2L1468.75 106.9L1468.55 105.0L1468.27 105.7L1468.27 101.3L1468.55 101.9L1468.75 99.9L1469.17 99.6zM1472.87 100.3L1473.29 100.6L1473.48 102.2L1473.76 101.3L1473.76 105.7L1473.48 104.7L1473.29 106.3L1472.87 106.5L1471.87 106.5L1471.44 106.3L1471.25 104.7L1470.97 105.7L1470.97 101.3L1471.25 102.2L1471.44 100.6L1471.87 100.3zM1475.56 99.5L1475.98 99.8L1476.18 101.9L1476.46 101.3L1476.46 105.7L1476.18 105.0L1475.98 107.0L1475.56 107.3L1474.56 107.3L1474.14 107.0L1473.94 105.0L1473.66 105.7L1473.66 101.3L1473.94 101.9L1474.14 99.8L1474.56 99.5zM1478.25 100.4L1478.67 100.6L1478.87 102.3L1479.15 101.3L1479.15 105.7L1478.87 104.7L1478.67 106.2L1478.25 106.5L1477.25 106.5L1476.83 106.2L1476.63 104.7L1476.36 105.7L1476.36 101.3L1476.63 102.3L1476.83 100.6L1477.25 100.4zM1480.95 88.5L1481.37 89.7L1481.57 97.5L1481.85 101.2L1481.85 105.7L1481.57 109.3L1481.37 116.7L1480.95 117.9L1479.95 117.9L1479.53 116.7L1479.33 109.3L1479.05 105.7L1479.05 101.2L1479.33 97.5L1479.53 89.7L1479.95 88.5zM1483.64 94.7L1484.07 95.4L1484.26 100.0L1484.54 101.3L1484.54 105.7L1484.26 106.9L1484.07 111.2L1483.64 111.9L1482.64 111.9L1482.22 111.2L1482.03 106.9L1481.75 105.7L1481.75 101.3L1482.03 100.0L1482.22 95.4L1482.64 94.7zM1486.34 95.7L1486.76 96.4L1486.96 100.4L1487.24 101.3L1487.24 105.7L1486.96 106.5L1486.76 110.4L1486.34 111.0L1485.34 111.0L1484.92 110.4L1484.72 106.5L1484.44 105.7L1484.44 101.3L1484.72 100.4L1484.92 96.4L1485.34 95.7zM1489.03 94.7L1489.45 95.4L1489.65 100.0L1489.93 101.3L1489.93 105.7L1489.65 106.9L1489.45 111.3L1489.03 111.9L1488.03 111.9L1487.61 111.3L1487.41 106.9L1487.14 105.7L1487.14 101.3L1487.41 100.0L1487.61 95.4L1488.03 94.7zM1491.73 95.1L1492.15 95.8L1492.35 100.1L1492.63 101.3L1492.63 105.7L1492.35 106.7L1492.15 110.9L1491.73 111.5L1490.73 111.5L1490.31 110.9L1490.11 106.7L1489.83 105.7L1489.83 101.3L1490.11 100.1L1490.31 95.8L1490.73 95.1zM1494.42 84.5L1494.85 86.0L1495.04 95.9L1495.32 100.7L1495.32 106.2L1495.04 110.8L1494.85 120.3L1494.42 121.7L1493.42 121.7L1493.00 120.3L1492.81 110.8L1492.53 106.2L1492.53 100.7L1492.81 95.9L1493.00 86.0L1493.42 84.5zM1497.12 90.4L1497.54 91.4L1497.74 98.3L1498.02 101.3L1498.02 105.7L1497.74 108.5L1497.54 115.1L1497.12 116.1L1496.12 116.1L1495.70 115.1L1495.50 108.5L1495.22 105.7L1495.22 101.3L1495.50 98.3L1495.70 91.4L1496.12 90.4zM1499.82 92.0L1500.24 92.9L1500.43 98.9L1500.71 101.3L1500.71 105.7L1500.43 107.9L1500.24 113.7L1499.82 114.6L1498.82 114.6L1498.39 113.7L1498.20 107.9L1497.92 105.7L1497.92 101.3L1498.20 98.9L1498.39 92.9L1498.82 92.0zM1502.51 91.3L1502.93 92.3L1503.13 98.6L1503.41 101.3L1503.41 105.7L1503.13 108.2L1502.93 114.3L1502.51 115.2L1501.51 115.2L1501.09 114.3L1500.89 108.2L1500.61 105.7L1500.61 101.3L1500.89 98.6L1501.09 92.3L1501.51 91.3zM1505.20 91.5L1505.62 92.5L1505.82 98.7L1506.10 101.3L1506.10 105.7L1505.82 108.1L1505.62 114.1L1505.20 115.0L1504.20 115.0L1503.78 114.1L1503.59 108.1L1503.31 105.7L1503.31 101.3L1503.59 98.7L1503.78 92.5L1504.20 91.5zM1507.90 85.5L1508.32 86.9L1508.52 96.3L1508.80 100.8L1508.80 106.1L1508.52 110.4L1508.32 119.4L1507.90 120.8L1506.90 120.8L1506.48 119.4L1506.28 110.4L1506.00 106.1L1506.00 100.8L1506.28 96.3L1506.48 86.9L1506.90 85.5zM1510.60 91.6L1511.02 92.5L1511.21 98.7L1511.49 101.3L1511.49 105.7L1511.21 108.1L1511.02 114.0L1510.60 114.9L1509.60 114.9L1509.17 114.0L1508.98 108.1L1508.70 105.7L1508.70 101.3L1508.98 98.7L1509.17 92.5L1509.60 91.6zM1513.29 92.7L1513.71 93.6L1513.91 99.2L1514.19 101.3L1514.19 105.7L1513.91 107.6L1513.71 113.0L1513.29 113.8L1512.29 113.8L1511.87 113.0L1511.67 107.6L1511.39 105.7L1511.39 101.3L1511.67 99.2L1511.87 93.6L1512.29 92.7zM1515.98 91.4L1516.40 92.3L1516.60 98.6L1516.88 101.3L1516.88 105.7L1516.60 108.2L1516.40 114.2L1515.98 115.2L1514.98 115.2L1514.56 114.2L1514.37 108.2L1514.09 105.7L1514.09 101.3L1514.37 98.6L1514.56 92.3L1514.98 91.4zM1518.68 92.2L1519.10 93.1L1519.30 99.0L1519.58 101.3L1519.58 105.7L1519.30 107.8L1519.10 113.4L1518.68 114.3L1517.68 114.3L1517.26 113.4L1517.06 107.8L1516.78 105.7L1516.78 101.3L1517.06 99.0L1517.26 93.1L1517.68 92.2z" fill="url(#gg)"/><path d="M133.45 79.5L133.87 81.4L134.07 93.9L134.35 99.9L134.35 107.0L134.07 112.7L133.87 124.7L133.45 126.5L132.45 126.5L132.03 124.7L131.83 112.7L131.55 107.0L131.55 99.9L131.83 93.9L132.03 81.4L132.45 79.5zM136.14 85.6L136.56 87.0L136.76 96.3L137.04 100.8L137.04 106.1L136.76 110.4L136.56 119.3L136.14 120.7L135.14 120.7L134.72 119.3L134.52 110.4L134.25 106.1L134.25 100.8L134.52 96.3L134.72 87.0L135.14 85.6zM138.84 87.5L139.26 88.8L139.46 97.1L139.74 101.1L139.74 105.8L139.46 109.6L139.26 117.6L138.84 118.8L137.84 118.8L137.42 117.6L137.22 109.6L136.94 105.8L136.94 101.1L137.22 97.1L137.42 88.8L137.84 87.5zM141.53 86.3L141.95 87.6L142.16 96.6L142.43 100.9L142.43 106.0L142.16 110.1L141.95 118.7L141.53 120.0L140.53 120.0L140.12 118.7L139.91 110.1L139.64 106.0L139.64 100.9L139.91 96.6L140.12 87.6L140.53 86.3zM144.23 87.2L144.65 88.5L144.85 97.0L145.13 101.0L145.13 105.9L144.85 109.8L144.65 117.9L144.23 119.2L143.23 119.2L142.81 117.9L142.61 109.8L142.33 105.9L142.33 101.0L142.61 97.0L142.81 88.5L143.23 87.2zM146.92 75.5L147.34 77.7L147.54 92.3L147.82 99.3L147.82 107.5L147.54 114.3L147.34 128.2L146.92 130.4L145.92 130.4L145.50 128.2L145.30 114.3L145.03 107.5L145.03 99.3L145.30 92.3L145.50 77.7L145.92 75.5zM149.62 81.4L150.04 83.2L150.24 94.7L150.52 100.2L150.52 106.7L150.24 112.0L150.04 123.0L149.62 124.7L148.62 124.7L148.20 123.0L148.00 112.0L147.72 106.7L147.72 100.2L148.00 94.7L148.20 83.2L148.62 81.4zM152.31 82.4L152.73 84.0L152.94 95.0L153.21 100.3L153.21 106.5L152.94 111.6L152.73 122.2L152.31 123.8L151.31 123.8L150.90 122.2L150.69 111.6L150.42 106.5L150.42 100.3L150.69 95.0L150.90 84.0L151.31 82.4zM155.01 81.1L155.43 82.9L155.63 94.5L155.91 100.1L155.91 106.7L155.63 112.1L155.43 123.3L155.01 125.0L154.01 125.0L153.59 123.3L153.39 112.1L153.11 106.7L153.11 100.1L153.39 94.5L153.59 82.9L154.01 81.1zM157.70 84.6L158.12 86.1L158.32 95.9L158.60 100.7L158.60 106.2L158.32 110.8L158.12 120.2L157.70 121.7L156.70 121.7L156.28 120.2L156.08 110.8L155.81 106.2L155.81 100.7L156.08 95.9L156.28 86.1L156.70 84.6zM160.40 79.5L160.82 81.4L161.02 93.9L161.30 99.9L161.30 107.0L161.02 112.7L160.82 124.7L160.40 126.5L159.40 126.5L158.98 124.7L158.78 112.7L158.50 107.0L158.50 99.9L158.78 93.9L158.98 81.4L159.40 79.5zM163.09 86.0L163.51 87.4L163.72 96.5L163.99 100.9L163.99 106.0L163.72 110.2L163.51 119.0L163.09 120.3L162.09 120.3L161.68 119.0L161.47 110.2L161.20 106.0L161.20 100.9L161.47 96.5L161.68 87.4L162.09 86.0zM165.79 87.5L166.21 88.8L166.41 97.1L166.69 101.1L166.69 105.8L166.41 109.6L166.21 117.6L165.79 118.9L164.79 118.9L164.37 117.6L164.17 109.6L163.89 105.8L163.89 101.1L164.17 97.1L164.37 88.8L164.79 87.5zM168.48 86.4L168.90 87.7L169.10 96.6L169.38 100.9L169.38 106.0L169.10 110.1L168.90 118.6L168.48 119.9L167.48 119.9L167.06 118.6L166.86 110.1L166.59 106.0L166.59 100.9L166.86 96.6L167.06 87.7L167.48 86.4zM171.18 88.1L171.60 89.3L171.80 97.3L172.08 101.2L172.08 105.7L171.80 109.4L171.60 117.1L171.18 118.3L170.18 118.3L169.76 117.1L169.56 109.4L169.28 105.7L169.28 101.2L169.56 97.3L169.76 89.3L170.18 88.1zM173.88 83.5L174.29 85.1L174.50 95.5L174.77 100.5L174.77 106.4L174.50 111.2L174.29 121.2L173.88 122.7L172.88 122.7L172.46 121.2L172.25 111.2L171.98 106.4L171.98 100.5L172.25 95.5L172.46 85.1L172.88 83.5zM176.57 90.4L176.99 91.5L177.19 98.3L177.47 101.3L177.47 105.7L177.19 108.5L176.99 115.0L176.57 116.0L175.57 116.0L175.15 115.0L174.95 108.5L174.67 105.7L174.67 101.3L174.95 98.3L175.15 91.5L175.57 90.4zM179.26 91.0L179.68 92.0L179.88 98.5L180.16 101.3L180.16 105.7L179.88 108.3L179.68 114.5L179.26 115.5L178.26 115.5L177.84 114.5L177.64 108.3L177.37 105.7L177.37 101.3L177.64 98.5L177.84 92.0L178.26 91.0zM181.96 89.6L182.38 90.7L182.58 97.9L182.86 101.3L182.86 105.7L182.58 108.8L182.38 115.8L181.96 116.9L180.96 116.9L180.54 115.8L180.34 108.8L180.06 105.7L180.06 101.3L180.34 97.9L180.54 90.7L180.96 89.6zM184.65 90.5L185.07 91.6L185.27 98.3L185.55 101.3L185.55 105.7L185.27 108.5L185.07 115.0L184.65 116.0L183.65 116.0L183.23 115.0L183.03 108.5L182.76 105.7L182.76 101.3L183.03 98.3L183.23 91.6L183.65 90.5zM187.35 79.5L187.77 81.4L187.97 93.9L188.25 99.9L188.25 107.0L187.97 112.7L187.77 124.7L187.35 126.5L186.35 126.5L185.93 124.7L185.73 112.7L185.45 107.0L185.45 99.9L185.73 93.9L185.93 81.4L186.35 79.5zM190.04 86.4L190.46 87.7L190.66 96.6L190.94 100.9L190.94 106.0L190.66 110.1L190.46 118.6L190.04 120.0L189.04 120.0L188.62 118.6L188.42 110.1L188.15 106.0L188.15 100.9L188.42 96.6L188.62 87.7L189.04 86.4zM192.74 86.5L193.16 87.9L193.36 96.7L193.64 100.9L193.64 105.9L193.36 110.0L193.16 118.5L192.74 119.8L191.74 119.8L191.32 118.5L191.12 110.0L190.84 105.9L190.84 100.9L191.12 96.7L191.32 87.9L191.74 86.5zM195.44 85.3L195.85 86.8L196.06 96.2L196.33 100.8L196.33 106.1L196.06 110.5L195.85 119.6L195.44 121.0L194.44 121.0L194.02 119.6L193.81 110.5L193.54 106.1L193.54 100.8L193.81 96.2L194.02 86.8L194.44 85.3zM198.13 87.5L198.55 88.8L198.75 97.1L199.03 101.1L199.03 105.8L198.75 109.6L198.55 117.6L198.13 118.8L197.13 118.8L196.71 117.6L196.51 109.6L196.23 105.8L196.23 101.1L196.51 97.1L196.71 88.8L197.13 87.5zM200.82 75.5L201.24 77.7L201.44 92.3L201.72 99.3L201.72 107.5L201.44 114.3L201.24 128.2L200.82 130.4L199.82 130.4L199.41 128.2L199.20 114.3L198.93 107.5L198.93 99.3L199.20 92.3L199.41 77.7L199.82 75.5zM203.52 81.3L203.94 83.0L204.14 94.6L204.42 100.2L204.42 106.7L204.14 112.0L203.94 123.1L203.52 124.8L202.52 124.8L202.10 123.1L201.90 112.0L201.62 106.7L201.62 100.2L201.90 94.6L202.10 83.0L202.52 81.3zM206.21 82.3L206.63 84.0L206.83 95.0L207.11 100.3L207.11 106.6L206.83 111.6L206.63 122.2L206.21 123.8L205.21 123.8L204.79 122.2L204.59 111.6L204.32 106.6L204.32 100.3L204.59 95.0L204.79 84.0L205.21 82.3zM208.91 82.3L209.33 84.0L209.53 95.0L209.81 100.3L209.81 106.6L209.53 111.6L209.33 122.2L208.91 123.9L207.91 123.9L207.49 122.2L207.29 111.6L207.01 106.6L207.01 100.3L207.29 95.0L207.49 84.0L207.91 82.3zM211.60 86.0L212.02 87.4L212.22 96.5L212.50 100.9L212.50 106.0L212.22 110.2L212.02 119.0L211.60 120.3L210.60 120.3L210.19 119.0L209.98 110.2L209.71 106.0L209.71 100.9L209.98 96.5L210.19 87.4L210.60 86.0zM214.30 82.5L214.72 84.2L214.92 95.1L215.20 100.3L215.20 106.5L214.92 111.6L214.72 122.0L214.30 123.7L213.30 123.7L212.88 122.0L212.68 111.6L212.40 106.5L212.40 100.3L212.68 95.1L212.88 84.2L213.30 82.5zM217.00 88.1L217.41 89.3L217.62 97.3L217.89 101.2L217.89 105.7L217.62 109.4L217.41 117.1L217.00 118.3L216.00 118.3L215.58 117.1L215.38 109.4L215.10 105.7L215.10 101.2L215.38 97.3L215.58 89.3L216.00 88.1zM219.69 89.8L220.11 90.9L220.31 98.0L220.59 101.3L220.59 105.7L220.31 108.7L220.11 115.6L219.69 116.6L218.69 116.6L218.27 115.6L218.07 108.7L217.79 105.7L217.79 101.3L218.07 98.0L218.27 90.9L218.69 89.8zM222.38 89.4L222.80 90.5L223.00 97.9L223.28 101.3L223.28 105.7L223.00 108.9L222.80 115.9L222.38 117.0L221.38 117.0L220.97 115.9L220.76 108.9L220.49 105.7L220.49 101.3L220.76 97.9L220.97 90.5L221.38 89.4zM225.08 90.2L225.50 91.3L225.70 98.2L225.98 101.3L225.98 105.7L225.70 108.6L225.50 115.2L225.08 116.3L224.08 116.3L223.66 115.2L223.46 108.6L223.18 105.7L223.18 101.3L223.46 98.2L223.66 91.3L224.08 90.2zM227.77 80.5L228.19 82.3L228.39 94.3L228.67 100.0L228.67 106.8L228.39 112.3L228.19 123.8L227.77 125.6L226.77 125.6L226.35 123.8L226.15 112.3L225.88 106.8L225.88 100.0L226.15 94.3L226.35 82.3L226.77 80.5zM230.47 86.2L230.89 87.6L231.09 96.6L231.37 100.9L231.37 106.0L231.09 110.1L230.89 118.7L230.47 120.1L229.47 120.1L229.05 118.7L228.85 110.1L228.57 106.0L228.57 100.9L228.85 96.6L229.05 87.6L229.47 86.2zM233.16 87.5L233.58 88.7L233.78 97.1L234.06 101.1L234.06 105.8L233.78 109.7L233.58 117.7L233.16 118.9L232.16 118.9L231.74 117.7L231.54 109.7L231.27 105.8L231.27 101.1L231.54 97.1L231.74 88.7L232.16 87.5z" fill="url(#wg)"/></g></svg>
<div class="t" style="left:38.5px;top:204px;font-size:14.5px;background:linear-gradient(90deg,#74a6f0,#c4b0e8 55%,#f2d2b0);-webkit-background-clip:text;background-clip:text;color:transparent;line-height:16px">Mixer</div>
<div class="abs" style="left:79px;top:199.8px;width:38px;height:22.6px;border-radius:11.3px;background:linear-gradient(90deg,#58a6f2 0%,#a9a2ea 30%,#caa2e2 48%,#ecb4c4 75%,#f2e090 100%)"><div class="abs" style="right:1.4px;top:1.6px;width:19.4px;height:19.4px;border-radius:50%;background:#fffafa;border:1px solid #f0d0b8"></div></div>
<div class="hcell" style="left:131.5px;top:193px">Mid</div>
<div class="hcell" style="left:239.3px;top:193px">Quiet</div>
<div class="hcell" style="left:347.1px;top:193px">Intense</div>
<div class="hcell" style="left:454.9px;top:193px">Extreme</div>
<div class="hcell" style="left:562.7px;top:193px">Mid</div>
<div class="hcell" style="left:670.5px;top:193px">Quiet</div>
<div class="hcell" style="left:778.3px;top:193px">Quiet</div>
<div class="hcell" style="left:886.1px;top:193px">Mid</div>
<div class="hcell" style="left:993.9px;top:193px">Extreme</div>
<div class="hcell" style="left:1101.6999999999998px;top:193px">Intense</div>
<div class="hcell" style="left:1209.5px;top:193px">Quiet</div>
<div class="hcell" style="left:1317.3px;top:193px">Mid</div>
<div class="hcell" style="left:1425.1px;top:193px">Quiet</div>
<div class="lab" style="left:14px;top:236.5px">Melody</div>
<div class="lab" style="left:14px;top:276px">Backing</div>
<div class="lab" style="left:14px;top:315.5px">Bass</div>
<div class="lab" style="left:14px;top:355px">Drum</div>
<div class="lab" style="left:14px;top:394.5px">Fills</div>
<svg class="abs" style="left:0;top:0" width="1540" height="556" viewBox="0 0 1540 556"><rect x="131.50" y="193" width="103.9" height="36" fill="#19212c"/><rect x="239.30" y="193" width="103.9" height="36" fill="#19212c"/><rect x="347.10" y="193" width="103.9" height="36" fill="#19212c"/><rect x="454.90" y="193" width="103.9" height="36" fill="#19212c"/><rect x="562.70" y="193" width="103.9" height="36" fill="#19212c"/><rect x="670.50" y="193" width="103.9" height="36" fill="#19212c"/><rect x="778.30" y="193" width="103.9" height="36" fill="#19212c"/><rect x="886.10" y="193" width="103.9" height="36" fill="#19212c"/><rect x="993.90" y="193" width="103.9" height="36" fill="#19212c"/><rect x="1101.70" y="193" width="103.9" height="36" fill="#19212c"/><rect x="1209.50" y="193" width="103.9" height="36" fill="#19212c"/><rect x="1317.30" y="193" width="103.9" height="36" fill="#19212c"/><rect x="1425.10" y="193" width="103.9" height="36" fill="#19212c"/><rect x="131.5" y="236.5" width="103.9" height="35.8" fill="#1c252e"/><rect x="239.3" y="236.5" width="103.9" height="35.8" fill="#333c45"/><rect x="347.1" y="236.5" width="103.9" height="35.8" fill="#89cff0"/><rect x="454.9" y="236.5" width="103.9" height="35.8" fill="#2ca9e1"/><rect x="562.7" y="236.5" width="103.9" height="35.8" fill="#333c45"/><rect x="670.5" y="236.5" width="103.9" height="35.8" fill="#333c45"/><rect x="778.3" y="236.5" width="103.9" height="35.8" fill="#89cff0"/><rect x="886.1" y="236.5" width="103.9" height="35.8" fill="#89cff0"/><rect x="993.9" y="236.5" width="103.9" height="35.8" fill="#2ca9e1"/><rect x="1101.6999999999998" y="236.5" width="103.9" height="35.8" fill="#89cff0"/><rect x="1209.5" y="236.5" width="103.9" height="35.8" fill="#2ca9e1"/><rect x="1317.3" y="236.5" width="103.9" height="35.8" fill="#2ca9e1"/><rect x="1425.1" y="236.5" width="103.9" height="35.8" fill="#333c45"/><rect x="131.5" y="276" width="103.9" height="35.8" fill="#1f6485"/><rect x="239.3" y="276" width="103.9" height="35.8" fill="#89cff0"/><rect x="347.1" y="276" width="103.9" height="35.8" fill="#2ca9e1"/><rect x="454.9" y="276" width="103.9" height="35.8" fill="#2ca9e1"/><rect x="562.7" y="276" width="103.9" height="35.8" fill="#89cff0"/><rect x="670.5" y="276" width="103.9" height="35.8" fill="#89cff0"/><rect x="778.3" y="276" width="103.9" height="35.8" fill="#333c45"/><rect x="886.1" y="276" width="103.9" height="35.8" fill="#333c45"/><rect x="993.9" y="276" width="103.9" height="35.8" fill="#2ca9e1"/><rect x="1101.6999999999998" y="276" width="103.9" height="35.8" fill="#2ca9e1"/><rect x="1209.5" y="276" width="103.9" height="35.8" fill="#333c45"/><rect x="1317.3" y="276" width="103.9" height="35.8" fill="#333c45"/><rect x="1425.1" y="276" width="103.9" height="35.8" fill="#89cff0"/><rect x="131.5" y="315.5" width="103.9" height="35.8" fill="#1c252e"/><rect x="239.3" y="315.5" width="103.9" height="35.8" fill="#2ca9e1"/><rect x="347.1" y="315.5" width="103.9" height="35.8" fill="#2ca9e1"/><rect x="454.9" y="315.5" width="103.9" height="35.8" fill="#2ca9e1"/><rect x="562.7" y="315.5" width="103.9" height="35.8" fill="#333c45"/><rect x="670.5" y="315.5" width="103.9" height="35.8" fill="#2ca9e1"/><rect x="778.3" y="315.5" width="103.9" height="35.8" fill="#89cff0"/><rect x="886.1" y="315.5" width="103.9" height="35.8" fill="#89cff0"/><rect x="993.9" y="315.5" width="103.9" height="35.8" fill="#2ca9e1"/><rect x="1101.6999999999998" y="315.5" width="103.9" height="35.8" fill="#2ca9e1"/><rect x="1209.5" y="315.5" width="103.9" height="35.8" fill="#89cff0"/><rect x="1317.3" y="315.5" width="103.9" height="35.8" fill="#89cff0"/><rect x="1425.1" y="315.5" width="103.9" height="35.8" fill="#89cff0"/><rect x="131.5" y="355" width="103.9" height="35.8" fill="#4a748d"/><rect x="239.3" y="355" width="103.9" height="35.8" fill="#333c45"/><rect x="347.1" y="355" width="103.9" height="35.8" fill="#2ca9e1"/><rect x="454.9" y="355" width="103.9" height="35.8" fill="#2ca9e1"/><rect x="562.7" y="355" width="103.9" height="35.8" fill="#2ca9e1"/><rect x="670.5" y="355" width="103.9" height="35.8" fill="#333c45"/><rect x="778.3" y="355" width="103.9" height="35.8" fill="#89cff0"/><rect x="886.1" y="355" width="103.9" height="35.8" fill="#2ca9e1"/><rect x="993.9" y="355" width="103.9" height="35.8" fill="#2ca9e1"/><rect x="1101.6999999999998" y="355" width="103.9" height="35.8" fill="#2ca9e1"/><rect x="1209.5" y="355" width="103.9" height="35.8" fill="#333c45"/><rect x="1317.3" y="355" width="103.9" height="35.8" fill="#89cff0"/><rect x="1425.1" y="355" width="103.9" height="35.8" fill="#89cff0"/><path d="M131.5 394.5L160.5 412.25L131.5 430.0z" fill="#343d46"/><path d="M235.4 394.5L206.4 412.25L235.4 430.0z" fill="#343d46"/><path d="M239.3 394.5L268.3 412.25L239.3 430.0z" fill="#dceefa"/><path d="M343.20000000000005 394.5L314.20000000000005 412.25L343.20000000000005 430.0z" fill="#2ca9e1"/><path d="M347.1 394.5L376.1 412.25L347.1 430.0z" fill="#2ca9e1"/><path d="M451.0 394.5L422.0 412.25L451.0 430.0z" fill="#343d46"/><path d="M454.9 394.5L483.9 412.25L454.9 430.0z" fill="#dceefa"/><path d="M558.8 394.5L529.8 412.25L558.8 430.0z" fill="#dceefa"/><path d="M562.7 394.5L591.7 412.25L562.7 430.0z" fill="#89cff0"/><path d="M666.6 394.5L637.6 412.25L666.6 430.0z" fill="#343d46"/><path d="M670.5 394.5L699.5 412.25L670.5 430.0z" fill="#dceefa"/><path d="M774.4 394.5L745.4 412.25L774.4 430.0z" fill="#dceefa"/><path d="M778.3 394.5L807.3 412.25L778.3 430.0z" fill="#89cff0"/><path d="M882.1999999999999 394.5L853.1999999999999 412.25L882.1999999999999 430.0z" fill="#343d46"/><path d="M886.1 394.5L915.1 412.25L886.1 430.0z" fill="#dceefa"/><path d="M990.0 394.5L961.0 412.25L990.0 430.0z" fill="#2ca9e1"/><path d="M993.9 394.5L1022.9 412.25L993.9 430.0z" fill="#2ca9e1"/><path d="M1097.8 394.5L1068.8 412.25L1097.8 430.0z" fill="#343d46"/><path d="M1101.6999999999998 394.5L1130.6999999999998 412.25L1101.6999999999998 430.0z" fill="#89cff0"/><path d="M1205.6 394.5L1176.6 412.25L1205.6 430.0z" fill="#2ca9e1"/><path d="M1209.5 394.5L1238.5 412.25L1209.5 430.0z" fill="#2ca9e1"/><path d="M1313.4 394.5L1284.4 412.25L1313.4 430.0z" fill="#343d46"/><path d="M1317.3 394.5L1346.3 412.25L1317.3 430.0z" fill="#89cff0"/><path d="M1421.2 394.5L1392.2 412.25L1421.2 430.0z" fill="#dceefa"/><path d="M1425.1 394.5L1454.1 412.25L1425.1 430.0z" fill="#dceefa"/><path d="M1529.0 394.5L1500.0 412.25L1529.0 430.0z" fill="#89cff0"/></svg>
</div>
<div class="ctl" style="left:145.5px;width:157px">Length<svg class="abs" style="left:91px;top:8.6px" width="62" height="22" viewBox="0 0 62 22"><circle cx="11" cy="11" r="11" fill="#fff"/><path d="M11 5.4v11.2M5.4 11h11.2" stroke="#0d141c" stroke-width="3.2"/><circle cx="48" cy="11" r="11" fill="#fff"/><path d="M41.4 11h13.2" stroke="#0d141c" stroke-width="3.3"/></svg></div>
<div class="q" style="left:310.5px">?</div>
<div class="ctl" style="left:347px;width:88.5px;padding-left:9px">BPM<div class="caret" style="left:65.5px"></div></div>
<div class="q" style="left:443px">?</div>
<div class="ctl" style="left:480px;width:143.5px;padding-left:9px">Instruments<div class="caret" style="left:120px"></div></div>
<div class="q" style="left:631px">?</div>
<div class="ctl" style="left:668px;width:82px;padding-left:9px">Key<div class="caret" style="left:58.5px"></div></div>
<div class="q" style="left:757.5px">?</div>
<div class="ctl" style="left:794px;width:109px;padding-left:9.5px">Volume<div class="caret" style="left:85.5px"></div></div>
<div class="q" style="left:910.5px">?</div>
<div class="abs" style="left:14px;top:792px;width:1520px;height:14px;background:#373e46"></div>
<div class="abs" style="left:18px;top:795.5px;width:691px;height:7.5px;background:#d9dcdd;border-radius:1px"></div>
<div id="hdr"><svg class="abs" style="left:30px;top:16px" width="48" height="32" viewBox="30 16 48 32"><path d="M34.6 44.2 C38.6 42.6 39.9 38 40.2 33.7 C40.5 29 39.4 24.6 38.6 22.6 C39 25 39.8 27.6 40.5 29.6 C41.4 32.2 42.4 35.6 43.6 36.3 C45 36.6 46.6 35.2 47.7 33.7 C49 31.8 50 29 50.9 27.5 C51.5 26.5 52.2 25.8 52.9 25.9 C54 26.2 55.2 29 56 31.1 C56.9 33.4 57.8 36 58.6 37.4 C58.9 38 59.3 38.6 59.7 38.7 C60.6 38.6 61.6 36.4 62.3 34.8 C63.1 32.8 63.8 30.4 64.4 28.5 C65.4 25.6 67 23 69 21.8 C70.4 21 71.8 20.7 73.2 20.5" fill="none" stroke="#38ade6" stroke-width="1.5" stroke-linecap="round" stroke-linejoin="round"/><circle cx="35" cy="44" r="1.1" fill="#38ade6"/><circle cx="72.6" cy="20.6" r="1" fill="#38ade6"/></svg><svg class="abs" style="left:55px;top:14px" width="185" height="36" viewBox="55 14 185 36"><text x="60.5 79.2 102.85 124 146.2 165.9 185.15 206.75" y="40.3" font-family="Liberation Sans, sans-serif" font-weight="700" font-size="24.5" fill="#fff48c" stroke="#fff48c" stroke-width="1">SOUNDRAW</text></svg><div class="nav" style="left:895.5px;font-weight:700;letter-spacing:-0.18px">Create Music</div><div class="nav" style="left:1015px;font-weight:700;letter-spacing:-0.44px">License</div><div class="nav" style="left:1097px;font-weight:400;letter-spacing:-0.1px">FAQ</div><div class="nav" style="left:1155px;font-weight:700;letter-spacing:-0.52px">API for Businesses</div><div class="nav" style="left:1311px;font-weight:700;letter-spacing:-0.43px">Pricing</div><div class="nav" style="left:1387.5px;font-weight:700;letter-spacing:-0.53px">Log In</div><div id="signup">Sign Up</div></div>
</body></html>
